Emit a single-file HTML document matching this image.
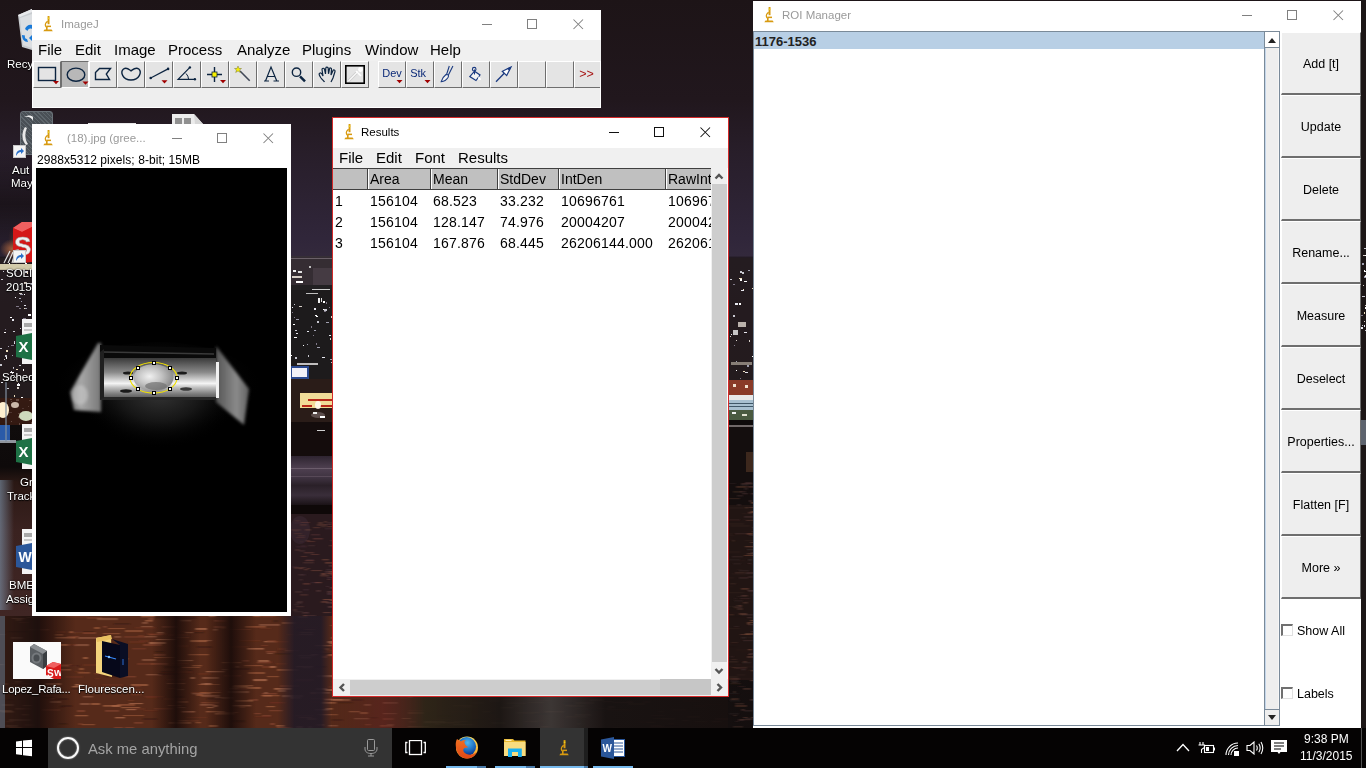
<!DOCTYPE html>
<html><head><meta charset="utf-8">
<style>
*{margin:0;padding:0;box-sizing:border-box}
html,body{width:1366px;height:768px;overflow:hidden}
body{position:relative;font-family:"Liberation Sans",sans-serif;background:#1f1619}
.a{position:absolute}
.t{position:absolute;white-space:nowrap;line-height:1}
.ttl{font-size:11.5px;color:#9a9a9a}
.menu{font-size:15px;color:#000}
.tb{position:absolute;top:61px;width:28px;height:27px;background:#e4e4e4;border-top:1px solid #fff;border-left:1px solid #fff;border-right:1px solid #6e6e6e;border-bottom:1px solid #6e6e6e}
.tb.p{background:#b8b8b8;border-top-color:#6e6e6e;border-left-color:#6e6e6e;border-right-color:#fff;border-bottom-color:#fff}
.c14{font-size:14px;color:#000}
.rb{position:absolute;left:1281px;width:80px;height:63px;background:#eeeeee;border-top:1px solid #fff;border-left:1px solid #fff;border-right:1px solid #6e6e6e;border-bottom:2px solid #6e6e6e}
.rbt{position:absolute;left:1281px;width:80px;text-align:center;font-size:12.5px;line-height:1;color:#000;white-space:nowrap}
.dl{position:absolute;font-size:11.5px;color:#fff;text-shadow:0 0 2px #000,0 1px 1px #000;white-space:nowrap;line-height:1}
</style></head><body>

<svg class="a" style="left:0;top:0" width="1366" height="768" viewBox="0 0 1366 768"><defs>
<linearGradient id="sky" x1="0" y1="0" x2="0" y2="768" gradientUnits="userSpaceOnUse">
<stop offset="0" stop-color="#1d1417"/><stop offset="0.13" stop-color="#21171d"/><stop offset="0.2" stop-color="#281e2a"/><stop offset="0.31" stop-color="#30263a"/>
<stop offset="0.333" stop-color="#33293c"/><stop offset="0.336" stop-color="#1e171c"/><stop offset="0.52" stop-color="#1c1416"/>
<stop offset="0.545" stop-color="#120c0c"/><stop offset="0.58" stop-color="#302630"/><stop offset="0.62" stop-color="#3a2e38"/>
<stop offset="0.65" stop-color="#1a1212"/><stop offset="0.68" stop-color="#3a2018"/><stop offset="0.8" stop-color="#5e3020"/>
<stop offset="1" stop-color="#4a2418"/></linearGradient>
<linearGradient id="vb" x1="0" y1="0" x2="1" y2="0"><stop offset="0" stop-color="#1a0c0a" stop-opacity="0"/><stop offset="0.5" stop-color="#1a0c0a" stop-opacity="0.92"/><stop offset="1" stop-color="#1a0c0a" stop-opacity="0"/></linearGradient>
<linearGradient id="vbp" x1="0" y1="0" x2="1" y2="0"><stop offset="0" stop-color="#221a26" stop-opacity="0"/><stop offset="0.3" stop-color="#221a26" stop-opacity="0.9"/><stop offset="0.8" stop-color="#221a26" stop-opacity="0.9"/><stop offset="1" stop-color="#221a26" stop-opacity="0"/></linearGradient>
<linearGradient id="bl1" x1="0" y1="0" x2="1" y2="0"><stop offset="0" stop-color="#8098b0" stop-opacity="0.8"/><stop offset="1" stop-color="#8098b0" stop-opacity="0"/></linearGradient><filter id="lb" x="0" y="0" width="100%" height="100%"><feGaussianBlur stdDeviation="0.4"/></filter><linearGradient id="fgrad" x1="332" y1="0" x2="753" y2="0" gradientUnits="userSpaceOnUse"><stop offset="0" stop-color="#4a2418" stop-opacity="0.2"/><stop offset="0.12" stop-color="#5a2020" stop-opacity="0.5"/><stop offset="0.22" stop-color="#2a2418" stop-opacity="0.9"/><stop offset="0.4" stop-color="#1a1614" stop-opacity="0.95"/><stop offset="0.52" stop-color="#3a3838" stop-opacity="0.9"/><stop offset="0.65" stop-color="#161212" stop-opacity="0.95"/><stop offset="1" stop-color="#140e0e" stop-opacity="0.95"/></linearGradient><linearGradient id="refl" x1="0" y1="0" x2="0" y2="1"><stop offset="0" stop-color="#2e2430"/><stop offset="0.25" stop-color="#4e4050"/><stop offset="0.45" stop-color="#3e3240"/><stop offset="0.6" stop-color="#2a2028"/><stop offset="0.8" stop-color="#3a2e3a"/><stop offset="1" stop-color="#1a1216"/></linearGradient><linearGradient id="lstrip" x1="0" y1="0" x2="0" y2="1"><stop offset="0" stop-color="#100c0c"/><stop offset="0.22" stop-color="#0e0a0a"/><stop offset="0.3" stop-color="#2a1814"/><stop offset="0.55" stop-color="#3a2220"/><stop offset="1" stop-color="#402624"/></linearGradient><radialGradient id="glw" cx="0.5" cy="0.5" r="0.5"><stop offset="0" stop-color="#ffb050" stop-opacity="0.9"/><stop offset="1" stop-color="#ff8030" stop-opacity="0"/></radialGradient>
</defs>
<rect x="0" y="0" width="1366" height="768" fill="url(#sky)"/>
<filter id="sb" x="-10%" y="-100%" width="120%" height="300%"><feGaussianBlur stdDeviation="1.2 0.5"/></filter><rect x="0" y="505" width="760" height="223" fill="#562a1a"/><g filter="url(#sb)"><rect x="239" y="539" width="16" height="1.1" fill="#8a4a30" opacity="0.6"/><rect x="272" y="518" width="13" height="1.0" fill="#3a1a12" opacity="0.6"/><rect x="312" y="559" width="14" height="1.1" fill="#8a4a30" opacity="0.6"/><rect x="720" y="646" width="14" height="1.1" fill="#3a1a12" opacity="0.6"/><rect x="28" y="554" width="14" height="1.2" fill="#3a1a12" opacity="0.6"/><rect x="101" y="531" width="10" height="2.0" fill="#b06a48" opacity="0.6"/><rect x="69" y="632" width="7" height="1.1" fill="#8a4a30" opacity="0.6"/><rect x="425" y="643" width="13" height="1.6" fill="#6a3020" opacity="0.6"/><rect x="349" y="711" width="11" height="1.3" fill="#b06a48" opacity="0.6"/><rect x="528" y="559" width="14" height="1.6" fill="#6a3020" opacity="0.6"/><rect x="552" y="569" width="22" height="1.1" fill="#3a1a12" opacity="0.6"/><rect x="117" y="581" width="21" height="1.5" fill="#8a4a30" opacity="0.6"/><rect x="579" y="633" width="20" height="1.4" fill="#6a3020" opacity="0.6"/><rect x="448" y="634" width="12" height="2.0" fill="#c07a58" opacity="0.6"/><rect x="355" y="653" width="5" height="1.8" fill="#9a6048" opacity="0.6"/><rect x="209" y="591" width="16" height="1.0" fill="#9a6048" opacity="0.6"/><rect x="264" y="641" width="13" height="1.3" fill="#c07a58" opacity="0.6"/><rect x="90" y="560" width="11" height="2.0" fill="#8a4a30" opacity="0.6"/><rect x="118" y="595" width="9" height="1.2" fill="#3a1a12" opacity="0.6"/><rect x="655" y="567" width="11" height="1.4" fill="#3a1a12" opacity="0.6"/><rect x="727" y="539" width="7" height="1.3" fill="#7a3e28" opacity="0.6"/><rect x="-1" y="690" width="7" height="1.3" fill="#b06a48" opacity="0.6"/><rect x="313" y="587" width="14" height="2.1" fill="#a05a3a" opacity="0.6"/><rect x="342" y="699" width="21" height="1.8" fill="#3a1a12" opacity="0.6"/><rect x="297" y="593" width="13" height="1.5" fill="#7a3e28" opacity="0.6"/><rect x="42" y="552" width="7" height="1.4" fill="#a05a3a" opacity="0.6"/><rect x="69" y="631" width="14" height="2.1" fill="#a05a3a" opacity="0.6"/><rect x="44" y="551" width="11" height="1.8" fill="#6a3020" opacity="0.6"/><rect x="454" y="611" width="6" height="1.6" fill="#9a6048" opacity="0.6"/><rect x="360" y="575" width="7" height="1.9" fill="#c07a58" opacity="0.6"/><rect x="359" y="659" width="13" height="1.2" fill="#6a3020" opacity="0.6"/><rect x="103" y="626" width="4" height="1.6" fill="#8a4a30" opacity="0.6"/><rect x="526" y="563" width="11" height="1.2" fill="#7a3e28" opacity="0.6"/><rect x="400" y="679" width="10" height="1.3" fill="#7a3e28" opacity="0.6"/><rect x="611" y="687" width="17" height="1.3" fill="#9a6048" opacity="0.6"/><rect x="264" y="511" width="5" height="1.3" fill="#c07a58" opacity="0.6"/><rect x="139" y="640" width="10" height="2.0" fill="#6a3020" opacity="0.6"/><rect x="725" y="586" width="8" height="1.3" fill="#7a3e28" opacity="0.6"/><rect x="250" y="613" width="22" height="1.7" fill="#a05a3a" opacity="0.6"/><rect x="359" y="651" width="18" height="1.1" fill="#8a4a30" opacity="0.6"/><rect x="691" y="679" width="18" height="1.6" fill="#b06a48" opacity="0.6"/><rect x="324" y="647" width="6" height="2.1" fill="#3a1a12" opacity="0.6"/><rect x="347" y="671" width="6" height="1.2" fill="#b06a48" opacity="0.6"/><rect x="11" y="637" width="12" height="1.8" fill="#9a6048" opacity="0.6"/><rect x="496" y="583" width="14" height="1.2" fill="#a05a3a" opacity="0.6"/><rect x="606" y="667" width="6" height="1.9" fill="#b06a48" opacity="0.6"/><rect x="324" y="699" width="19" height="1.3" fill="#c07a58" opacity="0.6"/><rect x="154" y="617" width="18" height="1.4" fill="#3a1a12" opacity="0.6"/><rect x="632" y="519" width="17" height="2.1" fill="#3a1a12" opacity="0.6"/><rect x="627" y="701" width="6" height="1.2" fill="#a05a3a" opacity="0.6"/><rect x="662" y="678" width="15" height="1.9" fill="#b06a48" opacity="0.6"/><rect x="123" y="611" width="17" height="1.7" fill="#6a3020" opacity="0.6"/><rect x="515" y="623" width="13" height="1.9" fill="#a05a3a" opacity="0.6"/><rect x="181" y="567" width="18" height="1.6" fill="#a05a3a" opacity="0.6"/><rect x="575" y="708" width="12" height="1.7" fill="#7a3e28" opacity="0.6"/><rect x="523" y="606" width="14" height="1.6" fill="#7a3e28" opacity="0.6"/><rect x="528" y="700" width="21" height="1.3" fill="#7a3e28" opacity="0.6"/><rect x="637" y="536" width="6" height="1.5" fill="#8a4a30" opacity="0.6"/><rect x="507" y="601" width="8" height="1.4" fill="#8a4a30" opacity="0.6"/><rect x="681" y="539" width="17" height="1.8" fill="#b06a48" opacity="0.6"/><rect x="185" y="536" width="12" height="1.9" fill="#8a4a30" opacity="0.6"/><rect x="297" y="614" width="22" height="2.0" fill="#b06a48" opacity="0.6"/><rect x="534" y="727" width="11" height="1.5" fill="#6a3020" opacity="0.6"/><rect x="235" y="666" width="4" height="1.7" fill="#9a6048" opacity="0.6"/><rect x="531" y="591" width="13" height="1.4" fill="#8a4a30" opacity="0.6"/><rect x="77" y="710" width="8" height="2.1" fill="#8a4a30" opacity="0.6"/><rect x="194" y="514" width="18" height="1.3" fill="#b06a48" opacity="0.6"/><rect x="621" y="694" width="16" height="2.1" fill="#3a1a12" opacity="0.6"/><rect x="105" y="710" width="14" height="1.8" fill="#8a4a30" opacity="0.6"/><rect x="205" y="683" width="7" height="2.1" fill="#c07a58" opacity="0.6"/><rect x="713" y="646" width="18" height="1.1" fill="#7a3e28" opacity="0.6"/><rect x="41" y="697" width="12" height="1.4" fill="#3a1a12" opacity="0.6"/><rect x="704" y="565" width="6" height="1.6" fill="#7a3e28" opacity="0.6"/><rect x="712" y="721" width="9" height="1.2" fill="#c07a58" opacity="0.6"/><rect x="474" y="623" width="8" height="1.5" fill="#b06a48" opacity="0.6"/><rect x="198" y="684" width="22" height="1.0" fill="#a05a3a" opacity="0.6"/><rect x="554" y="628" width="7" height="1.6" fill="#9a6048" opacity="0.6"/><rect x="72" y="688" width="12" height="1.6" fill="#3a1a12" opacity="0.6"/><rect x="737" y="574" width="8" height="1.3" fill="#7a3e28" opacity="0.6"/><rect x="631" y="663" width="15" height="1.5" fill="#6a3020" opacity="0.6"/><rect x="746" y="692" width="4" height="1.8" fill="#c07a58" opacity="0.6"/><rect x="322" y="517" width="16" height="1.5" fill="#c07a58" opacity="0.6"/><rect x="451" y="659" width="5" height="1.2" fill="#c07a58" opacity="0.6"/><rect x="333" y="564" width="21" height="2.2" fill="#6a3020" opacity="0.6"/><rect x="178" y="720" width="10" height="1.4" fill="#a05a3a" opacity="0.6"/><rect x="248" y="524" width="9" height="1.8" fill="#7a3e28" opacity="0.6"/><rect x="379" y="506" width="9" height="1.1" fill="#3a1a12" opacity="0.6"/><rect x="442" y="593" width="9" height="1.8" fill="#8a4a30" opacity="0.6"/><rect x="441" y="623" width="18" height="1.8" fill="#3a1a12" opacity="0.6"/><rect x="579" y="666" width="13" height="1.3" fill="#b06a48" opacity="0.6"/><rect x="24" y="691" width="20" height="1.8" fill="#b06a48" opacity="0.6"/><rect x="691" y="673" width="14" height="2.0" fill="#a05a3a" opacity="0.6"/><rect x="626" y="635" width="20" height="1.8" fill="#7a3e28" opacity="0.6"/><rect x="56" y="514" width="15" height="2.2" fill="#3a1a12" opacity="0.6"/><rect x="634" y="630" width="15" height="1.8" fill="#7a3e28" opacity="0.6"/><rect x="367" y="506" width="18" height="1.9" fill="#8a4a30" opacity="0.6"/><rect x="498" y="520" width="17" height="1.3" fill="#8a4a30" opacity="0.6"/><rect x="642" y="557" width="18" height="1.3" fill="#9a6048" opacity="0.6"/><rect x="370" y="590" width="13" height="1.8" fill="#a05a3a" opacity="0.6"/><rect x="465" y="648" width="5" height="1.2" fill="#c07a58" opacity="0.6"/><rect x="492" y="660" width="15" height="1.2" fill="#9a6048" opacity="0.6"/><rect x="37" y="565" width="16" height="1.8" fill="#9a6048" opacity="0.6"/><rect x="214" y="620" width="12" height="1.6" fill="#8a4a30" opacity="0.6"/><rect x="755" y="627" width="10" height="1.1" fill="#9a6048" opacity="0.6"/><rect x="3" y="607" width="19" height="2.2" fill="#9a6048" opacity="0.6"/><rect x="755" y="591" width="20" height="2.1" fill="#8a4a30" opacity="0.6"/><rect x="438" y="537" width="13" height="2.1" fill="#b06a48" opacity="0.6"/><rect x="455" y="646" width="9" height="1.1" fill="#6a3020" opacity="0.6"/><rect x="168" y="705" width="13" height="1.0" fill="#a05a3a" opacity="0.6"/><rect x="721" y="657" width="11" height="1.9" fill="#3a1a12" opacity="0.6"/><rect x="255" y="575" width="19" height="1.0" fill="#6a3020" opacity="0.6"/><rect x="636" y="532" width="21" height="1.9" fill="#c07a58" opacity="0.6"/><rect x="185" y="519" width="11" height="2.0" fill="#8a4a30" opacity="0.6"/><rect x="268" y="600" width="9" height="1.1" fill="#8a4a30" opacity="0.6"/><rect x="30" y="653" width="15" height="1.2" fill="#c07a58" opacity="0.6"/><rect x="326" y="575" width="18" height="1.9" fill="#3a1a12" opacity="0.6"/><rect x="671" y="686" width="15" height="2.1" fill="#7a3e28" opacity="0.6"/><rect x="544" y="516" width="17" height="1.5" fill="#b06a48" opacity="0.6"/><rect x="486" y="569" width="5" height="2.1" fill="#b06a48" opacity="0.6"/><rect x="121" y="598" width="9" height="1.3" fill="#c07a58" opacity="0.6"/><rect x="303" y="558" width="13" height="1.8" fill="#8a4a30" opacity="0.6"/><rect x="119" y="541" width="8" height="2.1" fill="#9a6048" opacity="0.6"/><rect x="414" y="606" width="10" height="1.9" fill="#3a1a12" opacity="0.6"/><rect x="97" y="548" width="6" height="1.4" fill="#8a4a30" opacity="0.6"/><rect x="236" y="587" width="19" height="1.2" fill="#a05a3a" opacity="0.6"/><rect x="567" y="597" width="11" height="1.6" fill="#3a1a12" opacity="0.6"/><rect x="198" y="673" width="13" height="1.7" fill="#6a3020" opacity="0.6"/><rect x="87" y="617" width="15" height="2.0" fill="#7a3e28" opacity="0.6"/><rect x="61" y="705" width="11" height="1.8" fill="#3a1a12" opacity="0.6"/><rect x="725" y="694" width="20" height="1.0" fill="#a05a3a" opacity="0.6"/><rect x="317" y="675" width="18" height="2.2" fill="#9a6048" opacity="0.6"/><rect x="-10" y="592" width="21" height="2.0" fill="#9a6048" opacity="0.6"/><rect x="739" y="560" width="6" height="1.2" fill="#8a4a30" opacity="0.6"/><rect x="715" y="666" width="16" height="1.9" fill="#9a6048" opacity="0.6"/><rect x="55" y="678" width="4" height="1.2" fill="#a05a3a" opacity="0.6"/><rect x="487" y="573" width="6" height="1.3" fill="#3a1a12" opacity="0.6"/><rect x="528" y="530" width="5" height="1.6" fill="#7a3e28" opacity="0.6"/><rect x="289" y="555" width="15" height="1.0" fill="#c07a58" opacity="0.6"/><rect x="757" y="567" width="10" height="2.0" fill="#7a3e28" opacity="0.6"/><rect x="356" y="557" width="8" height="2.2" fill="#c07a58" opacity="0.6"/><rect x="33" y="548" width="20" height="1.8" fill="#8a4a30" opacity="0.6"/><rect x="188" y="654" width="21" height="1.3" fill="#a05a3a" opacity="0.6"/><rect x="526" y="665" width="11" height="1.5" fill="#a05a3a" opacity="0.6"/><rect x="604" y="670" width="13" height="1.2" fill="#7a3e28" opacity="0.6"/><rect x="230" y="688" width="8" height="1.3" fill="#c07a58" opacity="0.6"/><rect x="74" y="644" width="15" height="2.1" fill="#9a6048" opacity="0.6"/><rect x="311" y="653" width="21" height="1.2" fill="#3a1a12" opacity="0.6"/><rect x="32" y="510" width="15" height="1.5" fill="#a05a3a" opacity="0.6"/><rect x="132" y="605" width="17" height="1.4" fill="#8a4a30" opacity="0.6"/><rect x="758" y="713" width="10" height="1.2" fill="#9a6048" opacity="0.6"/><rect x="15" y="653" width="11" height="1.4" fill="#6a3020" opacity="0.6"/><rect x="331" y="529" width="5" height="1.1" fill="#3a1a12" opacity="0.6"/><rect x="726" y="533" width="21" height="1.2" fill="#6a3020" opacity="0.6"/><rect x="582" y="574" width="18" height="1.1" fill="#9a6048" opacity="0.6"/><rect x="141" y="626" width="12" height="1.4" fill="#9a6048" opacity="0.6"/><rect x="13" y="597" width="19" height="1.9" fill="#a05a3a" opacity="0.6"/><rect x="279" y="608" width="18" height="1.1" fill="#7a3e28" opacity="0.6"/><rect x="565" y="705" width="10" height="1.3" fill="#a05a3a" opacity="0.6"/><rect x="192" y="665" width="10" height="1.3" fill="#a05a3a" opacity="0.6"/><rect x="546" y="638" width="19" height="2.1" fill="#8a4a30" opacity="0.6"/><rect x="9" y="557" width="13" height="2.1" fill="#3a1a12" opacity="0.6"/><rect x="598" y="709" width="19" height="1.2" fill="#9a6048" opacity="0.6"/><rect x="131" y="684" width="17" height="2.0" fill="#b06a48" opacity="0.6"/><rect x="458" y="578" width="10" height="1.4" fill="#8a4a30" opacity="0.6"/><rect x="384" y="592" width="7" height="1.5" fill="#a05a3a" opacity="0.6"/><rect x="361" y="626" width="7" height="1.5" fill="#8a4a30" opacity="0.6"/><rect x="751" y="564" width="6" height="1.1" fill="#9a6048" opacity="0.6"/><rect x="751" y="722" width="7" height="1.2" fill="#9a6048" opacity="0.6"/><rect x="468" y="655" width="17" height="2.0" fill="#8a4a30" opacity="0.6"/><rect x="590" y="571" width="9" height="1.3" fill="#c07a58" opacity="0.6"/><rect x="558" y="549" width="8" height="1.3" fill="#b06a48" opacity="0.6"/><rect x="207" y="707" width="7" height="1.1" fill="#c07a58" opacity="0.6"/><rect x="754" y="618" width="8" height="2.0" fill="#9a6048" opacity="0.6"/><rect x="753" y="528" width="13" height="2.0" fill="#9a6048" opacity="0.6"/><rect x="694" y="514" width="9" height="1.1" fill="#7a3e28" opacity="0.6"/><rect x="452" y="690" width="7" height="1.1" fill="#b06a48" opacity="0.6"/><rect x="336" y="563" width="18" height="2.1" fill="#8a4a30" opacity="0.6"/><rect x="481" y="663" width="10" height="1.0" fill="#6a3020" opacity="0.6"/><rect x="99" y="550" width="9" height="1.7" fill="#7a3e28" opacity="0.6"/><rect x="617" y="688" width="11" height="1.4" fill="#c07a58" opacity="0.6"/><rect x="50" y="512" width="13" height="1.6" fill="#3a1a12" opacity="0.6"/><rect x="68" y="593" width="14" height="1.8" fill="#8a4a30" opacity="0.6"/><rect x="493" y="594" width="9" height="2.2" fill="#c07a58" opacity="0.6"/><rect x="312" y="516" width="17" height="2.1" fill="#3a1a12" opacity="0.6"/><rect x="311" y="698" width="22" height="1.4" fill="#7a3e28" opacity="0.6"/><rect x="291" y="595" width="21" height="1.5" fill="#b06a48" opacity="0.6"/><rect x="316" y="688" width="11" height="2.1" fill="#9a6048" opacity="0.6"/><rect x="585" y="534" width="5" height="1.2" fill="#3a1a12" opacity="0.6"/><rect x="59" y="644" width="11" height="1.6" fill="#b06a48" opacity="0.6"/><rect x="258" y="541" width="7" height="1.1" fill="#3a1a12" opacity="0.6"/><rect x="368" y="684" width="21" height="1.2" fill="#b06a48" opacity="0.6"/><rect x="635" y="515" width="20" height="1.4" fill="#3a1a12" opacity="0.6"/><rect x="56" y="664" width="16" height="2.1" fill="#7a3e28" opacity="0.6"/><rect x="468" y="642" width="8" height="1.6" fill="#7a3e28" opacity="0.6"/><rect x="22" y="714" width="7" height="1.4" fill="#b06a48" opacity="0.6"/><rect x="180" y="667" width="20" height="1.0" fill="#a05a3a" opacity="0.6"/><rect x="504" y="577" width="11" height="1.5" fill="#c07a58" opacity="0.6"/><rect x="490" y="574" width="8" height="1.5" fill="#6a3020" opacity="0.6"/><rect x="334" y="603" width="4" height="1.7" fill="#9a6048" opacity="0.6"/><rect x="348" y="605" width="15" height="2.0" fill="#b06a48" opacity="0.6"/><rect x="614" y="594" width="5" height="1.4" fill="#6a3020" opacity="0.6"/><rect x="61" y="604" width="13" height="1.0" fill="#b06a48" opacity="0.6"/><rect x="53" y="669" width="18" height="1.6" fill="#a05a3a" opacity="0.6"/><rect x="569" y="705" width="16" height="1.9" fill="#a05a3a" opacity="0.6"/><rect x="650" y="727" width="17" height="2.0" fill="#7a3e28" opacity="0.6"/><rect x="91" y="703" width="9" height="2.0" fill="#b06a48" opacity="0.6"/><rect x="518" y="666" width="8" height="2.0" fill="#c07a58" opacity="0.6"/><rect x="112" y="705" width="9" height="2.0" fill="#b06a48" opacity="0.6"/><rect x="186" y="720" width="13" height="1.7" fill="#7a3e28" opacity="0.6"/><rect x="236" y="513" width="7" height="1.2" fill="#c07a58" opacity="0.6"/><rect x="513" y="705" width="7" height="1.9" fill="#8a4a30" opacity="0.6"/><rect x="582" y="516" width="19" height="2.2" fill="#9a6048" opacity="0.6"/><rect x="417" y="634" width="20" height="1.1" fill="#3a1a12" opacity="0.6"/><rect x="558" y="588" width="11" height="1.4" fill="#b06a48" opacity="0.6"/><rect x="267" y="676" width="12" height="1.2" fill="#a05a3a" opacity="0.6"/><rect x="218" y="620" width="10" height="2.2" fill="#6a3020" opacity="0.6"/><rect x="554" y="672" width="8" height="1.3" fill="#3a1a12" opacity="0.6"/><rect x="312" y="586" width="5" height="1.6" fill="#a05a3a" opacity="0.6"/><rect x="7" y="506" width="10" height="1.1" fill="#6a3020" opacity="0.6"/><rect x="401" y="597" width="9" height="1.2" fill="#6a3020" opacity="0.6"/><rect x="470" y="611" width="6" height="2.1" fill="#7a3e28" opacity="0.6"/><rect x="535" y="606" width="5" height="1.2" fill="#c07a58" opacity="0.6"/><rect x="300" y="564" width="4" height="1.8" fill="#6a3020" opacity="0.6"/><rect x="448" y="634" width="15" height="1.6" fill="#9a6048" opacity="0.6"/><rect x="181" y="706" width="5" height="1.6" fill="#3a1a12" opacity="0.6"/><rect x="133" y="541" width="20" height="1.1" fill="#7a3e28" opacity="0.6"/><rect x="100" y="549" width="15" height="1.6" fill="#3a1a12" opacity="0.6"/><rect x="616" y="544" width="10" height="1.4" fill="#a05a3a" opacity="0.6"/><rect x="755" y="667" width="13" height="1.6" fill="#3a1a12" opacity="0.6"/><rect x="640" y="671" width="12" height="1.9" fill="#9a6048" opacity="0.6"/><rect x="125" y="727" width="9" height="1.8" fill="#8a4a30" opacity="0.6"/><rect x="248" y="672" width="17" height="2.0" fill="#a05a3a" opacity="0.6"/><rect x="195" y="628" width="12" height="1.9" fill="#c07a58" opacity="0.6"/><rect x="218" y="712" width="20" height="1.1" fill="#a05a3a" opacity="0.6"/><rect x="121" y="707" width="19" height="1.2" fill="#b06a48" opacity="0.6"/><rect x="565" y="578" width="20" height="1.4" fill="#7a3e28" opacity="0.6"/><rect x="282" y="695" width="21" height="2.2" fill="#9a6048" opacity="0.6"/><rect x="354" y="623" width="4" height="1.0" fill="#7a3e28" opacity="0.6"/><rect x="429" y="574" width="8" height="1.7" fill="#8a4a30" opacity="0.6"/><rect x="425" y="543" width="5" height="1.1" fill="#b06a48" opacity="0.6"/><rect x="256" y="537" width="5" height="1.0" fill="#a05a3a" opacity="0.6"/><rect x="527" y="669" width="5" height="1.7" fill="#6a3020" opacity="0.6"/><rect x="143" y="718" width="14" height="1.8" fill="#3a1a12" opacity="0.6"/><rect x="72" y="551" width="6" height="1.0" fill="#8a4a30" opacity="0.6"/><rect x="625" y="646" width="9" height="1.1" fill="#8a4a30" opacity="0.6"/><rect x="600" y="649" width="9" height="1.4" fill="#c07a58" opacity="0.6"/><rect x="6" y="562" width="9" height="1.9" fill="#6a3020" opacity="0.6"/><rect x="691" y="677" width="15" height="1.6" fill="#c07a58" opacity="0.6"/><rect x="466" y="512" width="11" height="1.5" fill="#8a4a30" opacity="0.6"/><rect x="257" y="662" width="14" height="1.3" fill="#8a4a30" opacity="0.6"/><rect x="432" y="569" width="12" height="1.6" fill="#c07a58" opacity="0.6"/><rect x="577" y="723" width="4" height="1.6" fill="#9a6048" opacity="0.6"/><rect x="525" y="689" width="21" height="1.7" fill="#c07a58" opacity="0.6"/><rect x="435" y="540" width="19" height="2.1" fill="#7a3e28" opacity="0.6"/><rect x="374" y="530" width="15" height="1.1" fill="#8a4a30" opacity="0.6"/><rect x="474" y="584" width="11" height="1.5" fill="#8a4a30" opacity="0.6"/><rect x="315" y="649" width="11" height="1.4" fill="#3a1a12" opacity="0.6"/><rect x="684" y="617" width="11" height="2.1" fill="#7a3e28" opacity="0.6"/><rect x="717" y="533" width="15" height="1.8" fill="#a05a3a" opacity="0.6"/><rect x="258" y="578" width="7" height="2.0" fill="#6a3020" opacity="0.6"/><rect x="121" y="603" width="18" height="1.7" fill="#b06a48" opacity="0.6"/><rect x="247" y="648" width="17" height="1.6" fill="#c07a58" opacity="0.6"/><rect x="222" y="662" width="19" height="1.2" fill="#b06a48" opacity="0.6"/><rect x="741" y="666" width="15" height="1.4" fill="#7a3e28" opacity="0.6"/><rect x="243" y="547" width="22" height="1.9" fill="#8a4a30" opacity="0.6"/><rect x="117" y="652" width="8" height="1.2" fill="#b06a48" opacity="0.6"/><rect x="602" y="669" width="12" height="1.2" fill="#8a4a30" opacity="0.6"/><rect x="206" y="702" width="12" height="1.0" fill="#3a1a12" opacity="0.6"/><rect x="524" y="617" width="15" height="1.6" fill="#b06a48" opacity="0.6"/><rect x="188" y="670" width="4" height="1.3" fill="#3a1a12" opacity="0.6"/><rect x="530" y="636" width="16" height="2.0" fill="#7a3e28" opacity="0.6"/><rect x="513" y="648" width="12" height="1.4" fill="#8a4a30" opacity="0.6"/><rect x="679" y="559" width="11" height="1.9" fill="#b06a48" opacity="0.6"/><rect x="183" y="599" width="12" height="1.7" fill="#3a1a12" opacity="0.6"/><rect x="389" y="652" width="20" height="2.1" fill="#6a3020" opacity="0.6"/><rect x="589" y="592" width="13" height="2.2" fill="#a05a3a" opacity="0.6"/><rect x="183" y="554" width="17" height="2.1" fill="#7a3e28" opacity="0.6"/><rect x="390" y="528" width="14" height="1.6" fill="#9a6048" opacity="0.6"/><rect x="384" y="648" width="19" height="1.6" fill="#3a1a12" opacity="0.6"/><rect x="561" y="607" width="22" height="1.2" fill="#8a4a30" opacity="0.6"/><rect x="551" y="642" width="15" height="1.3" fill="#3a1a12" opacity="0.6"/><rect x="298" y="508" width="12" height="1.5" fill="#6a3020" opacity="0.6"/><rect x="437" y="529" width="9" height="1.5" fill="#7a3e28" opacity="0.6"/><rect x="756" y="719" width="12" height="1.2" fill="#8a4a30" opacity="0.6"/><rect x="613" y="646" width="12" height="1.7" fill="#7a3e28" opacity="0.6"/><rect x="617" y="538" width="16" height="2.0" fill="#3a1a12" opacity="0.6"/><rect x="350" y="571" width="14" height="1.2" fill="#9a6048" opacity="0.6"/><rect x="263" y="695" width="9" height="1.5" fill="#c07a58" opacity="0.6"/><rect x="747" y="656" width="13" height="2.0" fill="#c07a58" opacity="0.6"/><rect x="266" y="651" width="10" height="1.6" fill="#8a4a30" opacity="0.6"/><rect x="498" y="586" width="21" height="2.0" fill="#a05a3a" opacity="0.6"/><rect x="56" y="631" width="10" height="2.1" fill="#6a3020" opacity="0.6"/><rect x="478" y="508" width="4" height="2.1" fill="#c07a58" opacity="0.6"/><rect x="183" y="528" width="7" height="1.3" fill="#9a6048" opacity="0.6"/><rect x="257" y="539" width="20" height="2.0" fill="#b06a48" opacity="0.6"/><rect x="459" y="658" width="22" height="1.1" fill="#c07a58" opacity="0.6"/><rect x="142" y="659" width="14" height="1.9" fill="#9a6048" opacity="0.6"/><rect x="507" y="531" width="6" height="1.5" fill="#b06a48" opacity="0.6"/><rect x="354" y="629" width="13" height="2.1" fill="#9a6048" opacity="0.6"/><rect x="180" y="542" width="15" height="1.9" fill="#b06a48" opacity="0.6"/><rect x="637" y="609" width="14" height="1.8" fill="#9a6048" opacity="0.6"/><rect x="279" y="598" width="21" height="1.1" fill="#6a3020" opacity="0.6"/><rect x="480" y="511" width="15" height="1.8" fill="#6a3020" opacity="0.6"/><rect x="613" y="526" width="13" height="1.9" fill="#b06a48" opacity="0.6"/><rect x="16" y="665" width="15" height="1.4" fill="#6a3020" opacity="0.6"/><rect x="253" y="679" width="14" height="2.1" fill="#c07a58" opacity="0.6"/><rect x="325" y="599" width="14" height="2.0" fill="#c07a58" opacity="0.6"/><rect x="263" y="615" width="10" height="2.2" fill="#6a3020" opacity="0.6"/><rect x="741" y="651" width="18" height="1.4" fill="#6a3020" opacity="0.6"/><rect x="539" y="533" width="22" height="1.1" fill="#a05a3a" opacity="0.6"/><rect x="297" y="629" width="11" height="1.7" fill="#3a1a12" opacity="0.6"/><rect x="221" y="506" width="7" height="2.1" fill="#a05a3a" opacity="0.6"/><rect x="598" y="708" width="15" height="1.7" fill="#8a4a30" opacity="0.6"/><rect x="154" y="654" width="12" height="1.9" fill="#8a4a30" opacity="0.6"/><rect x="501" y="699" width="12" height="1.1" fill="#a05a3a" opacity="0.6"/><rect x="274" y="688" width="18" height="1.7" fill="#c07a58" opacity="0.6"/><rect x="654" y="546" width="5" height="1.0" fill="#a05a3a" opacity="0.6"/><rect x="373" y="621" width="19" height="1.9" fill="#3a1a12" opacity="0.6"/><rect x="433" y="710" width="12" height="1.0" fill="#3a1a12" opacity="0.6"/><rect x="447" y="726" width="16" height="1.2" fill="#3a1a12" opacity="0.6"/><rect x="413" y="523" width="12" height="2.1" fill="#a05a3a" opacity="0.6"/><rect x="319" y="507" width="16" height="2.2" fill="#8a4a30" opacity="0.6"/><rect x="158" y="532" width="13" height="1.3" fill="#7a3e28" opacity="0.6"/><rect x="337" y="671" width="21" height="1.4" fill="#b06a48" opacity="0.6"/><rect x="552" y="524" width="15" height="1.9" fill="#9a6048" opacity="0.6"/><rect x="506" y="703" width="20" height="1.1" fill="#a05a3a" opacity="0.6"/><rect x="-1" y="508" width="16" height="2.0" fill="#8a4a30" opacity="0.6"/><rect x="289" y="575" width="15" height="2.1" fill="#9a6048" opacity="0.6"/><rect x="459" y="576" width="21" height="1.9" fill="#9a6048" opacity="0.6"/><rect x="511" y="537" width="18" height="1.4" fill="#b06a48" opacity="0.6"/><rect x="475" y="598" width="11" height="1.9" fill="#c07a58" opacity="0.6"/><rect x="594" y="631" width="9" height="1.1" fill="#6a3020" opacity="0.6"/><rect x="660" y="667" width="4" height="1.2" fill="#c07a58" opacity="0.6"/><rect x="440" y="723" width="8" height="1.5" fill="#3a1a12" opacity="0.6"/><rect x="453" y="705" width="19" height="1.3" fill="#a05a3a" opacity="0.6"/><rect x="238" y="565" width="7" height="2.1" fill="#a05a3a" opacity="0.6"/><rect x="212" y="536" width="20" height="2.2" fill="#b06a48" opacity="0.6"/><rect x="201" y="695" width="19" height="1.8" fill="#9a6048" opacity="0.6"/><rect x="257" y="524" width="14" height="2.0" fill="#7a3e28" opacity="0.6"/><rect x="597" y="666" width="22" height="1.4" fill="#a05a3a" opacity="0.6"/><rect x="512" y="609" width="8" height="1.3" fill="#a05a3a" opacity="0.6"/><rect x="600" y="608" width="6" height="2.0" fill="#8a4a30" opacity="0.6"/><rect x="169" y="634" width="20" height="2.1" fill="#6a3020" opacity="0.6"/><rect x="357" y="636" width="7" height="1.2" fill="#b06a48" opacity="0.6"/><rect x="611" y="570" width="14" height="1.4" fill="#b06a48" opacity="0.6"/><rect x="180" y="711" width="13" height="2.0" fill="#6a3020" opacity="0.6"/><rect x="477" y="681" width="7" height="1.7" fill="#6a3020" opacity="0.6"/><rect x="206" y="640" width="6" height="1.2" fill="#9a6048" opacity="0.6"/><rect x="442" y="553" width="21" height="1.3" fill="#8a4a30" opacity="0.6"/><rect x="719" y="676" width="19" height="2.2" fill="#c07a58" opacity="0.6"/><rect x="640" y="581" width="22" height="1.5" fill="#a05a3a" opacity="0.6"/><rect x="29" y="629" width="20" height="1.5" fill="#8a4a30" opacity="0.6"/><rect x="654" y="648" width="21" height="1.8" fill="#8a4a30" opacity="0.6"/><rect x="188" y="631" width="16" height="2.1" fill="#3a1a12" opacity="0.6"/><rect x="131" y="694" width="11" height="1.3" fill="#7a3e28" opacity="0.6"/><rect x="123" y="715" width="21" height="1.1" fill="#a05a3a" opacity="0.6"/><rect x="635" y="515" width="18" height="1.9" fill="#9a6048" opacity="0.6"/><rect x="33" y="537" width="18" height="2.1" fill="#c07a58" opacity="0.6"/><rect x="444" y="603" width="16" height="1.6" fill="#6a3020" opacity="0.6"/><rect x="188" y="533" width="13" height="1.2" fill="#7a3e28" opacity="0.6"/><rect x="612" y="709" width="20" height="1.6" fill="#7a3e28" opacity="0.6"/><rect x="605" y="540" width="19" height="1.1" fill="#6a3020" opacity="0.6"/><rect x="674" y="536" width="12" height="1.1" fill="#3a1a12" opacity="0.6"/><rect x="639" y="645" width="12" height="1.4" fill="#7a3e28" opacity="0.6"/><rect x="358" y="645" width="7" height="1.3" fill="#a05a3a" opacity="0.6"/><rect x="129" y="606" width="20" height="1.5" fill="#b06a48" opacity="0.6"/><rect x="195" y="597" width="7" height="1.3" fill="#c07a58" opacity="0.6"/><rect x="248" y="542" width="13" height="1.4" fill="#9a6048" opacity="0.6"/><rect x="78" y="723" width="5" height="2.1" fill="#7a3e28" opacity="0.6"/><rect x="421" y="691" width="6" height="1.9" fill="#6a3020" opacity="0.6"/><rect x="323" y="563" width="8" height="1.3" fill="#3a1a12" opacity="0.6"/><rect x="213" y="705" width="5" height="1.9" fill="#c07a58" opacity="0.6"/><rect x="101" y="648" width="12" height="1.6" fill="#b06a48" opacity="0.6"/><rect x="331" y="681" width="21" height="1.3" fill="#6a3020" opacity="0.6"/><rect x="325" y="708" width="8" height="1.7" fill="#b06a48" opacity="0.6"/><rect x="639" y="621" width="8" height="1.2" fill="#8a4a30" opacity="0.6"/><rect x="628" y="703" width="17" height="1.9" fill="#b06a48" opacity="0.6"/><rect x="149" y="642" width="17" height="2.0" fill="#c07a58" opacity="0.6"/><rect x="146" y="520" width="17" height="1.5" fill="#a05a3a" opacity="0.6"/><rect x="389" y="583" width="9" height="1.8" fill="#9a6048" opacity="0.6"/><rect x="60" y="596" width="18" height="1.2" fill="#c07a58" opacity="0.6"/><rect x="181" y="631" width="22" height="1.0" fill="#6a3020" opacity="0.6"/><rect x="433" y="696" width="10" height="2.1" fill="#8a4a30" opacity="0.6"/><rect x="83" y="664" width="19" height="2.0" fill="#6a3020" opacity="0.6"/><rect x="590" y="699" width="14" height="2.1" fill="#c07a58" opacity="0.6"/><rect x="662" y="718" width="13" height="1.6" fill="#b06a48" opacity="0.6"/><rect x="6" y="721" width="8" height="1.2" fill="#8a4a30" opacity="0.6"/><rect x="230" y="629" width="21" height="1.0" fill="#7a3e28" opacity="0.6"/><rect x="191" y="692" width="15" height="1.6" fill="#7a3e28" opacity="0.6"/><rect x="531" y="528" width="20" height="1.9" fill="#a05a3a" opacity="0.6"/><rect x="200" y="609" width="15" height="1.9" fill="#8a4a30" opacity="0.6"/><rect x="84" y="595" width="6" height="1.7" fill="#7a3e28" opacity="0.6"/><rect x="103" y="633" width="17" height="1.2" fill="#a05a3a" opacity="0.6"/><rect x="712" y="592" width="12" height="2.0" fill="#a05a3a" opacity="0.6"/><rect x="295" y="715" width="18" height="1.4" fill="#7a3e28" opacity="0.6"/><rect x="636" y="665" width="19" height="1.7" fill="#6a3020" opacity="0.6"/><rect x="618" y="694" width="5" height="1.6" fill="#6a3020" opacity="0.6"/><rect x="182" y="599" width="15" height="1.4" fill="#b06a48" opacity="0.6"/><rect x="43" y="602" width="13" height="1.0" fill="#b06a48" opacity="0.6"/><rect x="314" y="594" width="22" height="1.5" fill="#a05a3a" opacity="0.6"/><rect x="613" y="702" width="20" height="1.0" fill="#c07a58" opacity="0.6"/><rect x="697" y="644" width="15" height="2.0" fill="#a05a3a" opacity="0.6"/><rect x="468" y="561" width="13" height="1.5" fill="#a05a3a" opacity="0.6"/><rect x="211" y="573" width="16" height="1.1" fill="#c07a58" opacity="0.6"/><rect x="55" y="637" width="21" height="1.5" fill="#b06a48" opacity="0.6"/><rect x="672" y="709" width="14" height="1.3" fill="#8a4a30" opacity="0.6"/><rect x="560" y="569" width="12" height="1.8" fill="#7a3e28" opacity="0.6"/><rect x="491" y="550" width="17" height="1.6" fill="#c07a58" opacity="0.6"/><rect x="462" y="610" width="10" height="1.3" fill="#7a3e28" opacity="0.6"/><rect x="135" y="627" width="21" height="1.5" fill="#6a3020" opacity="0.6"/><rect x="115" y="717" width="10" height="1.4" fill="#c07a58" opacity="0.6"/><rect x="209" y="725" width="9" height="1.9" fill="#b06a48" opacity="0.6"/><rect x="414" y="640" width="10" height="1.8" fill="#3a1a12" opacity="0.6"/><rect x="632" y="584" width="18" height="1.6" fill="#b06a48" opacity="0.6"/><rect x="311" y="654" width="7" height="1.2" fill="#c07a58" opacity="0.6"/><rect x="622" y="620" width="17" height="1.9" fill="#9a6048" opacity="0.6"/><rect x="197" y="646" width="15" height="1.8" fill="#3a1a12" opacity="0.6"/><rect x="661" y="506" width="18" height="1.7" fill="#9a6048" opacity="0.6"/><rect x="296" y="726" width="7" height="2.0" fill="#c07a58" opacity="0.6"/><rect x="662" y="640" width="11" height="1.5" fill="#9a6048" opacity="0.6"/><rect x="212" y="584" width="10" height="1.6" fill="#3a1a12" opacity="0.6"/><rect x="489" y="507" width="17" height="2.2" fill="#3a1a12" opacity="0.6"/><rect x="332" y="546" width="9" height="1.2" fill="#3a1a12" opacity="0.6"/><rect x="438" y="525" width="21" height="1.4" fill="#7a3e28" opacity="0.6"/><rect x="728" y="551" width="12" height="2.1" fill="#a05a3a" opacity="0.6"/><rect x="10" y="562" width="20" height="1.4" fill="#c07a58" opacity="0.6"/><rect x="405" y="728" width="13" height="1.6" fill="#3a1a12" opacity="0.6"/><rect x="290" y="585" width="15" height="1.4" fill="#a05a3a" opacity="0.6"/><rect x="511" y="622" width="6" height="1.4" fill="#3a1a12" opacity="0.6"/><rect x="489" y="712" width="7" height="1.2" fill="#3a1a12" opacity="0.6"/><rect x="365" y="603" width="15" height="2.2" fill="#6a3020" opacity="0.6"/><rect x="523" y="671" width="6" height="1.4" fill="#6a3020" opacity="0.6"/><rect x="743" y="689" width="13" height="1.1" fill="#c07a58" opacity="0.6"/><rect x="521" y="688" width="22" height="2.1" fill="#3a1a12" opacity="0.6"/><rect x="476" y="622" width="19" height="1.2" fill="#7a3e28" opacity="0.6"/><rect x="307" y="518" width="14" height="1.1" fill="#a05a3a" opacity="0.6"/><rect x="523" y="507" width="4" height="1.9" fill="#a05a3a" opacity="0.6"/><rect x="696" y="594" width="6" height="1.0" fill="#a05a3a" opacity="0.6"/><rect x="141" y="616" width="14" height="1.3" fill="#b06a48" opacity="0.6"/><rect x="432" y="597" width="6" height="1.2" fill="#8a4a30" opacity="0.6"/><rect x="12" y="522" width="21" height="1.6" fill="#9a6048" opacity="0.6"/><rect x="462" y="685" width="5" height="1.0" fill="#6a3020" opacity="0.6"/><rect x="101" y="558" width="9" height="1.0" fill="#8a4a30" opacity="0.6"/><rect x="652" y="716" width="5" height="1.2" fill="#3a1a12" opacity="0.6"/><rect x="5" y="554" width="11" height="1.9" fill="#a05a3a" opacity="0.6"/><rect x="329" y="643" width="8" height="1.1" fill="#b06a48" opacity="0.6"/><rect x="232" y="705" width="19" height="1.4" fill="#c07a58" opacity="0.6"/><rect x="729" y="616" width="21" height="1.3" fill="#3a1a12" opacity="0.6"/><rect x="510" y="635" width="11" height="1.5" fill="#9a6048" opacity="0.6"/><rect x="7" y="699" width="6" height="1.2" fill="#3a1a12" opacity="0.6"/><rect x="134" y="722" width="9" height="1.7" fill="#8a4a30" opacity="0.6"/><rect x="248" y="699" width="10" height="1.8" fill="#8a4a30" opacity="0.6"/><rect x="315" y="709" width="14" height="1.5" fill="#9a6048" opacity="0.6"/><rect x="208" y="558" width="5" height="1.8" fill="#6a3020" opacity="0.6"/><rect x="610" y="559" width="6" height="1.2" fill="#b06a48" opacity="0.6"/><rect x="417" y="609" width="18" height="1.3" fill="#6a3020" opacity="0.6"/><rect x="262" y="666" width="11" height="2.2" fill="#7a3e28" opacity="0.6"/><rect x="219" y="611" width="8" height="2.0" fill="#b06a48" opacity="0.6"/><rect x="715" y="728" width="15" height="1.5" fill="#6a3020" opacity="0.6"/><rect x="402" y="595" width="13" height="1.2" fill="#8a4a30" opacity="0.6"/><rect x="512" y="525" width="19" height="1.9" fill="#3a1a12" opacity="0.6"/><rect x="12" y="665" width="7" height="1.0" fill="#8a4a30" opacity="0.6"/><rect x="525" y="678" width="8" height="1.2" fill="#8a4a30" opacity="0.6"/><rect x="42" y="709" width="18" height="1.9" fill="#7a3e28" opacity="0.6"/><rect x="41" y="574" width="8" height="1.2" fill="#3a1a12" opacity="0.6"/><rect x="207" y="595" width="20" height="1.9" fill="#b06a48" opacity="0.6"/><rect x="711" y="544" width="11" height="2.0" fill="#6a3020" opacity="0.6"/><rect x="681" y="511" width="17" height="1.6" fill="#3a1a12" opacity="0.6"/><rect x="261" y="645" width="7" height="1.1" fill="#7a3e28" opacity="0.6"/><rect x="539" y="514" width="5" height="1.2" fill="#7a3e28" opacity="0.6"/><rect x="573" y="540" width="17" height="1.7" fill="#b06a48" opacity="0.6"/><rect x="425" y="556" width="13" height="1.6" fill="#3a1a12" opacity="0.6"/><rect x="506" y="633" width="21" height="1.1" fill="#c07a58" opacity="0.6"/><rect x="684" y="700" width="15" height="1.8" fill="#7a3e28" opacity="0.6"/><rect x="514" y="513" width="10" height="1.9" fill="#6a3020" opacity="0.6"/><rect x="567" y="524" width="17" height="1.5" fill="#7a3e28" opacity="0.6"/><rect x="206" y="525" width="21" height="1.5" fill="#6a3020" opacity="0.6"/><rect x="523" y="670" width="19" height="1.8" fill="#9a6048" opacity="0.6"/><rect x="382" y="656" width="8" height="1.8" fill="#b06a48" opacity="0.6"/><rect x="367" y="547" width="21" height="2.0" fill="#c07a58" opacity="0.6"/><rect x="124" y="542" width="18" height="1.3" fill="#c07a58" opacity="0.6"/><rect x="182" y="518" width="10" height="1.5" fill="#7a3e28" opacity="0.6"/><rect x="480" y="536" width="16" height="1.6" fill="#9a6048" opacity="0.6"/><rect x="173" y="559" width="13" height="1.5" fill="#6a3020" opacity="0.6"/><rect x="527" y="535" width="17" height="1.7" fill="#7a3e28" opacity="0.6"/><rect x="247" y="687" width="14" height="1.9" fill="#b06a48" opacity="0.6"/><rect x="511" y="540" width="22" height="2.0" fill="#3a1a12" opacity="0.6"/><rect x="630" y="531" width="9" height="1.4" fill="#7a3e28" opacity="0.6"/><rect x="23" y="705" width="9" height="1.1" fill="#c07a58" opacity="0.6"/><rect x="335" y="530" width="10" height="1.6" fill="#6a3020" opacity="0.6"/><rect x="213" y="629" width="5" height="1.6" fill="#9a6048" opacity="0.6"/><rect x="55" y="665" width="22" height="1.7" fill="#8a4a30" opacity="0.6"/><rect x="487" y="718" width="13" height="1.9" fill="#6a3020" opacity="0.6"/><rect x="-4" y="710" width="16" height="1.8" fill="#c07a58" opacity="0.6"/><rect x="493" y="522" width="17" height="1.0" fill="#3a1a12" opacity="0.6"/><rect x="636" y="571" width="7" height="1.8" fill="#b06a48" opacity="0.6"/><rect x="69" y="665" width="10" height="1.7" fill="#3a1a12" opacity="0.6"/><rect x="132" y="689" width="10" height="1.4" fill="#6a3020" opacity="0.6"/><rect x="635" y="562" width="5" height="1.1" fill="#3a1a12" opacity="0.6"/><rect x="687" y="716" width="13" height="1.6" fill="#b06a48" opacity="0.6"/><rect x="757" y="639" width="15" height="1.2" fill="#7a3e28" opacity="0.6"/><rect x="116" y="604" width="21" height="1.1" fill="#a05a3a" opacity="0.6"/><rect x="645" y="612" width="8" height="1.4" fill="#a05a3a" opacity="0.6"/><rect x="637" y="696" width="18" height="1.5" fill="#c07a58" opacity="0.6"/><rect x="45" y="517" width="17" height="2.1" fill="#8a4a30" opacity="0.6"/><rect x="328" y="654" width="19" height="2.1" fill="#b06a48" opacity="0.6"/><rect x="282" y="506" width="18" height="1.8" fill="#7a3e28" opacity="0.6"/><rect x="351" y="626" width="13" height="1.5" fill="#b06a48" opacity="0.6"/><rect x="740" y="719" width="15" height="2.0" fill="#a05a3a" opacity="0.6"/><rect x="547" y="579" width="16" height="1.7" fill="#3a1a12" opacity="0.6"/><rect x="724" y="612" width="16" height="1.4" fill="#6a3020" opacity="0.6"/><rect x="398" y="646" width="19" height="1.3" fill="#9a6048" opacity="0.6"/><rect x="522" y="538" width="14" height="1.7" fill="#3a1a12" opacity="0.6"/><rect x="267" y="559" width="12" height="1.3" fill="#7a3e28" opacity="0.6"/><rect x="129" y="703" width="14" height="1.1" fill="#c07a58" opacity="0.6"/><rect x="490" y="547" width="16" height="1.9" fill="#7a3e28" opacity="0.6"/><rect x="417" y="556" width="14" height="1.1" fill="#8a4a30" opacity="0.6"/><rect x="646" y="657" width="18" height="1.2" fill="#8a4a30" opacity="0.6"/><rect x="472" y="719" width="13" height="1.6" fill="#3a1a12" opacity="0.6"/><rect x="409" y="721" width="7" height="1.6" fill="#8a4a30" opacity="0.6"/><rect x="95" y="678" width="5" height="1.3" fill="#6a3020" opacity="0.6"/><rect x="22" y="662" width="21" height="1.6" fill="#8a4a30" opacity="0.6"/><rect x="535" y="600" width="20" height="1.7" fill="#7a3e28" opacity="0.6"/><rect x="423" y="710" width="20" height="1.2" fill="#6a3020" opacity="0.6"/><rect x="609" y="669" width="4" height="1.3" fill="#7a3e28" opacity="0.6"/><rect x="277" y="669" width="21" height="1.9" fill="#a05a3a" opacity="0.6"/><rect x="619" y="584" width="10" height="1.4" fill="#8a4a30" opacity="0.6"/><rect x="16" y="708" width="8" height="1.4" fill="#9a6048" opacity="0.6"/><rect x="6" y="725" width="12" height="1.9" fill="#9a6048" opacity="0.6"/><rect x="75" y="684" width="7" height="1.7" fill="#c07a58" opacity="0.6"/><rect x="663" y="654" width="19" height="1.7" fill="#c07a58" opacity="0.6"/><rect x="405" y="659" width="19" height="2.1" fill="#a05a3a" opacity="0.6"/><rect x="9" y="727" width="13" height="1.6" fill="#a05a3a" opacity="0.6"/><rect x="606" y="513" width="7" height="2.0" fill="#3a1a12" opacity="0.6"/><rect x="639" y="721" width="16" height="1.5" fill="#7a3e28" opacity="0.6"/><rect x="662" y="641" width="5" height="1.4" fill="#7a3e28" opacity="0.6"/><rect x="230" y="534" width="15" height="1.3" fill="#6a3020" opacity="0.6"/><rect x="550" y="579" width="12" height="2.1" fill="#6a3020" opacity="0.6"/><rect x="-5" y="634" width="10" height="1.0" fill="#9a6048" opacity="0.6"/><rect x="665" y="641" width="15" height="1.9" fill="#b06a48" opacity="0.6"/><rect x="200" y="566" width="13" height="1.3" fill="#b06a48" opacity="0.6"/><rect x="754" y="513" width="14" height="1.9" fill="#7a3e28" opacity="0.6"/><rect x="586" y="646" width="15" height="1.4" fill="#c07a58" opacity="0.6"/><rect x="601" y="558" width="18" height="1.2" fill="#8a4a30" opacity="0.6"/><rect x="224" y="675" width="17" height="1.6" fill="#7a3e28" opacity="0.6"/><rect x="260" y="628" width="11" height="1.1" fill="#6a3020" opacity="0.6"/><rect x="507" y="702" width="18" height="1.6" fill="#7a3e28" opacity="0.6"/><rect x="613" y="727" width="7" height="1.2" fill="#9a6048" opacity="0.6"/><rect x="302" y="593" width="18" height="2.1" fill="#8a4a30" opacity="0.6"/><rect x="101" y="666" width="9" height="1.7" fill="#6a3020" opacity="0.6"/><rect x="47" y="547" width="21" height="1.7" fill="#c07a58" opacity="0.6"/><rect x="437" y="725" width="10" height="1.9" fill="#3a1a12" opacity="0.6"/><rect x="545" y="711" width="19" height="1.4" fill="#b06a48" opacity="0.6"/><rect x="202" y="562" width="4" height="1.2" fill="#c07a58" opacity="0.6"/><rect x="172" y="509" width="5" height="1.5" fill="#c07a58" opacity="0.6"/><rect x="655" y="650" width="8" height="1.9" fill="#b06a48" opacity="0.6"/><rect x="453" y="523" width="19" height="2.1" fill="#6a3020" opacity="0.6"/><rect x="544" y="506" width="9" height="1.8" fill="#a05a3a" opacity="0.6"/><rect x="483" y="711" width="8" height="1.4" fill="#a05a3a" opacity="0.6"/><rect x="490" y="595" width="16" height="1.4" fill="#a05a3a" opacity="0.6"/><rect x="655" y="683" width="6" height="1.7" fill="#9a6048" opacity="0.6"/><rect x="751" y="594" width="21" height="2.0" fill="#a05a3a" opacity="0.6"/><rect x="702" y="631" width="22" height="1.1" fill="#6a3020" opacity="0.6"/><rect x="111" y="509" width="8" height="1.6" fill="#8a4a30" opacity="0.6"/><rect x="266" y="586" width="10" height="1.8" fill="#b06a48" opacity="0.6"/><rect x="496" y="639" width="10" height="1.9" fill="#c07a58" opacity="0.6"/><rect x="616" y="611" width="5" height="1.8" fill="#9a6048" opacity="0.6"/><rect x="421" y="586" width="14" height="1.3" fill="#c07a58" opacity="0.6"/><rect x="-3" y="611" width="16" height="1.9" fill="#6a3020" opacity="0.6"/><rect x="106" y="645" width="11" height="2.2" fill="#a05a3a" opacity="0.6"/><rect x="471" y="532" width="14" height="1.2" fill="#b06a48" opacity="0.6"/><rect x="190" y="640" width="17" height="2.1" fill="#b06a48" opacity="0.6"/><rect x="397" y="583" width="17" height="1.5" fill="#9a6048" opacity="0.6"/><rect x="154" y="708" width="20" height="1.5" fill="#7a3e28" opacity="0.6"/><rect x="239" y="706" width="6" height="1.9" fill="#8a4a30" opacity="0.6"/><rect x="611" y="709" width="16" height="1.4" fill="#7a3e28" opacity="0.6"/><rect x="424" y="596" width="21" height="2.1" fill="#7a3e28" opacity="0.6"/><rect x="14" y="510" width="17" height="1.3" fill="#6a3020" opacity="0.6"/><rect x="146" y="674" width="16" height="1.4" fill="#9a6048" opacity="0.6"/><rect x="157" y="632" width="7" height="2.0" fill="#c07a58" opacity="0.6"/><rect x="725" y="535" width="9" height="1.1" fill="#a05a3a" opacity="0.6"/><rect x="364" y="704" width="7" height="1.8" fill="#9a6048" opacity="0.6"/><rect x="153" y="517" width="18" height="2.0" fill="#6a3020" opacity="0.6"/><rect x="26" y="678" width="12" height="1.5" fill="#b06a48" opacity="0.6"/><rect x="756" y="571" width="4" height="1.1" fill="#a05a3a" opacity="0.6"/><rect x="93" y="573" width="13" height="1.4" fill="#b06a48" opacity="0.6"/><rect x="348" y="594" width="11" height="1.8" fill="#3a1a12" opacity="0.6"/><rect x="669" y="723" width="5" height="1.3" fill="#a05a3a" opacity="0.6"/><rect x="19" y="618" width="8" height="1.5" fill="#8a4a30" opacity="0.6"/><rect x="551" y="516" width="20" height="1.1" fill="#8a4a30" opacity="0.6"/><rect x="83" y="614" width="6" height="1.5" fill="#b06a48" opacity="0.6"/><rect x="162" y="626" width="15" height="1.7" fill="#8a4a30" opacity="0.6"/><rect x="398" y="692" width="21" height="1.1" fill="#7a3e28" opacity="0.6"/><rect x="647" y="722" width="8" height="1.1" fill="#b06a48" opacity="0.6"/><rect x="2" y="565" width="21" height="1.2" fill="#a05a3a" opacity="0.6"/><rect x="304" y="629" width="11" height="1.0" fill="#a05a3a" opacity="0.6"/><rect x="493" y="626" width="14" height="1.8" fill="#c07a58" opacity="0.6"/><rect x="297" y="576" width="12" height="2.2" fill="#3a1a12" opacity="0.6"/><rect x="576" y="702" width="18" height="2.1" fill="#a05a3a" opacity="0.6"/><rect x="174" y="617" width="22" height="1.8" fill="#3a1a12" opacity="0.6"/><rect x="753" y="689" width="16" height="1.1" fill="#a05a3a" opacity="0.6"/><rect x="690" y="516" width="16" height="1.4" fill="#9a6048" opacity="0.6"/><rect x="413" y="575" width="21" height="1.0" fill="#9a6048" opacity="0.6"/><rect x="383" y="637" width="22" height="1.3" fill="#3a1a12" opacity="0.6"/><rect x="264" y="519" width="22" height="1.3" fill="#6a3020" opacity="0.6"/><rect x="45" y="683" width="16" height="2.1" fill="#c07a58" opacity="0.6"/><rect x="192" y="693" width="19" height="1.4" fill="#9a6048" opacity="0.6"/><rect x="429" y="728" width="5" height="1.9" fill="#6a3020" opacity="0.6"/><rect x="393" y="623" width="19" height="1.3" fill="#b06a48" opacity="0.6"/><rect x="107" y="653" width="7" height="2.1" fill="#a05a3a" opacity="0.6"/><rect x="238" y="586" width="20" height="1.5" fill="#3a1a12" opacity="0.6"/><rect x="108" y="561" width="6" height="1.4" fill="#c07a58" opacity="0.6"/><rect x="339" y="525" width="11" height="2.2" fill="#8a4a30" opacity="0.6"/><rect x="336" y="612" width="18" height="1.9" fill="#b06a48" opacity="0.6"/><rect x="-5" y="534" width="13" height="1.8" fill="#6a3020" opacity="0.6"/><rect x="393" y="684" width="9" height="1.7" fill="#a05a3a" opacity="0.6"/><rect x="429" y="518" width="7" height="1.9" fill="#c07a58" opacity="0.6"/><rect x="696" y="562" width="9" height="1.5" fill="#9a6048" opacity="0.6"/><rect x="651" y="550" width="12" height="2.0" fill="#6a3020" opacity="0.6"/><rect x="699" y="665" width="11" height="1.1" fill="#c07a58" opacity="0.6"/><rect x="737" y="601" width="15" height="1.3" fill="#7a3e28" opacity="0.6"/><rect x="287" y="634" width="21" height="1.2" fill="#6a3020" opacity="0.6"/><rect x="39" y="550" width="19" height="1.1" fill="#9a6048" opacity="0.6"/><rect x="282" y="622" width="13" height="2.1" fill="#a05a3a" opacity="0.6"/><rect x="73" y="631" width="21" height="1.8" fill="#3a1a12" opacity="0.6"/><rect x="309" y="611" width="20" height="1.5" fill="#9a6048" opacity="0.6"/><rect x="94" y="673" width="4" height="1.3" fill="#7a3e28" opacity="0.6"/><rect x="299" y="514" width="16" height="1.7" fill="#3a1a12" opacity="0.6"/><rect x="583" y="531" width="8" height="1.1" fill="#a05a3a" opacity="0.6"/><rect x="68" y="525" width="18" height="1.7" fill="#a05a3a" opacity="0.6"/><rect x="624" y="550" width="10" height="2.0" fill="#3a1a12" opacity="0.6"/><rect x="640" y="536" width="11" height="1.1" fill="#b06a48" opacity="0.6"/><rect x="237" y="547" width="22" height="1.2" fill="#c07a58" opacity="0.6"/><rect x="390" y="524" width="11" height="1.8" fill="#c07a58" opacity="0.6"/><rect x="418" y="619" width="12" height="1.1" fill="#c07a58" opacity="0.6"/><rect x="181" y="590" width="12" height="1.6" fill="#c07a58" opacity="0.6"/><rect x="146" y="517" width="14" height="1.4" fill="#9a6048" opacity="0.6"/><rect x="495" y="663" width="7" height="2.1" fill="#6a3020" opacity="0.6"/><rect x="144" y="710" width="14" height="1.1" fill="#6a3020" opacity="0.6"/><rect x="-3" y="520" width="21" height="2.0" fill="#a05a3a" opacity="0.6"/><rect x="201" y="683" width="9" height="1.9" fill="#9a6048" opacity="0.6"/><rect x="303" y="667" width="8" height="1.2" fill="#b06a48" opacity="0.6"/><rect x="324" y="648" width="5" height="2.0" fill="#8a4a30" opacity="0.6"/><rect x="617" y="616" width="4" height="1.9" fill="#b06a48" opacity="0.6"/><rect x="374" y="655" width="16" height="1.4" fill="#7a3e28" opacity="0.6"/><rect x="402" y="540" width="18" height="1.9" fill="#8a4a30" opacity="0.6"/><rect x="349" y="550" width="6" height="1.1" fill="#7a3e28" opacity="0.6"/><rect x="497" y="562" width="20" height="1.8" fill="#b06a48" opacity="0.6"/><rect x="658" y="711" width="6" height="1.2" fill="#9a6048" opacity="0.6"/><rect x="216" y="557" width="14" height="1.4" fill="#b06a48" opacity="0.6"/><rect x="228" y="563" width="14" height="1.3" fill="#7a3e28" opacity="0.6"/><rect x="291" y="512" width="11" height="1.8" fill="#7a3e28" opacity="0.6"/><rect x="494" y="660" width="8" height="1.2" fill="#b06a48" opacity="0.6"/><rect x="321" y="656" width="6" height="2.0" fill="#8a4a30" opacity="0.6"/><rect x="496" y="552" width="16" height="1.6" fill="#8a4a30" opacity="0.6"/><rect x="214" y="583" width="18" height="1.6" fill="#8a4a30" opacity="0.6"/><rect x="144" y="567" width="9" height="1.7" fill="#8a4a30" opacity="0.6"/><rect x="145" y="610" width="18" height="1.9" fill="#7a3e28" opacity="0.6"/><rect x="436" y="572" width="14" height="1.1" fill="#a05a3a" opacity="0.6"/><rect x="255" y="716" width="16" height="1.1" fill="#6a3020" opacity="0.6"/><rect x="260" y="612" width="10" height="1.4" fill="#8a4a30" opacity="0.6"/><rect x="597" y="572" width="5" height="1.7" fill="#8a4a30" opacity="0.6"/><rect x="565" y="530" width="7" height="1.5" fill="#a05a3a" opacity="0.6"/><rect x="16" y="619" width="6" height="1.8" fill="#b06a48" opacity="0.6"/><rect x="310" y="692" width="5" height="1.9" fill="#b06a48" opacity="0.6"/><rect x="267" y="653" width="6" height="1.0" fill="#9a6048" opacity="0.6"/><rect x="224" y="563" width="6" height="1.3" fill="#b06a48" opacity="0.6"/><rect x="372" y="625" width="6" height="1.6" fill="#b06a48" opacity="0.6"/><rect x="428" y="514" width="9" height="2.1" fill="#c07a58" opacity="0.6"/><rect x="301" y="550" width="6" height="1.3" fill="#7a3e28" opacity="0.6"/><rect x="676" y="508" width="21" height="1.6" fill="#7a3e28" opacity="0.6"/><rect x="520" y="556" width="18" height="1.2" fill="#c07a58" opacity="0.6"/><rect x="759" y="600" width="15" height="1.1" fill="#8a4a30" opacity="0.6"/><rect x="55" y="634" width="8" height="1.7" fill="#a05a3a" opacity="0.6"/><rect x="622" y="521" width="10" height="1.1" fill="#7a3e28" opacity="0.6"/><rect x="466" y="659" width="19" height="1.4" fill="#9a6048" opacity="0.6"/><rect x="446" y="546" width="10" height="2.1" fill="#3a1a12" opacity="0.6"/><rect x="15" y="681" width="7" height="1.6" fill="#b06a48" opacity="0.6"/><rect x="106" y="582" width="7" height="1.2" fill="#7a3e28" opacity="0.6"/><rect x="518" y="663" width="5" height="1.0" fill="#9a6048" opacity="0.6"/><rect x="19" y="622" width="10" height="1.1" fill="#8a4a30" opacity="0.6"/><rect x="143" y="644" width="19" height="1.9" fill="#8a4a30" opacity="0.6"/><rect x="491" y="722" width="14" height="2.0" fill="#9a6048" opacity="0.6"/><rect x="508" y="671" width="6" height="2.0" fill="#c07a58" opacity="0.6"/><rect x="687" y="671" width="19" height="2.0" fill="#b06a48" opacity="0.6"/><rect x="325" y="689" width="18" height="2.0" fill="#c07a58" opacity="0.6"/><rect x="566" y="637" width="16" height="1.8" fill="#8a4a30" opacity="0.6"/><rect x="736" y="681" width="9" height="2.0" fill="#7a3e28" opacity="0.6"/><rect x="175" y="636" width="14" height="2.1" fill="#a05a3a" opacity="0.6"/><rect x="292" y="680" width="18" height="1.8" fill="#6a3020" opacity="0.6"/><rect x="626" y="596" width="6" height="1.8" fill="#6a3020" opacity="0.6"/><rect x="501" y="707" width="12" height="1.4" fill="#c07a58" opacity="0.6"/><rect x="367" y="509" width="6" height="2.0" fill="#3a1a12" opacity="0.6"/><rect x="306" y="572" width="7" height="1.7" fill="#8a4a30" opacity="0.6"/><rect x="262" y="693" width="15" height="1.4" fill="#8a4a30" opacity="0.6"/><rect x="754" y="547" width="20" height="1.5" fill="#7a3e28" opacity="0.6"/><rect x="83" y="657" width="5" height="2.0" fill="#b06a48" opacity="0.6"/><rect x="290" y="579" width="7" height="1.2" fill="#6a3020" opacity="0.6"/><rect x="675" y="641" width="20" height="1.5" fill="#9a6048" opacity="0.6"/><rect x="235" y="700" width="18" height="1.7" fill="#b06a48" opacity="0.6"/><rect x="291" y="507" width="19" height="1.1" fill="#7a3e28" opacity="0.6"/><rect x="340" y="685" width="9" height="1.4" fill="#8a4a30" opacity="0.6"/><rect x="748" y="669" width="18" height="1.8" fill="#b06a48" opacity="0.6"/><rect x="705" y="704" width="16" height="1.1" fill="#6a3020" opacity="0.6"/><rect x="332" y="719" width="11" height="1.8" fill="#3a1a12" opacity="0.6"/><rect x="712" y="685" width="5" height="1.8" fill="#9a6048" opacity="0.6"/><rect x="270" y="723" width="5" height="2.0" fill="#8a4a30" opacity="0.6"/><rect x="419" y="605" width="18" height="2.1" fill="#9a6048" opacity="0.6"/><rect x="17" y="578" width="6" height="2.1" fill="#c07a58" opacity="0.6"/><rect x="101" y="636" width="14" height="1.1" fill="#3a1a12" opacity="0.6"/><rect x="124" y="636" width="22" height="1.8" fill="#7a3e28" opacity="0.6"/><rect x="214" y="626" width="12" height="2.2" fill="#8a4a30" opacity="0.6"/><rect x="610" y="656" width="11" height="2.2" fill="#6a3020" opacity="0.6"/><rect x="522" y="567" width="7" height="1.7" fill="#a05a3a" opacity="0.6"/><rect x="601" y="582" width="7" height="1.6" fill="#a05a3a" opacity="0.6"/><rect x="115" y="670" width="7" height="1.4" fill="#a05a3a" opacity="0.6"/><rect x="442" y="722" width="18" height="1.4" fill="#b06a48" opacity="0.6"/><rect x="200" y="704" width="13" height="1.7" fill="#9a6048" opacity="0.6"/><rect x="300" y="657" width="11" height="1.4" fill="#9a6048" opacity="0.6"/><rect x="195" y="550" width="20" height="1.5" fill="#3a1a12" opacity="0.6"/><rect x="481" y="679" width="10" height="1.2" fill="#9a6048" opacity="0.6"/><rect x="499" y="694" width="11" height="1.1" fill="#3a1a12" opacity="0.6"/><rect x="269" y="710" width="14" height="1.3" fill="#8a4a30" opacity="0.6"/><rect x="190" y="677" width="5" height="2.0" fill="#c07a58" opacity="0.6"/><rect x="262" y="715" width="9" height="1.3" fill="#8a4a30" opacity="0.6"/><rect x="664" y="526" width="15" height="2.0" fill="#8a4a30" opacity="0.6"/><rect x="706" y="542" width="7" height="1.9" fill="#8a4a30" opacity="0.6"/><rect x="586" y="593" width="21" height="1.9" fill="#6a3020" opacity="0.6"/><rect x="298" y="616" width="10" height="2.0" fill="#b06a48" opacity="0.6"/><rect x="399" y="621" width="16" height="2.1" fill="#b06a48" opacity="0.6"/><rect x="154" y="657" width="21" height="1.1" fill="#a05a3a" opacity="0.6"/><rect x="646" y="654" width="14" height="1.5" fill="#c07a58" opacity="0.6"/><rect x="595" y="657" width="19" height="1.2" fill="#7a3e28" opacity="0.6"/><rect x="507" y="673" width="13" height="2.1" fill="#a05a3a" opacity="0.6"/><rect x="562" y="688" width="16" height="2.1" fill="#b06a48" opacity="0.6"/><rect x="489" y="700" width="11" height="2.1" fill="#8a4a30" opacity="0.6"/><rect x="584" y="640" width="13" height="1.7" fill="#7a3e28" opacity="0.6"/><rect x="228" y="585" width="14" height="2.1" fill="#8a4a30" opacity="0.6"/><rect x="267" y="661" width="5" height="2.0" fill="#6a3020" opacity="0.6"/><rect x="158" y="607" width="18" height="1.5" fill="#a05a3a" opacity="0.6"/><rect x="742" y="637" width="15" height="1.0" fill="#9a6048" opacity="0.6"/><rect x="75" y="555" width="15" height="1.4" fill="#6a3020" opacity="0.6"/><rect x="399" y="556" width="14" height="2.0" fill="#c07a58" opacity="0.6"/><rect x="636" y="685" width="14" height="1.0" fill="#b06a48" opacity="0.6"/><rect x="12" y="618" width="12" height="1.1" fill="#c07a58" opacity="0.6"/><rect x="548" y="635" width="11" height="1.6" fill="#3a1a12" opacity="0.6"/><rect x="164" y="698" width="22" height="2.0" fill="#6a3020" opacity="0.6"/><rect x="497" y="561" width="16" height="1.7" fill="#3a1a12" opacity="0.6"/><rect x="340" y="657" width="17" height="1.5" fill="#6a3020" opacity="0.6"/><rect x="464" y="530" width="7" height="1.9" fill="#8a4a30" opacity="0.6"/><rect x="557" y="620" width="12" height="1.2" fill="#7a3e28" opacity="0.6"/><rect x="585" y="550" width="18" height="2.0" fill="#c07a58" opacity="0.6"/><rect x="566" y="716" width="21" height="1.9" fill="#a05a3a" opacity="0.6"/><rect x="38" y="551" width="4" height="2.0" fill="#c07a58" opacity="0.6"/><rect x="419" y="645" width="14" height="1.4" fill="#6a3020" opacity="0.6"/><rect x="225" y="515" width="7" height="1.4" fill="#a05a3a" opacity="0.6"/><rect x="609" y="606" width="6" height="1.1" fill="#b06a48" opacity="0.6"/><rect x="270" y="702" width="13" height="1.1" fill="#6a3020" opacity="0.6"/><rect x="602" y="611" width="19" height="1.2" fill="#8a4a30" opacity="0.6"/><rect x="397" y="561" width="11" height="1.4" fill="#a05a3a" opacity="0.6"/><rect x="712" y="548" width="9" height="2.0" fill="#3a1a12" opacity="0.6"/><rect x="586" y="667" width="7" height="2.1" fill="#3a1a12" opacity="0.6"/><rect x="93" y="508" width="8" height="1.7" fill="#3a1a12" opacity="0.6"/><rect x="11" y="686" width="22" height="1.1" fill="#a05a3a" opacity="0.6"/><rect x="147" y="633" width="20" height="2.0" fill="#6a3020" opacity="0.6"/><rect x="471" y="702" width="13" height="1.8" fill="#7a3e28" opacity="0.6"/><rect x="-4" y="551" width="10" height="2.1" fill="#8a4a30" opacity="0.6"/><rect x="445" y="533" width="8" height="1.5" fill="#9a6048" opacity="0.6"/><rect x="577" y="632" width="17" height="2.0" fill="#b06a48" opacity="0.6"/><rect x="298" y="655" width="17" height="1.3" fill="#9a6048" opacity="0.6"/><rect x="523" y="610" width="7" height="2.1" fill="#3a1a12" opacity="0.6"/><rect x="38" y="558" width="22" height="1.3" fill="#3a1a12" opacity="0.6"/><rect x="426" y="671" width="8" height="1.9" fill="#a05a3a" opacity="0.6"/><rect x="177" y="707" width="8" height="1.0" fill="#9a6048" opacity="0.6"/><rect x="27" y="559" width="21" height="1.3" fill="#a05a3a" opacity="0.6"/><rect x="706" y="647" width="21" height="1.3" fill="#b06a48" opacity="0.6"/><rect x="350" y="612" width="21" height="1.9" fill="#8a4a30" opacity="0.6"/><rect x="134" y="685" width="7" height="1.6" fill="#8a4a30" opacity="0.6"/><rect x="383" y="718" width="11" height="2.1" fill="#8a4a30" opacity="0.6"/><rect x="646" y="629" width="19" height="1.6" fill="#8a4a30" opacity="0.6"/><rect x="534" y="653" width="15" height="1.5" fill="#a05a3a" opacity="0.6"/><rect x="421" y="552" width="7" height="1.6" fill="#9a6048" opacity="0.6"/><rect x="151" y="663" width="17" height="1.8" fill="#8a4a30" opacity="0.6"/><rect x="462" y="524" width="13" height="1.8" fill="#8a4a30" opacity="0.6"/><rect x="552" y="694" width="19" height="1.1" fill="#6a3020" opacity="0.6"/><rect x="201" y="574" width="9" height="1.6" fill="#6a3020" opacity="0.6"/><rect x="582" y="507" width="5" height="1.1" fill="#7a3e28" opacity="0.6"/><rect x="390" y="607" width="11" height="1.7" fill="#7a3e28" opacity="0.6"/><rect x="696" y="668" width="18" height="2.1" fill="#a05a3a" opacity="0.6"/><rect x="542" y="512" width="16" height="2.0" fill="#3a1a12" opacity="0.6"/><rect x="607" y="517" width="15" height="1.4" fill="#c07a58" opacity="0.6"/><rect x="534" y="561" width="9" height="1.4" fill="#6a3020" opacity="0.6"/><rect x="284" y="541" width="7" height="2.1" fill="#9a6048" opacity="0.6"/><rect x="577" y="692" width="22" height="1.9" fill="#c07a58" opacity="0.6"/><rect x="609" y="508" width="14" height="1.4" fill="#6a3020" opacity="0.6"/><rect x="699" y="578" width="18" height="1.9" fill="#6a3020" opacity="0.6"/><rect x="602" y="624" width="6" height="2.0" fill="#6a3020" opacity="0.6"/><rect x="317" y="580" width="5" height="1.1" fill="#9a6048" opacity="0.6"/><rect x="114" y="623" width="16" height="1.6" fill="#3a1a12" opacity="0.6"/><rect x="707" y="621" width="18" height="1.8" fill="#7a3e28" opacity="0.6"/><rect x="158" y="673" width="20" height="1.9" fill="#3a1a12" opacity="0.6"/><rect x="541" y="726" width="7" height="1.5" fill="#b06a48" opacity="0.6"/><rect x="522" y="671" width="18" height="1.3" fill="#c07a58" opacity="0.6"/><rect x="730" y="525" width="20" height="1.8" fill="#b06a48" opacity="0.6"/><rect x="495" y="638" width="17" height="1.4" fill="#8a4a30" opacity="0.6"/><rect x="552" y="624" width="5" height="1.1" fill="#8a4a30" opacity="0.6"/><rect x="546" y="650" width="13" height="2.1" fill="#9a6048" opacity="0.6"/><rect x="127" y="527" width="9" height="1.5" fill="#b06a48" opacity="0.6"/><rect x="333" y="667" width="6" height="2.1" fill="#6a3020" opacity="0.6"/><rect x="238" y="551" width="11" height="1.9" fill="#8a4a30" opacity="0.6"/><rect x="648" y="684" width="16" height="1.3" fill="#a05a3a" opacity="0.6"/><rect x="641" y="521" width="6" height="1.9" fill="#c07a58" opacity="0.6"/><rect x="499" y="545" width="7" height="1.1" fill="#a05a3a" opacity="0.6"/><rect x="285" y="650" width="14" height="1.3" fill="#8a4a30" opacity="0.6"/><rect x="218" y="565" width="21" height="2.1" fill="#6a3020" opacity="0.6"/><rect x="270" y="666" width="6" height="1.9" fill="#c07a58" opacity="0.6"/><rect x="275" y="542" width="16" height="2.0" fill="#b06a48" opacity="0.6"/><rect x="210" y="590" width="18" height="1.3" fill="#7a3e28" opacity="0.6"/><rect x="673" y="675" width="19" height="1.3" fill="#9a6048" opacity="0.6"/><rect x="192" y="507" width="6" height="1.5" fill="#6a3020" opacity="0.6"/><rect x="171" y="512" width="12" height="1.1" fill="#9a6048" opacity="0.6"/><rect x="418" y="615" width="11" height="1.6" fill="#b06a48" opacity="0.6"/><rect x="691" y="600" width="5" height="1.2" fill="#c07a58" opacity="0.6"/><rect x="268" y="610" width="21" height="1.7" fill="#8a4a30" opacity="0.6"/><rect x="382" y="613" width="8" height="1.7" fill="#3a1a12" opacity="0.6"/><rect x="75" y="715" width="13" height="1.3" fill="#b06a48" opacity="0.6"/><rect x="383" y="576" width="6" height="1.6" fill="#9a6048" opacity="0.6"/><rect x="702" y="608" width="17" height="1.1" fill="#9a6048" opacity="0.6"/><rect x="476" y="527" width="9" height="1.9" fill="#8a4a30" opacity="0.6"/><rect x="82" y="724" width="13" height="1.2" fill="#a05a3a" opacity="0.6"/><rect x="473" y="686" width="20" height="1.8" fill="#a05a3a" opacity="0.6"/><rect x="404" y="557" width="13" height="1.7" fill="#6a3020" opacity="0.6"/><rect x="102" y="684" width="21" height="1.9" fill="#6a3020" opacity="0.6"/><rect x="495" y="650" width="17" height="1.0" fill="#9a6048" opacity="0.6"/><rect x="684" y="523" width="8" height="1.0" fill="#9a6048" opacity="0.6"/><rect x="741" y="692" width="9" height="1.4" fill="#7a3e28" opacity="0.6"/><rect x="713" y="595" width="16" height="1.0" fill="#9a6048" opacity="0.6"/><rect x="169" y="611" width="13" height="2.1" fill="#9a6048" opacity="0.6"/><rect x="508" y="552" width="20" height="1.2" fill="#9a6048" opacity="0.6"/><rect x="145" y="728" width="12" height="1.3" fill="#6a3020" opacity="0.6"/><rect x="14" y="545" width="11" height="1.9" fill="#6a3020" opacity="0.6"/><rect x="583" y="558" width="19" height="1.2" fill="#c07a58" opacity="0.6"/><rect x="457" y="611" width="14" height="1.5" fill="#c07a58" opacity="0.6"/><rect x="175" y="532" width="21" height="1.2" fill="#b06a48" opacity="0.6"/><rect x="759" y="535" width="10" height="1.9" fill="#b06a48" opacity="0.6"/><rect x="170" y="542" width="15" height="1.5" fill="#3a1a12" opacity="0.6"/><rect x="185" y="632" width="8" height="1.2" fill="#c07a58" opacity="0.6"/><rect x="735" y="664" width="6" height="1.5" fill="#8a4a30" opacity="0.6"/><rect x="735" y="707" width="5" height="1.9" fill="#b06a48" opacity="0.6"/><rect x="660" y="599" width="14" height="2.0" fill="#8a4a30" opacity="0.6"/><rect x="334" y="616" width="14" height="1.8" fill="#6a3020" opacity="0.6"/><rect x="682" y="720" width="7" height="1.1" fill="#c07a58" opacity="0.6"/><rect x="429" y="545" width="16" height="1.3" fill="#7a3e28" opacity="0.6"/><rect x="307" y="718" width="9" height="2.0" fill="#a05a3a" opacity="0.6"/><rect x="471" y="610" width="16" height="2.0" fill="#a05a3a" opacity="0.6"/><rect x="333" y="581" width="18" height="2.1" fill="#b06a48" opacity="0.6"/><rect x="348" y="577" width="21" height="2.2" fill="#8a4a30" opacity="0.6"/><rect x="728" y="551" width="11" height="2.2" fill="#7a3e28" opacity="0.6"/><rect x="276" y="663" width="11" height="1.6" fill="#6a3020" opacity="0.6"/><rect x="88" y="555" width="8" height="1.3" fill="#a05a3a" opacity="0.6"/><rect x="383" y="702" width="15" height="1.8" fill="#9a6048" opacity="0.6"/><rect x="438" y="715" width="14" height="1.4" fill="#3a1a12" opacity="0.6"/><rect x="232" y="686" width="16" height="1.8" fill="#b06a48" opacity="0.6"/><rect x="293" y="531" width="15" height="1.4" fill="#7a3e28" opacity="0.6"/><rect x="479" y="662" width="21" height="1.2" fill="#c07a58" opacity="0.6"/><rect x="490" y="541" width="5" height="1.5" fill="#a05a3a" opacity="0.6"/><rect x="143" y="508" width="14" height="1.9" fill="#c07a58" opacity="0.6"/><rect x="12" y="683" width="19" height="1.1" fill="#7a3e28" opacity="0.6"/><rect x="-7" y="556" width="9" height="1.9" fill="#7a3e28" opacity="0.6"/><rect x="5" y="530" width="21" height="2.2" fill="#b06a48" opacity="0.6"/><rect x="352" y="521" width="10" height="1.4" fill="#9a6048" opacity="0.6"/><rect x="664" y="579" width="21" height="1.3" fill="#c07a58" opacity="0.6"/><rect x="60" y="644" width="17" height="1.3" fill="#6a3020" opacity="0.6"/><rect x="253" y="615" width="7" height="2.1" fill="#a05a3a" opacity="0.6"/><rect x="568" y="692" width="12" height="1.4" fill="#a05a3a" opacity="0.6"/><rect x="167" y="683" width="18" height="1.1" fill="#b06a48" opacity="0.6"/><rect x="137" y="663" width="18" height="1.9" fill="#7a3e28" opacity="0.6"/><rect x="469" y="689" width="12" height="1.5" fill="#a05a3a" opacity="0.6"/><rect x="138" y="635" width="6" height="1.8" fill="#7a3e28" opacity="0.6"/><rect x="568" y="617" width="13" height="1.4" fill="#a05a3a" opacity="0.6"/><rect x="14" y="667" width="8" height="1.3" fill="#9a6048" opacity="0.6"/><rect x="463" y="706" width="8" height="1.4" fill="#c07a58" opacity="0.6"/><rect x="91" y="519" width="12" height="1.4" fill="#c07a58" opacity="0.6"/><rect x="295" y="622" width="10" height="1.9" fill="#6a3020" opacity="0.6"/><rect x="59" y="516" width="13" height="1.2" fill="#7a3e28" opacity="0.6"/><rect x="346" y="549" width="6" height="1.6" fill="#6a3020" opacity="0.6"/><rect x="518" y="611" width="10" height="1.1" fill="#8a4a30" opacity="0.6"/><rect x="470" y="603" width="5" height="2.0" fill="#7a3e28" opacity="0.6"/><rect x="336" y="695" width="21" height="1.5" fill="#6a3020" opacity="0.6"/><rect x="402" y="679" width="17" height="1.4" fill="#a05a3a" opacity="0.6"/><rect x="71" y="607" width="15" height="1.3" fill="#a05a3a" opacity="0.6"/><rect x="651" y="715" width="14" height="1.1" fill="#a05a3a" opacity="0.6"/><rect x="221" y="520" width="18" height="1.9" fill="#3a1a12" opacity="0.6"/><rect x="390" y="537" width="17" height="1.9" fill="#a05a3a" opacity="0.6"/><rect x="15" y="708" width="16" height="1.6" fill="#8a4a30" opacity="0.6"/><rect x="233" y="688" width="15" height="1.5" fill="#7a3e28" opacity="0.6"/><rect x="124" y="676" width="12" height="1.4" fill="#8a4a30" opacity="0.6"/><rect x="676" y="607" width="14" height="1.1" fill="#3a1a12" opacity="0.6"/><rect x="354" y="718" width="15" height="1.3" fill="#9a6048" opacity="0.6"/><rect x="293" y="550" width="18" height="1.9" fill="#9a6048" opacity="0.6"/><rect x="72" y="686" width="10" height="1.3" fill="#c07a58" opacity="0.6"/><rect x="385" y="687" width="17" height="2.2" fill="#6a3020" opacity="0.6"/><rect x="231" y="668" width="19" height="1.8" fill="#3a1a12" opacity="0.6"/><rect x="33" y="505" width="8" height="1.4" fill="#c07a58" opacity="0.6"/><rect x="457" y="706" width="21" height="1.4" fill="#6a3020" opacity="0.6"/><rect x="621" y="564" width="11" height="1.4" fill="#6a3020" opacity="0.6"/><rect x="294" y="568" width="21" height="1.0" fill="#3a1a12" opacity="0.6"/><rect x="572" y="677" width="14" height="2.1" fill="#a05a3a" opacity="0.6"/><rect x="753" y="667" width="18" height="2.0" fill="#c07a58" opacity="0.6"/><rect x="379" y="578" width="12" height="1.4" fill="#7a3e28" opacity="0.6"/><rect x="405" y="580" width="19" height="1.4" fill="#b06a48" opacity="0.6"/><rect x="643" y="701" width="7" height="2.1" fill="#a05a3a" opacity="0.6"/><rect x="601" y="693" width="22" height="2.1" fill="#9a6048" opacity="0.6"/><rect x="593" y="679" width="20" height="1.3" fill="#6a3020" opacity="0.6"/><rect x="268" y="519" width="6" height="2.1" fill="#a05a3a" opacity="0.6"/><rect x="165" y="521" width="5" height="1.9" fill="#7a3e28" opacity="0.6"/><rect x="652" y="648" width="10" height="1.6" fill="#3a1a12" opacity="0.6"/><rect x="229" y="646" width="20" height="1.6" fill="#6a3020" opacity="0.6"/><rect x="555" y="574" width="20" height="1.7" fill="#8a4a30" opacity="0.6"/><rect x="452" y="728" width="20" height="1.1" fill="#9a6048" opacity="0.6"/><rect x="311" y="701" width="16" height="1.2" fill="#6a3020" opacity="0.6"/><rect x="408" y="712" width="16" height="2.0" fill="#a05a3a" opacity="0.6"/><rect x="345" y="632" width="4" height="1.2" fill="#8a4a30" opacity="0.6"/><rect x="132" y="570" width="13" height="1.9" fill="#8a4a30" opacity="0.6"/><rect x="161" y="671" width="18" height="1.3" fill="#3a1a12" opacity="0.6"/><rect x="111" y="647" width="5" height="1.5" fill="#6a3020" opacity="0.6"/><rect x="222" y="578" width="17" height="1.2" fill="#a05a3a" opacity="0.6"/><rect x="505" y="537" width="21" height="2.2" fill="#b06a48" opacity="0.6"/><rect x="131" y="708" width="14" height="1.9" fill="#6a3020" opacity="0.6"/><rect x="31" y="517" width="13" height="2.1" fill="#7a3e28" opacity="0.6"/><rect x="383" y="713" width="14" height="1.2" fill="#9a6048" opacity="0.6"/><rect x="609" y="600" width="15" height="1.3" fill="#c07a58" opacity="0.6"/><rect x="170" y="553" width="15" height="1.1" fill="#a05a3a" opacity="0.6"/><rect x="608" y="706" width="7" height="1.9" fill="#c07a58" opacity="0.6"/><rect x="169" y="688" width="8" height="1.2" fill="#7a3e28" opacity="0.6"/><rect x="742" y="666" width="6" height="1.6" fill="#7a3e28" opacity="0.6"/><rect x="200" y="692" width="21" height="1.1" fill="#a05a3a" opacity="0.6"/><rect x="331" y="524" width="5" height="2.0" fill="#3a1a12" opacity="0.6"/><rect x="99" y="608" width="15" height="2.2" fill="#6a3020" opacity="0.6"/><rect x="304" y="666" width="22" height="1.3" fill="#3a1a12" opacity="0.6"/><rect x="265" y="602" width="10" height="1.8" fill="#9a6048" opacity="0.6"/><rect x="55" y="548" width="10" height="1.6" fill="#b06a48" opacity="0.6"/><rect x="312" y="692" width="18" height="1.7" fill="#9a6048" opacity="0.6"/><rect x="718" y="610" width="8" height="1.7" fill="#b06a48" opacity="0.6"/><rect x="375" y="557" width="10" height="1.5" fill="#8a4a30" opacity="0.6"/><rect x="301" y="584" width="12" height="1.4" fill="#3a1a12" opacity="0.6"/><rect x="487" y="609" width="19" height="1.7" fill="#a05a3a" opacity="0.6"/><rect x="644" y="667" width="10" height="1.8" fill="#3a1a12" opacity="0.6"/><rect x="723" y="643" width="7" height="1.8" fill="#a05a3a" opacity="0.6"/><rect x="721" y="537" width="11" height="2.0" fill="#6a3020" opacity="0.6"/><rect x="444" y="656" width="10" height="2.1" fill="#3a1a12" opacity="0.6"/><rect x="491" y="569" width="6" height="2.1" fill="#a05a3a" opacity="0.6"/><rect x="465" y="685" width="12" height="1.3" fill="#a05a3a" opacity="0.6"/><rect x="259" y="624" width="21" height="1.8" fill="#9a6048" opacity="0.6"/><rect x="80" y="562" width="15" height="1.7" fill="#c07a58" opacity="0.6"/><rect x="3" y="683" width="5" height="2.0" fill="#a05a3a" opacity="0.6"/><rect x="202" y="579" width="19" height="1.2" fill="#3a1a12" opacity="0.6"/><rect x="7" y="548" width="5" height="2.0" fill="#b06a48" opacity="0.6"/><rect x="230" y="554" width="12" height="1.1" fill="#8a4a30" opacity="0.6"/><rect x="719" y="628" width="21" height="1.1" fill="#b06a48" opacity="0.6"/><rect x="324" y="548" width="17" height="2.0" fill="#3a1a12" opacity="0.6"/><rect x="315" y="645" width="17" height="1.2" fill="#b06a48" opacity="0.6"/><rect x="742" y="513" width="5" height="1.1" fill="#a05a3a" opacity="0.6"/><rect x="242" y="660" width="7" height="1.6" fill="#8a4a30" opacity="0.6"/><rect x="129" y="641" width="16" height="2.2" fill="#6a3020" opacity="0.6"/><rect x="83" y="696" width="10" height="1.5" fill="#9a6048" opacity="0.6"/><rect x="169" y="722" width="22" height="1.8" fill="#b06a48" opacity="0.6"/><rect x="117" y="704" width="18" height="1.8" fill="#a05a3a" opacity="0.6"/><rect x="333" y="644" width="20" height="1.9" fill="#a05a3a" opacity="0.6"/><rect x="338" y="702" width="15" height="1.4" fill="#3a1a12" opacity="0.6"/><rect x="384" y="538" width="5" height="1.9" fill="#b06a48" opacity="0.6"/><rect x="373" y="659" width="7" height="1.8" fill="#a05a3a" opacity="0.6"/><rect x="640" y="586" width="17" height="1.2" fill="#3a1a12" opacity="0.6"/><rect x="551" y="596" width="21" height="2.1" fill="#b06a48" opacity="0.6"/><rect x="234" y="589" width="9" height="2.1" fill="#a05a3a" opacity="0.6"/><rect x="753" y="658" width="10" height="1.9" fill="#c07a58" opacity="0.6"/><rect x="607" y="580" width="14" height="1.7" fill="#c07a58" opacity="0.6"/><rect x="651" y="725" width="13" height="2.0" fill="#a05a3a" opacity="0.6"/><rect x="105" y="675" width="14" height="2.1" fill="#3a1a12" opacity="0.6"/><rect x="533" y="506" width="15" height="1.2" fill="#3a1a12" opacity="0.6"/><rect x="203" y="530" width="20" height="1.5" fill="#c07a58" opacity="0.6"/><rect x="53" y="605" width="11" height="1.0" fill="#c07a58" opacity="0.6"/><rect x="155" y="651" width="9" height="1.4" fill="#3a1a12" opacity="0.6"/><rect x="582" y="659" width="16" height="1.3" fill="#6a3020" opacity="0.6"/><rect x="299" y="717" width="13" height="1.1" fill="#b06a48" opacity="0.6"/><rect x="615" y="571" width="15" height="2.0" fill="#b06a48" opacity="0.6"/><rect x="261" y="695" width="19" height="1.3" fill="#a05a3a" opacity="0.6"/><rect x="333" y="511" width="5" height="1.9" fill="#a05a3a" opacity="0.6"/><rect x="156" y="639" width="20" height="1.1" fill="#c07a58" opacity="0.6"/><rect x="254" y="713" width="7" height="1.2" fill="#8a4a30" opacity="0.6"/><rect x="487" y="692" width="9" height="1.2" fill="#7a3e28" opacity="0.6"/><rect x="355" y="680" width="9" height="2.1" fill="#7a3e28" opacity="0.6"/><rect x="114" y="727" width="9" height="2.2" fill="#8a4a30" opacity="0.6"/><rect x="476" y="624" width="19" height="1.5" fill="#8a4a30" opacity="0.6"/><rect x="311" y="610" width="10" height="1.1" fill="#3a1a12" opacity="0.6"/><rect x="169" y="608" width="19" height="2.2" fill="#c07a58" opacity="0.6"/><rect x="114" y="658" width="14" height="1.5" fill="#b06a48" opacity="0.6"/><rect x="694" y="705" width="12" height="2.1" fill="#6a3020" opacity="0.6"/><rect x="66" y="616" width="22" height="1.4" fill="#6a3020" opacity="0.6"/><rect x="672" y="587" width="21" height="2.2" fill="#b06a48" opacity="0.6"/><rect x="374" y="568" width="10" height="1.7" fill="#b06a48" opacity="0.6"/><rect x="232" y="511" width="8" height="1.1" fill="#c07a58" opacity="0.6"/><rect x="341" y="587" width="18" height="2.1" fill="#6a3020" opacity="0.6"/><rect x="360" y="712" width="8" height="2.1" fill="#b06a48" opacity="0.6"/><rect x="267" y="640" width="9" height="2.2" fill="#7a3e28" opacity="0.6"/><rect x="536" y="636" width="12" height="1.3" fill="#8a4a30" opacity="0.6"/><rect x="148" y="618" width="6" height="2.0" fill="#8a4a30" opacity="0.6"/><rect x="517" y="712" width="22" height="1.8" fill="#a05a3a" opacity="0.6"/><rect x="195" y="722" width="6" height="1.3" fill="#a05a3a" opacity="0.6"/><rect x="387" y="583" width="17" height="1.6" fill="#b06a48" opacity="0.6"/><rect x="0" y="550" width="7" height="2.0" fill="#8a4a30" opacity="0.6"/><rect x="152" y="532" width="15" height="1.9" fill="#6a3020" opacity="0.6"/><rect x="510" y="591" width="22" height="1.0" fill="#3a1a12" opacity="0.6"/><rect x="75" y="671" width="9" height="1.2" fill="#6a3020" opacity="0.6"/><rect x="661" y="510" width="4" height="1.1" fill="#3a1a12" opacity="0.6"/><rect x="470" y="651" width="7" height="1.9" fill="#b06a48" opacity="0.6"/><rect x="266" y="706" width="9" height="1.2" fill="#b06a48" opacity="0.6"/><rect x="107" y="530" width="18" height="1.1" fill="#c07a58" opacity="0.6"/><rect x="377" y="633" width="14" height="1.5" fill="#a05a3a" opacity="0.6"/><rect x="550" y="558" width="7" height="2.1" fill="#a05a3a" opacity="0.6"/><rect x="176" y="689" width="8" height="1.1" fill="#9a6048" opacity="0.6"/><rect x="444" y="601" width="13" height="1.0" fill="#a05a3a" opacity="0.6"/><rect x="339" y="617" width="21" height="1.7" fill="#b06a48" opacity="0.6"/><rect x="143" y="563" width="18" height="1.9" fill="#6a3020" opacity="0.6"/><rect x="490" y="599" width="10" height="1.6" fill="#9a6048" opacity="0.6"/><rect x="178" y="539" width="9" height="1.4" fill="#8a4a30" opacity="0.6"/><rect x="534" y="601" width="7" height="1.1" fill="#8a4a30" opacity="0.6"/><rect x="752" y="669" width="17" height="2.0" fill="#a05a3a" opacity="0.6"/><rect x="209" y="514" width="5" height="1.6" fill="#7a3e28" opacity="0.6"/><rect x="383" y="542" width="16" height="1.5" fill="#9a6048" opacity="0.6"/><rect x="60" y="706" width="4" height="1.3" fill="#3a1a12" opacity="0.6"/><rect x="68" y="596" width="14" height="1.3" fill="#6a3020" opacity="0.6"/><rect x="248" y="564" width="16" height="1.3" fill="#3a1a12" opacity="0.6"/><rect x="311" y="693" width="5" height="1.1" fill="#a05a3a" opacity="0.6"/><rect x="408" y="726" width="21" height="1.1" fill="#9a6048" opacity="0.6"/><rect x="185" y="527" width="21" height="1.7" fill="#9a6048" opacity="0.6"/><rect x="215" y="713" width="19" height="1.6" fill="#b06a48" opacity="0.6"/><rect x="42" y="603" width="16" height="1.0" fill="#b06a48" opacity="0.6"/><rect x="435" y="723" width="5" height="1.9" fill="#8a4a30" opacity="0.6"/><rect x="77" y="577" width="5" height="1.7" fill="#c07a58" opacity="0.6"/><rect x="258" y="660" width="11" height="1.9" fill="#c07a58" opacity="0.6"/><rect x="115" y="603" width="7" height="1.2" fill="#3a1a12" opacity="0.6"/><rect x="656" y="647" width="7" height="2.0" fill="#8a4a30" opacity="0.6"/><rect x="79" y="590" width="16" height="1.0" fill="#a05a3a" opacity="0.6"/><rect x="663" y="524" width="10" height="1.7" fill="#9a6048" opacity="0.6"/><rect x="736" y="649" width="21" height="1.7" fill="#7a3e28" opacity="0.6"/><rect x="230" y="551" width="17" height="1.2" fill="#6a3020" opacity="0.6"/><rect x="383" y="636" width="8" height="1.3" fill="#b06a48" opacity="0.6"/><rect x="378" y="598" width="16" height="1.2" fill="#c07a58" opacity="0.6"/><rect x="202" y="677" width="17" height="1.9" fill="#9a6048" opacity="0.6"/><rect x="182" y="711" width="13" height="1.5" fill="#c07a58" opacity="0.6"/><rect x="216" y="690" width="5" height="1.3" fill="#6a3020" opacity="0.6"/><rect x="553" y="552" width="12" height="1.4" fill="#c07a58" opacity="0.6"/><rect x="340" y="524" width="10" height="1.8" fill="#7a3e28" opacity="0.6"/><rect x="747" y="601" width="17" height="1.3" fill="#6a3020" opacity="0.6"/><rect x="524" y="566" width="5" height="1.4" fill="#a05a3a" opacity="0.6"/><rect x="327" y="641" width="20" height="2.0" fill="#c07a58" opacity="0.6"/><rect x="609" y="556" width="10" height="1.1" fill="#b06a48" opacity="0.6"/><rect x="366" y="587" width="9" height="1.6" fill="#b06a48" opacity="0.6"/><rect x="679" y="694" width="20" height="1.5" fill="#3a1a12" opacity="0.6"/><rect x="110" y="539" width="16" height="1.9" fill="#6a3020" opacity="0.6"/><rect x="206" y="711" width="19" height="1.4" fill="#b06a48" opacity="0.6"/><rect x="676" y="600" width="7" height="1.9" fill="#6a3020" opacity="0.6"/><rect x="382" y="530" width="9" height="1.6" fill="#c07a58" opacity="0.6"/><rect x="750" y="592" width="7" height="1.9" fill="#6a3020" opacity="0.6"/><rect x="78" y="577" width="6" height="1.0" fill="#7a3e28" opacity="0.6"/><rect x="149" y="634" width="14" height="1.3" fill="#8a4a30" opacity="0.6"/><rect x="144" y="696" width="20" height="1.3" fill="#6a3020" opacity="0.6"/><rect x="83" y="632" width="13" height="2.0" fill="#8a4a30" opacity="0.6"/><rect x="383" y="532" width="8" height="1.4" fill="#3a1a12" opacity="0.6"/><rect x="695" y="508" width="8" height="1.4" fill="#3a1a12" opacity="0.6"/><rect x="175" y="696" width="8" height="1.7" fill="#3a1a12" opacity="0.6"/><rect x="478" y="621" width="14" height="1.4" fill="#9a6048" opacity="0.6"/><rect x="588" y="612" width="22" height="1.1" fill="#3a1a12" opacity="0.6"/><rect x="346" y="639" width="7" height="1.7" fill="#9a6048" opacity="0.6"/><rect x="412" y="591" width="18" height="1.1" fill="#c07a58" opacity="0.6"/><rect x="574" y="672" width="21" height="2.1" fill="#c07a58" opacity="0.6"/><rect x="346" y="552" width="4" height="1.1" fill="#8a4a30" opacity="0.6"/><rect x="132" y="506" width="11" height="1.5" fill="#6a3020" opacity="0.6"/><rect x="387" y="724" width="7" height="1.6" fill="#9a6048" opacity="0.6"/><rect x="78" y="570" width="14" height="1.3" fill="#3a1a12" opacity="0.6"/><rect x="265" y="580" width="15" height="1.7" fill="#c07a58" opacity="0.6"/><rect x="576" y="643" width="17" height="2.0" fill="#6a3020" opacity="0.6"/><rect x="496" y="624" width="10" height="1.4" fill="#8a4a30" opacity="0.6"/><rect x="251" y="598" width="21" height="1.4" fill="#3a1a12" opacity="0.6"/><rect x="-7" y="728" width="8" height="1.6" fill="#6a3020" opacity="0.6"/><rect x="303" y="557" width="18" height="1.5" fill="#6a3020" opacity="0.6"/><rect x="618" y="518" width="11" height="2.1" fill="#6a3020" opacity="0.6"/><rect x="515" y="656" width="13" height="1.6" fill="#7a3e28" opacity="0.6"/><rect x="407" y="520" width="7" height="1.2" fill="#b06a48" opacity="0.6"/><rect x="531" y="677" width="16" height="2.0" fill="#c07a58" opacity="0.6"/><rect x="414" y="535" width="13" height="1.7" fill="#b06a48" opacity="0.6"/><rect x="201" y="572" width="8" height="2.2" fill="#7a3e28" opacity="0.6"/><rect x="507" y="671" width="10" height="1.2" fill="#6a3020" opacity="0.6"/><rect x="370" y="628" width="7" height="1.1" fill="#8a4a30" opacity="0.6"/><rect x="52" y="644" width="15" height="1.8" fill="#b06a48" opacity="0.6"/><rect x="196" y="694" width="7" height="2.0" fill="#a05a3a" opacity="0.6"/><rect x="2" y="704" width="12" height="2.0" fill="#9a6048" opacity="0.6"/><rect x="400" y="697" width="8" height="2.1" fill="#6a3020" opacity="0.6"/><rect x="455" y="534" width="11" height="2.1" fill="#a05a3a" opacity="0.6"/><rect x="471" y="532" width="7" height="1.4" fill="#c07a58" opacity="0.6"/><rect x="222" y="669" width="6" height="1.2" fill="#9a6048" opacity="0.6"/><rect x="454" y="721" width="14" height="1.0" fill="#a05a3a" opacity="0.6"/><rect x="554" y="556" width="6" height="2.1" fill="#9a6048" opacity="0.6"/><rect x="462" y="697" width="7" height="1.8" fill="#9a6048" opacity="0.6"/><rect x="280" y="685" width="19" height="2.1" fill="#7a3e28" opacity="0.6"/><rect x="206" y="671" width="19" height="1.3" fill="#c07a58" opacity="0.6"/><rect x="295" y="555" width="8" height="2.1" fill="#6a3020" opacity="0.6"/><rect x="345" y="583" width="13" height="1.7" fill="#6a3020" opacity="0.6"/><rect x="299" y="541" width="13" height="2.1" fill="#3a1a12" opacity="0.6"/><rect x="110" y="675" width="12" height="1.2" fill="#7a3e28" opacity="0.6"/><rect x="596" y="549" width="17" height="1.4" fill="#8a4a30" opacity="0.6"/><rect x="193" y="583" width="6" height="1.3" fill="#7a3e28" opacity="0.6"/><rect x="233" y="685" width="20" height="1.4" fill="#b06a48" opacity="0.6"/><rect x="415" y="639" width="15" height="1.2" fill="#b06a48" opacity="0.6"/><rect x="215" y="697" width="18" height="1.8" fill="#9a6048" opacity="0.6"/><rect x="326" y="655" width="21" height="1.2" fill="#8a4a30" opacity="0.6"/><rect x="110" y="543" width="20" height="1.4" fill="#3a1a12" opacity="0.6"/><rect x="289" y="538" width="7" height="1.7" fill="#7a3e28" opacity="0.6"/><rect x="114" y="636" width="7" height="1.8" fill="#9a6048" opacity="0.6"/><rect x="634" y="509" width="21" height="1.2" fill="#a05a3a" opacity="0.6"/><rect x="675" y="649" width="6" height="1.5" fill="#c07a58" opacity="0.6"/><rect x="475" y="638" width="21" height="1.2" fill="#6a3020" opacity="0.6"/><rect x="276" y="612" width="5" height="1.8" fill="#c07a58" opacity="0.6"/><rect x="108" y="628" width="17" height="1.1" fill="#a05a3a" opacity="0.6"/><rect x="142" y="551" width="9" height="2.0" fill="#c07a58" opacity="0.6"/><rect x="367" y="561" width="9" height="1.6" fill="#6a3020" opacity="0.6"/><rect x="177" y="701" width="11" height="1.9" fill="#a05a3a" opacity="0.6"/><rect x="78" y="672" width="12" height="1.6" fill="#a05a3a" opacity="0.6"/><rect x="757" y="552" width="5" height="1.9" fill="#3a1a12" opacity="0.6"/><rect x="492" y="624" width="8" height="1.5" fill="#9a6048" opacity="0.6"/><rect x="511" y="635" width="14" height="1.9" fill="#c07a58" opacity="0.6"/><rect x="127" y="596" width="20" height="1.5" fill="#a05a3a" opacity="0.6"/><rect x="421" y="608" width="14" height="1.3" fill="#8a4a30" opacity="0.6"/><rect x="51" y="587" width="20" height="2.2" fill="#a05a3a" opacity="0.6"/><rect x="189" y="614" width="7" height="1.2" fill="#b06a48" opacity="0.6"/><rect x="664" y="602" width="15" height="2.1" fill="#b06a48" opacity="0.6"/><rect x="485" y="651" width="16" height="1.0" fill="#9a6048" opacity="0.6"/><rect x="545" y="621" width="8" height="1.1" fill="#a05a3a" opacity="0.6"/><rect x="506" y="569" width="18" height="1.4" fill="#b06a48" opacity="0.6"/><rect x="79" y="668" width="5" height="2.1" fill="#a05a3a" opacity="0.6"/><rect x="590" y="709" width="17" height="1.7" fill="#3a1a12" opacity="0.6"/><rect x="679" y="531" width="12" height="1.6" fill="#9a6048" opacity="0.6"/><rect x="285" y="602" width="8" height="2.2" fill="#6a3020" opacity="0.6"/><rect x="360" y="664" width="11" height="1.6" fill="#c07a58" opacity="0.6"/><rect x="632" y="636" width="16" height="1.3" fill="#7a3e28" opacity="0.6"/><rect x="108" y="592" width="15" height="1.4" fill="#b06a48" opacity="0.6"/><rect x="318" y="714" width="20" height="1.3" fill="#a05a3a" opacity="0.6"/><rect x="310" y="513" width="12" height="2.1" fill="#c07a58" opacity="0.6"/><rect x="691" y="603" width="18" height="1.1" fill="#8a4a30" opacity="0.6"/><rect x="302" y="618" width="19" height="2.0" fill="#6a3020" opacity="0.6"/><rect x="88" y="611" width="4" height="1.2" fill="#7a3e28" opacity="0.6"/><rect x="482" y="687" width="14" height="1.7" fill="#8a4a30" opacity="0.6"/><rect x="95" y="688" width="12" height="1.3" fill="#7a3e28" opacity="0.6"/><rect x="231" y="720" width="14" height="2.2" fill="#3a1a12" opacity="0.6"/><rect x="225" y="518" width="6" height="1.5" fill="#7a3e28" opacity="0.6"/><rect x="442" y="666" width="9" height="1.6" fill="#b06a48" opacity="0.6"/><rect x="432" y="510" width="12" height="1.4" fill="#c07a58" opacity="0.6"/><rect x="482" y="619" width="6" height="1.6" fill="#6a3020" opacity="0.6"/><rect x="166" y="531" width="13" height="1.6" fill="#c07a58" opacity="0.6"/><rect x="278" y="597" width="20" height="1.3" fill="#7a3e28" opacity="0.6"/><rect x="752" y="715" width="9" height="2.0" fill="#7a3e28" opacity="0.6"/><rect x="94" y="627" width="6" height="2.0" fill="#a05a3a" opacity="0.6"/><rect x="51" y="698" width="7" height="1.3" fill="#7a3e28" opacity="0.6"/><rect x="297" y="544" width="16" height="1.4" fill="#8a4a30" opacity="0.6"/><rect x="132" y="648" width="14" height="1.5" fill="#7a3e28" opacity="0.6"/><rect x="728" y="592" width="16" height="1.2" fill="#c07a58" opacity="0.6"/><rect x="300" y="632" width="13" height="1.2" fill="#b06a48" opacity="0.6"/><rect x="733" y="678" width="22" height="1.6" fill="#8a4a30" opacity="0.6"/><rect x="175" y="671" width="17" height="2.1" fill="#6a3020" opacity="0.6"/><rect x="667" y="565" width="18" height="1.6" fill="#c07a58" opacity="0.6"/><rect x="453" y="724" width="20" height="1.2" fill="#b06a48" opacity="0.6"/><rect x="121" y="540" width="14" height="1.3" fill="#6a3020" opacity="0.6"/><rect x="656" y="622" width="7" height="1.7" fill="#6a3020" opacity="0.6"/><rect x="737" y="569" width="5" height="1.2" fill="#a05a3a" opacity="0.6"/><rect x="721" y="554" width="12" height="1.5" fill="#3a1a12" opacity="0.6"/><rect x="595" y="526" width="21" height="1.5" fill="#7a3e28" opacity="0.6"/><rect x="9" y="527" width="17" height="1.7" fill="#8a4a30" opacity="0.6"/><rect x="180" y="569" width="21" height="1.4" fill="#a05a3a" opacity="0.6"/><rect x="673" y="533" width="19" height="1.0" fill="#9a6048" opacity="0.6"/><rect x="413" y="686" width="7" height="1.6" fill="#c07a58" opacity="0.6"/><rect x="256" y="541" width="6" height="2.2" fill="#6a3020" opacity="0.6"/><rect x="451" y="711" width="19" height="1.7" fill="#6a3020" opacity="0.6"/><rect x="27" y="617" width="13" height="1.0" fill="#c07a58" opacity="0.6"/><rect x="534" y="713" width="16" height="1.8" fill="#3a1a12" opacity="0.6"/><rect x="589" y="604" width="12" height="1.9" fill="#6a3020" opacity="0.6"/><rect x="698" y="659" width="7" height="1.1" fill="#b06a48" opacity="0.6"/><rect x="151" y="552" width="16" height="1.2" fill="#6a3020" opacity="0.6"/><rect x="757" y="604" width="18" height="1.8" fill="#b06a48" opacity="0.6"/><rect x="616" y="518" width="12" height="1.1" fill="#a05a3a" opacity="0.6"/><rect x="4" y="612" width="11" height="2.1" fill="#3a1a12" opacity="0.6"/><rect x="169" y="536" width="5" height="1.5" fill="#6a3020" opacity="0.6"/><rect x="225" y="615" width="11" height="1.8" fill="#a05a3a" opacity="0.6"/><rect x="239" y="640" width="22" height="1.2" fill="#6a3020" opacity="0.6"/><rect x="750" y="511" width="19" height="2.0" fill="#9a6048" opacity="0.6"/><rect x="527" y="720" width="19" height="1.7" fill="#6a3020" opacity="0.6"/><rect x="-0" y="591" width="9" height="1.7" fill="#8a4a30" opacity="0.6"/><rect x="375" y="623" width="6" height="1.1" fill="#8a4a30" opacity="0.6"/><rect x="373" y="601" width="13" height="1.0" fill="#9a6048" opacity="0.6"/><rect x="661" y="725" width="18" height="1.1" fill="#3a1a12" opacity="0.6"/><rect x="502" y="567" width="21" height="2.0" fill="#7a3e28" opacity="0.6"/><rect x="261" y="609" width="6" height="1.8" fill="#a05a3a" opacity="0.6"/><rect x="245" y="626" width="21" height="1.7" fill="#a05a3a" opacity="0.6"/><rect x="321" y="702" width="15" height="1.7" fill="#b06a48" opacity="0.6"/><rect x="470" y="612" width="15" height="1.6" fill="#c07a58" opacity="0.6"/><rect x="719" y="508" width="10" height="2.1" fill="#a05a3a" opacity="0.6"/><rect x="579" y="559" width="20" height="1.2" fill="#c07a58" opacity="0.6"/><rect x="173" y="590" width="8" height="1.8" fill="#6a3020" opacity="0.6"/><rect x="463" y="537" width="18" height="2.0" fill="#8a4a30" opacity="0.6"/><rect x="180" y="620" width="11" height="1.4" fill="#9a6048" opacity="0.6"/><rect x="125" y="630" width="18" height="2.1" fill="#a05a3a" opacity="0.6"/><rect x="396" y="683" width="5" height="1.1" fill="#a05a3a" opacity="0.6"/><rect x="296" y="627" width="21" height="1.1" fill="#6a3020" opacity="0.6"/><rect x="45" y="590" width="21" height="1.7" fill="#a05a3a" opacity="0.6"/><rect x="437" y="532" width="18" height="1.6" fill="#b06a48" opacity="0.6"/><rect x="365" y="692" width="6" height="2.1" fill="#b06a48" opacity="0.6"/><rect x="614" y="556" width="4" height="2.0" fill="#c07a58" opacity="0.6"/><rect x="65" y="676" width="18" height="1.8" fill="#6a3020" opacity="0.6"/><rect x="743" y="534" width="7" height="1.8" fill="#3a1a12" opacity="0.6"/><rect x="517" y="694" width="14" height="1.3" fill="#c07a58" opacity="0.6"/><rect x="456" y="546" width="15" height="1.4" fill="#b06a48" opacity="0.6"/><rect x="177" y="660" width="16" height="1.1" fill="#c07a58" opacity="0.6"/><rect x="580" y="573" width="6" height="1.3" fill="#9a6048" opacity="0.6"/><rect x="611" y="626" width="12" height="1.1" fill="#3a1a12" opacity="0.6"/><rect x="667" y="541" width="5" height="1.9" fill="#8a4a30" opacity="0.6"/><rect x="690" y="594" width="6" height="1.5" fill="#a05a3a" opacity="0.6"/><rect x="663" y="596" width="12" height="1.0" fill="#6a3020" opacity="0.6"/><rect x="145" y="636" width="12" height="1.4" fill="#9a6048" opacity="0.6"/><rect x="399" y="661" width="6" height="1.5" fill="#c07a58" opacity="0.6"/><rect x="312" y="570" width="6" height="1.5" fill="#9a6048" opacity="0.6"/><rect x="207" y="698" width="15" height="1.6" fill="#3a1a12" opacity="0.6"/><rect x="469" y="525" width="6" height="1.1" fill="#9a6048" opacity="0.6"/><rect x="654" y="562" width="9" height="1.1" fill="#b06a48" opacity="0.6"/><rect x="384" y="548" width="4" height="2.1" fill="#6a3020" opacity="0.6"/><rect x="280" y="533" width="15" height="1.9" fill="#3a1a12" opacity="0.6"/><rect x="498" y="574" width="13" height="1.3" fill="#9a6048" opacity="0.6"/><rect x="629" y="569" width="20" height="1.9" fill="#9a6048" opacity="0.6"/><rect x="461" y="644" width="7" height="1.3" fill="#a05a3a" opacity="0.6"/><rect x="308" y="726" width="4" height="2.0" fill="#9a6048" opacity="0.6"/><rect x="278" y="690" width="8" height="1.9" fill="#9a6048" opacity="0.6"/><rect x="757" y="667" width="17" height="1.8" fill="#8a4a30" opacity="0.6"/><rect x="59" y="723" width="8" height="1.5" fill="#3a1a12" opacity="0.6"/><rect x="276" y="653" width="16" height="1.5" fill="#3a1a12" opacity="0.6"/><rect x="271" y="529" width="5" height="1.6" fill="#9a6048" opacity="0.6"/><rect x="575" y="714" width="16" height="1.7" fill="#b06a48" opacity="0.6"/><rect x="175" y="645" width="13" height="2.2" fill="#6a3020" opacity="0.6"/><rect x="183" y="575" width="13" height="1.5" fill="#9a6048" opacity="0.6"/><rect x="424" y="551" width="5" height="1.2" fill="#6a3020" opacity="0.6"/><rect x="219" y="523" width="8" height="1.6" fill="#c07a58" opacity="0.6"/><rect x="330" y="625" width="14" height="1.1" fill="#8a4a30" opacity="0.6"/><rect x="123" y="551" width="6" height="1.2" fill="#c07a58" opacity="0.6"/><rect x="268" y="537" width="10" height="1.5" fill="#8a4a30" opacity="0.6"/><rect x="24" y="614" width="5" height="1.9" fill="#c07a58" opacity="0.6"/><rect x="276" y="725" width="9" height="1.6" fill="#b06a48" opacity="0.6"/><rect x="618" y="606" width="17" height="1.4" fill="#b06a48" opacity="0.6"/><rect x="449" y="651" width="11" height="1.7" fill="#7a3e28" opacity="0.6"/><rect x="224" y="586" width="9" height="1.3" fill="#8a4a30" opacity="0.6"/><rect x="417" y="591" width="15" height="1.4" fill="#a05a3a" opacity="0.6"/><rect x="332" y="699" width="18" height="1.9" fill="#c07a58" opacity="0.6"/><rect x="374" y="633" width="8" height="1.3" fill="#6a3020" opacity="0.6"/><rect x="422" y="612" width="10" height="1.8" fill="#3a1a12" opacity="0.6"/><rect x="54" y="698" width="14" height="1.9" fill="#3a1a12" opacity="0.6"/><rect x="475" y="649" width="13" height="1.5" fill="#7a3e28" opacity="0.6"/><rect x="367" y="513" width="18" height="1.3" fill="#9a6048" opacity="0.6"/><rect x="589" y="660" width="9" height="1.8" fill="#b06a48" opacity="0.6"/><rect x="480" y="604" width="17" height="1.8" fill="#7a3e28" opacity="0.6"/><rect x="209" y="615" width="7" height="2.1" fill="#c07a58" opacity="0.6"/><rect x="297" y="510" width="9" height="2.1" fill="#7a3e28" opacity="0.6"/><rect x="435" y="544" width="17" height="1.1" fill="#b06a48" opacity="0.6"/><rect x="732" y="573" width="18" height="1.5" fill="#9a6048" opacity="0.6"/><rect x="713" y="568" width="17" height="1.8" fill="#6a3020" opacity="0.6"/><rect x="186" y="717" width="21" height="1.0" fill="#6a3020" opacity="0.6"/><rect x="167" y="679" width="18" height="1.3" fill="#6a3020" opacity="0.6"/><rect x="8" y="691" width="10" height="1.0" fill="#c07a58" opacity="0.6"/><rect x="96" y="586" width="15" height="1.4" fill="#b06a48" opacity="0.6"/><rect x="319" y="524" width="21" height="1.6" fill="#6a3020" opacity="0.6"/><rect x="395" y="678" width="17" height="1.4" fill="#c07a58" opacity="0.6"/><rect x="423" y="611" width="10" height="1.2" fill="#c07a58" opacity="0.6"/><rect x="458" y="527" width="21" height="2.1" fill="#a05a3a" opacity="0.6"/><rect x="142" y="622" width="6" height="1.8" fill="#9a6048" opacity="0.6"/><rect x="260" y="616" width="16" height="1.2" fill="#7a3e28" opacity="0.6"/><rect x="317" y="724" width="7" height="1.9" fill="#a05a3a" opacity="0.6"/><rect x="56" y="583" width="13" height="1.6" fill="#b06a48" opacity="0.6"/><rect x="724" y="646" width="13" height="1.2" fill="#3a1a12" opacity="0.6"/><rect x="87" y="553" width="18" height="1.6" fill="#9a6048" opacity="0.6"/><rect x="250" y="594" width="21" height="1.4" fill="#9a6048" opacity="0.6"/><rect x="676" y="550" width="14" height="2.1" fill="#8a4a30" opacity="0.6"/><rect x="521" y="608" width="21" height="1.3" fill="#8a4a30" opacity="0.6"/><rect x="250" y="538" width="7" height="1.7" fill="#6a3020" opacity="0.6"/><rect x="269" y="522" width="6" height="1.6" fill="#c07a58" opacity="0.6"/><rect x="709" y="591" width="18" height="1.6" fill="#6a3020" opacity="0.6"/><rect x="222" y="627" width="4" height="1.6" fill="#8a4a30" opacity="0.6"/><rect x="147" y="582" width="14" height="1.2" fill="#8a4a30" opacity="0.6"/><rect x="727" y="523" width="17" height="1.9" fill="#b06a48" opacity="0.6"/><rect x="2" y="711" width="12" height="1.7" fill="#c07a58" opacity="0.6"/><rect x="202" y="512" width="21" height="1.3" fill="#a05a3a" opacity="0.6"/><rect x="199" y="608" width="8" height="2.0" fill="#7a3e28" opacity="0.6"/><rect x="103" y="705" width="16" height="1.7" fill="#b06a48" opacity="0.6"/><rect x="365" y="586" width="20" height="1.5" fill="#a05a3a" opacity="0.6"/><rect x="380" y="725" width="13" height="1.7" fill="#a05a3a" opacity="0.6"/><rect x="302" y="535" width="18" height="1.2" fill="#3a1a12" opacity="0.6"/><rect x="608" y="534" width="20" height="1.5" fill="#c07a58" opacity="0.6"/><rect x="55" y="531" width="21" height="1.4" fill="#8a4a30" opacity="0.6"/><rect x="675" y="619" width="13" height="2.2" fill="#7a3e28" opacity="0.6"/><rect x="96" y="526" width="8" height="1.3" fill="#a05a3a" opacity="0.6"/><rect x="312" y="513" width="21" height="1.6" fill="#7a3e28" opacity="0.6"/><rect x="574" y="572" width="17" height="1.2" fill="#9a6048" opacity="0.6"/><rect x="587" y="542" width="10" height="2.0" fill="#6a3020" opacity="0.6"/><rect x="743" y="531" width="8" height="1.1" fill="#6a3020" opacity="0.6"/><rect x="489" y="679" width="13" height="1.7" fill="#a05a3a" opacity="0.6"/><rect x="495" y="636" width="13" height="1.9" fill="#a05a3a" opacity="0.6"/><rect x="89" y="600" width="12" height="1.5" fill="#6a3020" opacity="0.6"/><rect x="388" y="538" width="9" height="1.4" fill="#8a4a30" opacity="0.6"/><rect x="329" y="577" width="6" height="1.6" fill="#b06a48" opacity="0.6"/><rect x="446" y="587" width="8" height="1.0" fill="#a05a3a" opacity="0.6"/><rect x="713" y="569" width="12" height="1.4" fill="#a05a3a" opacity="0.6"/><rect x="690" y="557" width="16" height="1.5" fill="#9a6048" opacity="0.6"/><rect x="332" y="531" width="7" height="2.0" fill="#6a3020" opacity="0.6"/><rect x="78" y="637" width="22" height="1.9" fill="#9a6048" opacity="0.6"/><rect x="695" y="721" width="12" height="1.3" fill="#9a6048" opacity="0.6"/><rect x="503" y="611" width="20" height="2.1" fill="#b06a48" opacity="0.6"/><rect x="67" y="636" width="12" height="1.3" fill="#8a4a30" opacity="0.6"/><rect x="442" y="603" width="8" height="2.1" fill="#8a4a30" opacity="0.6"/><rect x="328" y="686" width="7" height="1.9" fill="#6a3020" opacity="0.6"/><rect x="734" y="667" width="5" height="2.0" fill="#a05a3a" opacity="0.6"/><rect x="75" y="597" width="15" height="1.8" fill="#6a3020" opacity="0.6"/><rect x="639" y="605" width="10" height="1.2" fill="#c07a58" opacity="0.6"/><rect x="403" y="538" width="22" height="1.3" fill="#c07a58" opacity="0.6"/><rect x="334" y="667" width="9" height="1.8" fill="#7a3e28" opacity="0.6"/><rect x="689" y="542" width="7" height="1.2" fill="#7a3e28" opacity="0.6"/><rect x="548" y="544" width="19" height="1.4" fill="#9a6048" opacity="0.6"/><rect x="745" y="540" width="11" height="1.1" fill="#c07a58" opacity="0.6"/><rect x="126" y="709" width="10" height="1.2" fill="#c07a58" opacity="0.6"/><rect x="626" y="534" width="20" height="2.2" fill="#9a6048" opacity="0.6"/><rect x="385" y="638" width="6" height="1.8" fill="#c07a58" opacity="0.6"/><rect x="-8" y="664" width="12" height="1.1" fill="#c07a58" opacity="0.6"/><rect x="60" y="529" width="9" height="1.6" fill="#7a3e28" opacity="0.6"/><rect x="749" y="689" width="18" height="1.8" fill="#a05a3a" opacity="0.6"/><rect x="528" y="702" width="16" height="1.1" fill="#a05a3a" opacity="0.6"/><rect x="8" y="631" width="20" height="1.1" fill="#3a1a12" opacity="0.6"/><rect x="138" y="614" width="14" height="2.0" fill="#9a6048" opacity="0.6"/><rect x="25" y="724" width="9" height="2.0" fill="#8a4a30" opacity="0.6"/><rect x="296" y="679" width="18" height="1.7" fill="#8a4a30" opacity="0.6"/><rect x="565" y="717" width="19" height="1.7" fill="#6a3020" opacity="0.6"/><rect x="207" y="566" width="6" height="2.2" fill="#a05a3a" opacity="0.6"/><rect x="55" y="590" width="14" height="1.8" fill="#6a3020" opacity="0.6"/><rect x="707" y="560" width="7" height="1.8" fill="#c07a58" opacity="0.6"/><rect x="128" y="700" width="6" height="1.2" fill="#7a3e28" opacity="0.6"/><rect x="273" y="620" width="6" height="2.1" fill="#3a1a12" opacity="0.6"/><rect x="678" y="609" width="5" height="2.0" fill="#a05a3a" opacity="0.6"/><rect x="491" y="692" width="4" height="1.1" fill="#b06a48" opacity="0.6"/><rect x="89" y="571" width="19" height="1.8" fill="#8a4a30" opacity="0.6"/><rect x="380" y="540" width="20" height="1.8" fill="#c07a58" opacity="0.6"/><rect x="236" y="535" width="7" height="1.5" fill="#b06a48" opacity="0.6"/><rect x="223" y="535" width="10" height="1.3" fill="#6a3020" opacity="0.6"/><rect x="606" y="525" width="10" height="2.1" fill="#8a4a30" opacity="0.6"/><rect x="579" y="624" width="18" height="1.7" fill="#8a4a30" opacity="0.6"/><rect x="427" y="641" width="7" height="1.4" fill="#3a1a12" opacity="0.6"/><rect x="5" y="527" width="7" height="2.1" fill="#3a1a12" opacity="0.6"/><rect x="603" y="701" width="10" height="1.2" fill="#c07a58" opacity="0.6"/><rect x="524" y="588" width="10" height="1.2" fill="#9a6048" opacity="0.6"/><rect x="345" y="686" width="10" height="1.4" fill="#8a4a30" opacity="0.6"/><rect x="564" y="702" width="10" height="1.8" fill="#3a1a12" opacity="0.6"/><rect x="516" y="584" width="14" height="1.7" fill="#9a6048" opacity="0.6"/><rect x="201" y="702" width="18" height="1.4" fill="#8a4a30" opacity="0.6"/><rect x="524" y="651" width="12" height="1.0" fill="#c07a58" opacity="0.6"/><rect x="417" y="625" width="11" height="1.7" fill="#8a4a30" opacity="0.6"/><rect x="93" y="561" width="16" height="2.1" fill="#9a6048" opacity="0.6"/><rect x="483" y="685" width="16" height="2.1" fill="#a05a3a" opacity="0.6"/><rect x="164" y="666" width="18" height="2.1" fill="#3a1a12" opacity="0.6"/><rect x="399" y="677" width="7" height="1.6" fill="#3a1a12" opacity="0.6"/><rect x="736" y="685" width="4" height="2.0" fill="#7a3e28" opacity="0.6"/><rect x="514" y="573" width="17" height="1.6" fill="#a05a3a" opacity="0.6"/><rect x="270" y="702" width="16" height="1.5" fill="#6a3020" opacity="0.6"/><rect x="729" y="507" width="20" height="1.9" fill="#9a6048" opacity="0.6"/><rect x="415" y="628" width="4" height="1.6" fill="#3a1a12" opacity="0.6"/><rect x="277" y="727" width="16" height="1.1" fill="#8a4a30" opacity="0.6"/><rect x="351" y="525" width="11" height="1.3" fill="#9a6048" opacity="0.6"/><rect x="489" y="604" width="14" height="2.0" fill="#9a6048" opacity="0.6"/><rect x="437" y="623" width="14" height="1.6" fill="#7a3e28" opacity="0.6"/><rect x="626" y="522" width="6" height="1.4" fill="#b06a48" opacity="0.6"/><rect x="408" y="710" width="16" height="1.3" fill="#7a3e28" opacity="0.6"/><rect x="161" y="554" width="4" height="1.3" fill="#a05a3a" opacity="0.6"/><rect x="2" y="598" width="21" height="1.9" fill="#3a1a12" opacity="0.6"/><rect x="450" y="572" width="17" height="1.8" fill="#b06a48" opacity="0.6"/><rect x="353" y="608" width="9" height="1.0" fill="#9a6048" opacity="0.6"/><rect x="719" y="577" width="15" height="1.6" fill="#a05a3a" opacity="0.6"/><rect x="647" y="687" width="13" height="1.2" fill="#c07a58" opacity="0.6"/><rect x="274" y="641" width="15" height="1.4" fill="#6a3020" opacity="0.6"/><rect x="695" y="591" width="18" height="2.1" fill="#6a3020" opacity="0.6"/><rect x="244" y="665" width="19" height="1.2" fill="#a05a3a" opacity="0.6"/><rect x="444" y="689" width="5" height="1.7" fill="#6a3020" opacity="0.6"/><rect x="748" y="714" width="6" height="1.4" fill="#3a1a12" opacity="0.6"/><rect x="402" y="718" width="9" height="1.0" fill="#c07a58" opacity="0.6"/><rect x="526" y="648" width="5" height="1.7" fill="#3a1a12" opacity="0.6"/><rect x="665" y="562" width="19" height="1.0" fill="#3a1a12" opacity="0.6"/><rect x="9" y="571" width="4" height="1.1" fill="#a05a3a" opacity="0.6"/><rect x="172" y="663" width="16" height="1.1" fill="#6a3020" opacity="0.6"/><rect x="45" y="660" width="10" height="1.2" fill="#8a4a30" opacity="0.6"/><rect x="561" y="680" width="19" height="1.5" fill="#7a3e28" opacity="0.6"/><rect x="737" y="712" width="14" height="1.3" fill="#6a3020" opacity="0.6"/><rect x="746" y="668" width="16" height="2.0" fill="#3a1a12" opacity="0.6"/><rect x="467" y="633" width="19" height="1.1" fill="#a05a3a" opacity="0.6"/><rect x="408" y="696" width="5" height="2.0" fill="#9a6048" opacity="0.6"/><rect x="255" y="596" width="19" height="1.4" fill="#7a3e28" opacity="0.6"/><rect x="-8" y="526" width="17" height="1.2" fill="#c07a58" opacity="0.6"/><rect x="331" y="637" width="16" height="1.9" fill="#a05a3a" opacity="0.6"/><rect x="748" y="511" width="19" height="1.4" fill="#a05a3a" opacity="0.6"/><rect x="322" y="558" width="15" height="2.2" fill="#7a3e28" opacity="0.6"/><rect x="708" y="648" width="8" height="1.3" fill="#8a4a30" opacity="0.6"/><rect x="328" y="725" width="10" height="1.4" fill="#9a6048" opacity="0.6"/><rect x="710" y="682" width="12" height="1.2" fill="#3a1a12" opacity="0.6"/><rect x="603" y="546" width="6" height="1.8" fill="#9a6048" opacity="0.6"/><rect x="422" y="615" width="5" height="1.3" fill="#6a3020" opacity="0.6"/><rect x="647" y="524" width="16" height="1.5" fill="#9a6048" opacity="0.6"/><rect x="281" y="536" width="20" height="1.6" fill="#9a6048" opacity="0.6"/><rect x="212" y="526" width="15" height="2.1" fill="#b06a48" opacity="0.6"/><rect x="243" y="555" width="15" height="1.9" fill="#7a3e28" opacity="0.6"/><rect x="333" y="687" width="19" height="1.6" fill="#9a6048" opacity="0.6"/><rect x="326" y="650" width="20" height="1.2" fill="#6a3020" opacity="0.6"/><rect x="632" y="579" width="5" height="1.1" fill="#b06a48" opacity="0.6"/><rect x="564" y="646" width="21" height="1.8" fill="#a05a3a" opacity="0.6"/><rect x="300" y="634" width="13" height="1.2" fill="#b06a48" opacity="0.6"/><rect x="146" y="696" width="11" height="2.2" fill="#6a3020" opacity="0.6"/><rect x="490" y="548" width="21" height="1.2" fill="#a05a3a" opacity="0.6"/><rect x="715" y="718" width="17" height="2.0" fill="#a05a3a" opacity="0.6"/><rect x="18" y="572" width="15" height="2.0" fill="#8a4a30" opacity="0.6"/><rect x="9" y="719" width="22" height="2.0" fill="#9a6048" opacity="0.6"/><rect x="264" y="692" width="4" height="1.8" fill="#9a6048" opacity="0.6"/><rect x="99" y="513" width="19" height="1.8" fill="#9a6048" opacity="0.6"/><rect x="231" y="565" width="21" height="1.6" fill="#a05a3a" opacity="0.6"/><rect x="211" y="704" width="4" height="1.9" fill="#8a4a30" opacity="0.6"/><rect x="685" y="687" width="4" height="1.5" fill="#8a4a30" opacity="0.6"/><rect x="598" y="612" width="19" height="1.1" fill="#8a4a30" opacity="0.6"/><rect x="197" y="592" width="20" height="1.6" fill="#7a3e28" opacity="0.6"/><rect x="295" y="554" width="16" height="1.7" fill="#3a1a12" opacity="0.6"/><rect x="524" y="721" width="14" height="1.2" fill="#a05a3a" opacity="0.6"/><rect x="53" y="672" width="8" height="1.4" fill="#6a3020" opacity="0.6"/><rect x="291" y="697" width="10" height="1.8" fill="#9a6048" opacity="0.6"/><rect x="143" y="573" width="4" height="1.2" fill="#3a1a12" opacity="0.6"/><rect x="149" y="605" width="21" height="1.3" fill="#a05a3a" opacity="0.6"/><rect x="643" y="669" width="14" height="1.5" fill="#3a1a12" opacity="0.6"/><rect x="49" y="527" width="10" height="1.1" fill="#a05a3a" opacity="0.6"/><rect x="655" y="525" width="16" height="1.0" fill="#a05a3a" opacity="0.6"/><rect x="546" y="689" width="15" height="1.3" fill="#3a1a12" opacity="0.6"/><rect x="294" y="565" width="7" height="2.0" fill="#9a6048" opacity="0.6"/><rect x="708" y="543" width="9" height="1.6" fill="#a05a3a" opacity="0.6"/><rect x="649" y="554" width="8" height="1.4" fill="#6a3020" opacity="0.6"/><rect x="490" y="669" width="14" height="1.9" fill="#8a4a30" opacity="0.6"/><rect x="76" y="555" width="16" height="1.2" fill="#a05a3a" opacity="0.6"/><rect x="114" y="541" width="14" height="1.4" fill="#7a3e28" opacity="0.6"/><rect x="362" y="687" width="16" height="2.0" fill="#b06a48" opacity="0.6"/><rect x="309" y="585" width="10" height="1.0" fill="#c07a58" opacity="0.6"/><rect x="558" y="615" width="4" height="1.3" fill="#9a6048" opacity="0.6"/><rect x="342" y="551" width="19" height="2.1" fill="#8a4a30" opacity="0.6"/><rect x="716" y="606" width="22" height="1.0" fill="#b06a48" opacity="0.6"/><rect x="466" y="655" width="15" height="1.7" fill="#3a1a12" opacity="0.6"/><rect x="398" y="652" width="8" height="1.7" fill="#c07a58" opacity="0.6"/><rect x="49" y="677" width="7" height="1.4" fill="#7a3e28" opacity="0.6"/><rect x="424" y="721" width="21" height="2.2" fill="#c07a58" opacity="0.6"/><rect x="711" y="563" width="14" height="1.8" fill="#7a3e28" opacity="0.6"/><rect x="185" y="597" width="12" height="1.6" fill="#b06a48" opacity="0.6"/><rect x="95" y="567" width="16" height="1.8" fill="#7a3e28" opacity="0.6"/><rect x="370" y="717" width="8" height="1.2" fill="#3a1a12" opacity="0.6"/><rect x="49" y="583" width="20" height="1.8" fill="#8a4a30" opacity="0.6"/><rect x="743" y="519" width="21" height="1.0" fill="#8a4a30" opacity="0.6"/><rect x="432" y="719" width="18" height="1.1" fill="#6a3020" opacity="0.6"/><rect x="175" y="636" width="14" height="1.4" fill="#3a1a12" opacity="0.6"/><rect x="425" y="630" width="22" height="1.8" fill="#b06a48" opacity="0.6"/><rect x="583" y="625" width="17" height="1.8" fill="#a05a3a" opacity="0.6"/><rect x="737" y="674" width="8" height="1.7" fill="#9a6048" opacity="0.6"/><rect x="690" y="601" width="12" height="1.9" fill="#8a4a30" opacity="0.6"/><rect x="367" y="600" width="17" height="1.9" fill="#3a1a12" opacity="0.6"/><rect x="606" y="564" width="16" height="1.6" fill="#a05a3a" opacity="0.6"/><rect x="334" y="585" width="4" height="1.6" fill="#c07a58" opacity="0.6"/><rect x="220" y="614" width="5" height="2.1" fill="#9a6048" opacity="0.6"/><rect x="332" y="583" width="13" height="1.6" fill="#3a1a12" opacity="0.6"/><rect x="467" y="607" width="15" height="1.1" fill="#6a3020" opacity="0.6"/><rect x="207" y="583" width="10" height="1.9" fill="#9a6048" opacity="0.6"/><rect x="456" y="688" width="7" height="2.2" fill="#6a3020" opacity="0.6"/><rect x="163" y="579" width="6" height="1.7" fill="#a05a3a" opacity="0.6"/><rect x="484" y="638" width="19" height="1.4" fill="#a05a3a" opacity="0.6"/><rect x="545" y="537" width="22" height="1.7" fill="#c07a58" opacity="0.6"/><rect x="278" y="648" width="9" height="2.1" fill="#6a3020" opacity="0.6"/><rect x="145" y="620" width="8" height="1.6" fill="#b06a48" opacity="0.6"/><rect x="365" y="724" width="6" height="1.3" fill="#8a4a30" opacity="0.6"/><rect x="753" y="618" width="16" height="1.3" fill="#8a4a30" opacity="0.6"/><rect x="80" y="703" width="10" height="2.0" fill="#9a6048" opacity="0.6"/><rect x="50" y="701" width="11" height="2.0" fill="#9a6048" opacity="0.6"/><rect x="87" y="690" width="17" height="1.2" fill="#9a6048" opacity="0.6"/><rect x="655" y="539" width="13" height="1.6" fill="#8a4a30" opacity="0.6"/><rect x="296" y="666" width="17" height="1.3" fill="#c07a58" opacity="0.6"/><rect x="653" y="718" width="15" height="1.1" fill="#b06a48" opacity="0.6"/><rect x="692" y="649" width="15" height="2.1" fill="#9a6048" opacity="0.6"/><rect x="93" y="507" width="8" height="1.9" fill="#6a3020" opacity="0.6"/><rect x="228" y="691" width="21" height="2.1" fill="#9a6048" opacity="0.6"/><rect x="43" y="592" width="12" height="1.3" fill="#8a4a30" opacity="0.6"/><rect x="97" y="618" width="21" height="2.1" fill="#9a6048" opacity="0.6"/><rect x="119" y="575" width="10" height="1.5" fill="#b06a48" opacity="0.6"/><rect x="133" y="567" width="22" height="1.0" fill="#9a6048" opacity="0.6"/></g><rect x="0" y="500" width="75" height="228" fill="url(#vb)"/><rect x="152" y="500" width="48" height="228" fill="url(#vb)"/><rect x="206" y="500" width="50" height="228" fill="url(#vb)"/><rect x="0" y="500" width="40" height="228" fill="#1e1210" opacity="0.6"/><rect x="278" y="500" width="54" height="228" fill="url(#vbp)"/><rect x="728" y="505" width="25" height="223" fill="#1a1212" opacity="0.88"/><rect x="332" y="680" width="421" height="48" fill="url(#fgrad)"/><rect x="0" y="600" width="5" height="128" fill="#607080" opacity="0.6"/><rect x="0" y="258" width="1366" height="165" fill="#2a2024" opacity="0.55"/><rect x="291" y="256" width="41" height="34" fill="#3a3238" opacity="0.8"/><rect x="0" y="425" width="32" height="191" fill="url(#lstrip)"/><rect x="0" y="480" width="14" height="130" fill="url(#bl1)" opacity="0.75"/><rect x="0" y="264" width="32" height="5" fill="#d8d0a8" opacity="0.8"/><rect x="291" y="420" width="41" height="85" fill="#140c0c"/><rect x="317" y="430" width="8" height="1" fill="#d0d0d0"/><rect x="291" y="456" width="41" height="49" fill="url(#refl)"/><rect x="291" y="468" width="41" height="1" fill="#8a7a88" opacity="0.5"/><rect x="291" y="476" width="41" height="1" fill="#7a6a78" opacity="0.4"/><rect x="728" y="420" width="25" height="85" fill="#140e0e"/><rect x="746" y="452" width="7" height="20" fill="#8a5a38" opacity="0.35"/><rect x="291" y="505" width="41" height="111" fill="#2a1a1e"/><rect x="291" y="505" width="41" height="9" fill="#0e0808"/><ellipse cx="300" cy="530" rx="10" ry="14" fill="#5a4858" opacity="0.2"/><g filter="url(#sb)"><rect x="295" y="591" width="7" height="1.9" fill="#5a3a3a" opacity="0.34"/><rect x="321" y="526" width="5" height="1.3" fill="#6a4038" opacity="0.34"/><rect x="323" y="612" width="8" height="1.1" fill="#6a4038" opacity="0.67"/><rect x="325" y="528" width="8" height="1.5" fill="#4a3038" opacity="0.35"/><rect x="325" y="524" width="6" height="1.1" fill="#4a3038" opacity="0.34"/><rect x="295" y="520" width="5" height="1.6" fill="#6a4038" opacity="0.30"/><rect x="331" y="602" width="4" height="1.8" fill="#4a3038" opacity="0.72"/><rect x="330" y="540" width="7" height="1.2" fill="#5a3a3a" opacity="0.42"/><rect x="291" y="529" width="10" height="1.7" fill="#6a4038" opacity="0.30"/><rect x="294" y="533" width="8" height="1.2" fill="#6a4038" opacity="0.31"/><rect x="295" y="549" width="5" height="2.0" fill="#6a4038" opacity="0.32"/><rect x="298" y="535" width="7" height="1.5" fill="#6a4038" opacity="0.32"/><rect x="296" y="537" width="9" height="1.1" fill="#6a4038" opacity="0.31"/><rect x="303" y="589" width="6" height="1.4" fill="#4a3038" opacity="0.41"/><rect x="331" y="574" width="5" height="1.6" fill="#6a4038" opacity="0.58"/><rect x="306" y="559" width="8" height="2.0" fill="#4a3038" opacity="0.38"/><rect x="298" y="574" width="6" height="1.5" fill="#5a3a3a" opacity="0.35"/><rect x="292" y="566" width="6" height="1.6" fill="#4a3038" opacity="0.31"/><rect x="328" y="524" width="4" height="1.1" fill="#6a4038" opacity="0.34"/><rect x="313" y="538" width="10" height="1.5" fill="#8a5040" opacity="0.36"/><rect x="305" y="529" width="6" height="1.7" fill="#8a5040" opacity="0.32"/><rect x="301" y="522" width="9" height="1.0" fill="#8a5040" opacity="0.31"/><rect x="305" y="560" width="9" height="1.2" fill="#8a5040" opacity="0.37"/><rect x="300" y="524" width="7" height="1.8" fill="#6a4038" opacity="0.31"/><rect x="300" y="541" width="3" height="1.6" fill="#4a3038" opacity="0.33"/><rect x="329" y="571" width="11" height="1.5" fill="#8a5040" opacity="0.56"/><rect x="303" y="562" width="11" height="1.5" fill="#6a4038" opacity="0.37"/><rect x="304" y="612" width="4" height="1.0" fill="#4a3038" opacity="0.45"/><rect x="306" y="540" width="4" height="1.4" fill="#8a5040" opacity="0.34"/><rect x="320" y="575" width="9" height="1.5" fill="#6a4038" opacity="0.51"/><rect x="307" y="568" width="3" height="1.1" fill="#8a5040" opacity="0.40"/><rect x="296" y="606" width="8" height="1.2" fill="#6a4038" opacity="0.36"/><rect x="302" y="612" width="7" height="1.7" fill="#5a3a3a" opacity="0.43"/><rect x="326" y="586" width="3" height="1.1" fill="#4a3038" opacity="0.60"/><rect x="327" y="526" width="8" height="1.2" fill="#8a5040" opacity="0.35"/><rect x="328" y="606" width="9" height="1.9" fill="#5a3a3a" opacity="0.71"/><rect x="328" y="593" width="4" height="1.9" fill="#4a3038" opacity="0.65"/><rect x="329" y="565" width="4" height="1.7" fill="#5a3a3a" opacity="0.53"/><rect x="323" y="599" width="10" height="1.1" fill="#8a5040" opacity="0.63"/><rect x="301" y="545" width="5" height="1.6" fill="#4a3038" opacity="0.34"/><rect x="304" y="569" width="4" height="1.3" fill="#8a5040" opacity="0.38"/><rect x="318" y="522" width="5" height="2.0" fill="#8a5040" opacity="0.32"/><rect x="327" y="579" width="4" height="1.1" fill="#5a3a3a" opacity="0.58"/><rect x="327" y="593" width="3" height="1.7" fill="#4a3038" opacity="0.64"/><rect x="311" y="582" width="8" height="1.2" fill="#4a3038" opacity="0.46"/><rect x="296" y="546" width="11" height="1.6" fill="#4a3038" opacity="0.32"/><rect x="311" y="554" width="8" height="1.0" fill="#8a5040" opacity="0.39"/><rect x="307" y="541" width="8" height="1.1" fill="#8a5040" opacity="0.35"/><rect x="297" y="601" width="6" height="1.8" fill="#5a3a3a" opacity="0.37"/><rect x="316" y="590" width="5" height="1.8" fill="#5a3a3a" opacity="0.52"/><rect x="301" y="556" width="6" height="1.1" fill="#8a5040" opacity="0.35"/><rect x="311" y="570" width="11" height="1.1" fill="#8a5040" opacity="0.43"/><rect x="294" y="530" width="4" height="1.7" fill="#5a3a3a" opacity="0.31"/><rect x="324" y="521" width="3" height="1.6" fill="#8a5040" opacity="0.32"/><rect x="302" y="567" width="4" height="1.4" fill="#6a4038" opacity="0.37"/><rect x="313" y="527" width="7" height="1.2" fill="#8a5040" opacity="0.33"/><rect x="326" y="602" width="9" height="1.6" fill="#5a3a3a" opacity="0.67"/><rect x="294" y="611" width="9" height="1.4" fill="#4a3038" opacity="0.33"/><rect x="304" y="552" width="10" height="1.4" fill="#8a5040" opacity="0.36"/><rect x="300" y="594" width="8" height="1.7" fill="#6a4038" opacity="0.38"/><rect x="311" y="534" width="9" height="1.5" fill="#6a4038" opacity="0.35"/><rect x="299" y="579" width="4" height="1.6" fill="#5a3a3a" opacity="0.36"/><rect x="296" y="602" width="6" height="1.9" fill="#5a3a3a" opacity="0.36"/><rect x="330" y="587" width="8" height="1.8" fill="#5a3a3a" opacity="0.64"/><rect x="327" y="522" width="7" height="1.7" fill="#5a3a3a" opacity="0.33"/><rect x="303" y="615" width="4" height="1.1" fill="#8a5040" opacity="0.44"/><rect x="321" y="573" width="5" height="2.0" fill="#8a5040" opacity="0.51"/><rect x="326" y="569" width="9" height="1.4" fill="#4a3038" opacity="0.53"/><rect x="325" y="571" width="9" height="1.7" fill="#5a3a3a" opacity="0.53"/><rect x="299" y="568" width="4" height="1.4" fill="#6a4038" opacity="0.35"/><rect x="293" y="609" width="4" height="1.9" fill="#6a4038" opacity="0.33"/><rect x="331" y="571" width="11" height="1.5" fill="#6a4038" opacity="0.57"/><rect x="322" y="559" width="7" height="1.4" fill="#8a5040" opacity="0.46"/><rect x="294" y="567" width="9" height="1.8" fill="#8a5040" opacity="0.32"/><rect x="299" y="550" width="6" height="1.8" fill="#5a3a3a" opacity="0.33"/><rect x="329" y="545" width="7" height="1.3" fill="#6a4038" opacity="0.44"/><rect x="303" y="583" width="7" height="1.7" fill="#8a5040" opacity="0.39"/><rect x="300" y="574" width="6" height="1.6" fill="#4a3038" opacity="0.37"/><rect x="308" y="545" width="7" height="1.3" fill="#5a3a3a" opacity="0.36"/><rect x="327" y="591" width="5" height="1.8" fill="#5a3a3a" opacity="0.63"/><rect x="325" y="562" width="9" height="1.7" fill="#8a5040" opacity="0.49"/><rect x="294" y="522" width="7" height="1.9" fill="#4a3038" opacity="0.30"/><rect x="321" y="601" width="7" height="1.9" fill="#6a4038" opacity="0.61"/><rect x="317" y="524" width="10" height="1.9" fill="#8a5040" opacity="0.33"/><rect x="304" y="615" width="12" height="1.0" fill="#5a3a3a" opacity="0.45"/><rect x="294" y="604" width="5" height="1.4" fill="#4a3038" opacity="0.33"/><rect x="330" y="600" width="3" height="1.1" fill="#8a5040" opacity="0.70"/><rect x="327" y="577" width="9" height="1.4" fill="#4a3038" opacity="0.57"/><rect x="315" y="582" width="7" height="1.2" fill="#8a5040" opacity="0.49"/><rect x="327" y="573" width="11" height="1.3" fill="#8a5040" opacity="0.55"/><rect x="729" y="498" width="11" height="1.2" fill="#7a4a38" opacity="0.27"/><rect x="729" y="519" width="11" height="1.8" fill="#4a3030" opacity="0.28"/><rect x="737" y="607" width="5" height="1.0" fill="#4a3030" opacity="0.42"/><rect x="744" y="488" width="4" height="1.7" fill="#3a2a2a" opacity="0.54"/><rect x="737" y="608" width="6" height="2.0" fill="#5a3a30" opacity="0.41"/><rect x="739" y="605" width="3" height="1.9" fill="#7a4a38" opacity="0.44"/><rect x="729" y="713" width="10" height="1.7" fill="#3a2a2a" opacity="0.27"/><rect x="751" y="493" width="9" height="1.5" fill="#4a3030" opacity="0.67"/><rect x="746" y="520" width="8" height="1.0" fill="#5a3a30" opacity="0.58"/><rect x="749" y="535" width="12" height="1.1" fill="#3a2a2a" opacity="0.62"/><rect x="741" y="483" width="12" height="1.5" fill="#5a3a30" opacity="0.48"/><rect x="733" y="715" width="4" height="1.1" fill="#5a3a30" opacity="0.35"/><rect x="743" y="595" width="3" height="1.5" fill="#3a2a2a" opacity="0.51"/><rect x="745" y="633" width="9" height="2.0" fill="#7a4a38" opacity="0.56"/><rect x="740" y="491" width="6" height="1.5" fill="#4a3030" opacity="0.46"/><rect x="735" y="705" width="12" height="1.9" fill="#7a4a38" opacity="0.37"/><rect x="741" y="484" width="7" height="1.6" fill="#3a2a2a" opacity="0.49"/><rect x="751" y="552" width="7" height="1.8" fill="#4a3030" opacity="0.67"/><rect x="729" y="483" width="7" height="1.1" fill="#4a3030" opacity="0.26"/><rect x="730" y="699" width="5" height="1.1" fill="#3a2a2a" opacity="0.29"/><rect x="748" y="486" width="6" height="1.7" fill="#5a3a30" opacity="0.61"/><rect x="741" y="595" width="7" height="1.7" fill="#5a3a30" opacity="0.49"/><rect x="747" y="590" width="9" height="1.1" fill="#3a2a2a" opacity="0.60"/><rect x="737" y="504" width="4" height="1.5" fill="#4a3030" opacity="0.41"/><rect x="737" y="596" width="5" height="1.1" fill="#3a2a2a" opacity="0.41"/><rect x="733" y="563" width="8" height="1.7" fill="#3a2a2a" opacity="0.33"/><rect x="738" y="686" width="7" height="1.0" fill="#3a2a2a" opacity="0.44"/><rect x="734" y="600" width="9" height="1.4" fill="#3a2a2a" opacity="0.35"/><rect x="747" y="533" width="6" height="1.8" fill="#7a4a38" opacity="0.60"/><rect x="752" y="531" width="4" height="1.2" fill="#4a3030" opacity="0.68"/><rect x="751" y="502" width="4" height="1.7" fill="#7a4a38" opacity="0.67"/><rect x="732" y="556" width="11" height="1.4" fill="#4a3030" opacity="0.33"/><rect x="749" y="507" width="9" height="1.0" fill="#5a3a30" opacity="0.63"/><rect x="748" y="590" width="8" height="1.9" fill="#4a3030" opacity="0.61"/><rect x="751" y="631" width="5" height="1.2" fill="#4a3030" opacity="0.66"/><rect x="730" y="583" width="6" height="1.5" fill="#5a3a30" opacity="0.28"/><rect x="747" y="549" width="9" height="1.4" fill="#3a2a2a" opacity="0.59"/><rect x="730" y="656" width="4" height="1.5" fill="#4a3030" opacity="0.28"/><rect x="728" y="661" width="10" height="1.6" fill="#5a3a30" opacity="0.26"/><rect x="748" y="512" width="4" height="1.7" fill="#5a3a30" opacity="0.61"/><rect x="732" y="667" width="3" height="1.1" fill="#7a4a38" opacity="0.32"/><rect x="736" y="605" width="4" height="1.4" fill="#5a3a30" opacity="0.39"/><rect x="740" y="719" width="11" height="1.2" fill="#5a3a30" opacity="0.47"/><rect x="750" y="620" width="8" height="1.2" fill="#7a4a38" opacity="0.65"/><rect x="731" y="659" width="6" height="1.0" fill="#5a3a30" opacity="0.31"/><rect x="747" y="622" width="10" height="1.1" fill="#7a4a38" opacity="0.60"/><rect x="741" y="637" width="5" height="1.7" fill="#3a2a2a" opacity="0.48"/><rect x="743" y="717" width="5" height="1.2" fill="#5a3a30" opacity="0.52"/><rect x="732" y="682" width="5" height="1.1" fill="#5a3a30" opacity="0.32"/><rect x="740" y="598" width="10" height="1.1" fill="#4a3030" opacity="0.46"/><rect x="734" y="626" width="5" height="1.2" fill="#4a3030" opacity="0.37"/><rect x="740" y="634" width="10" height="1.0" fill="#7a4a38" opacity="0.46"/><rect x="735" y="667" width="12" height="1.7" fill="#5a3a30" opacity="0.37"/><rect x="746" y="718" width="7" height="1.8" fill="#3a2a2a" opacity="0.57"/><rect x="730" y="683" width="11" height="1.3" fill="#5a3a30" opacity="0.28"/><rect x="750" y="699" width="4" height="1.8" fill="#4a3030" opacity="0.64"/><rect x="729" y="614" width="5" height="1.4" fill="#7a4a38" opacity="0.26"/><rect x="742" y="662" width="9" height="1.4" fill="#3a2a2a" opacity="0.51"/><rect x="741" y="614" width="12" height="1.5" fill="#4a3030" opacity="0.48"/><rect x="749" y="653" width="9" height="1.5" fill="#4a3030" opacity="0.63"/><rect x="745" y="482" width="7" height="2.0" fill="#4a3030" opacity="0.55"/><rect x="737" y="495" width="6" height="1.5" fill="#4a3030" opacity="0.41"/><rect x="729" y="678" width="10" height="1.9" fill="#7a4a38" opacity="0.26"/><rect x="741" y="588" width="8" height="1.7" fill="#7a4a38" opacity="0.48"/><rect x="745" y="507" width="3" height="1.3" fill="#5a3a30" opacity="0.56"/><rect x="730" y="680" width="8" height="1.6" fill="#4a3030" opacity="0.29"/><rect x="747" y="656" width="11" height="1.9" fill="#5a3a30" opacity="0.59"/><rect x="748" y="624" width="9" height="1.3" fill="#4a3030" opacity="0.60"/><rect x="750" y="680" width="7" height="1.2" fill="#5a3a30" opacity="0.64"/><rect x="734" y="598" width="3" height="1.0" fill="#3a2a2a" opacity="0.36"/><rect x="745" y="546" width="10" height="1.3" fill="#7a4a38" opacity="0.55"/><rect x="747" y="623" width="3" height="1.5" fill="#7a4a38" opacity="0.59"/><rect x="735" y="728" width="9" height="1.9" fill="#5a3a30" opacity="0.38"/><rect x="733" y="726" width="10" height="1.5" fill="#5a3a30" opacity="0.33"/><rect x="735" y="572" width="10" height="1.4" fill="#5a3a30" opacity="0.38"/><rect x="731" y="698" width="8" height="2.0" fill="#7a4a38" opacity="0.30"/><rect x="739" y="613" width="8" height="1.9" fill="#7a4a38" opacity="0.46"/><rect x="735" y="703" width="9" height="1.5" fill="#5a3a30" opacity="0.38"/><rect x="751" y="511" width="6" height="1.9" fill="#7a4a38" opacity="0.66"/><rect x="753" y="555" width="4" height="1.2" fill="#5a3a30" opacity="0.70"/><rect x="743" y="688" width="8" height="1.8" fill="#5a3a30" opacity="0.52"/><rect x="741" y="709" width="4" height="1.7" fill="#5a3a30" opacity="0.48"/><rect x="743" y="602" width="5" height="1.6" fill="#5a3a30" opacity="0.52"/><rect x="749" y="500" width="3" height="2.0" fill="#4a3030" opacity="0.62"/><rect x="731" y="681" width="9" height="1.6" fill="#3a2a2a" opacity="0.31"/><rect x="744" y="516" width="9" height="1.7" fill="#4a3030" opacity="0.54"/><rect x="738" y="719" width="6" height="2.0" fill="#4a3030" opacity="0.43"/><rect x="730" y="700" width="10" height="1.5" fill="#3a2a2a" opacity="0.28"/><rect x="747" y="617" width="5" height="1.2" fill="#4a3030" opacity="0.58"/><rect x="739" y="577" width="9" height="1.8" fill="#4a3030" opacity="0.46"/><rect x="733" y="606" width="8" height="1.6" fill="#3a2a2a" opacity="0.34"/><rect x="751" y="717" width="7" height="1.0" fill="#5a3a30" opacity="0.66"/><rect x="748" y="649" width="4" height="1.3" fill="#7a4a38" opacity="0.60"/><rect x="735" y="533" width="12" height="1.5" fill="#4a3030" opacity="0.38"/><rect x="746" y="572" width="9" height="1.9" fill="#4a3030" opacity="0.58"/><rect x="747" y="553" width="10" height="1.5" fill="#5a3a30" opacity="0.60"/><rect x="748" y="559" width="4" height="1.8" fill="#3a2a2a" opacity="0.61"/><rect x="739" y="570" width="10" height="1.4" fill="#3a2a2a" opacity="0.45"/><rect x="751" y="670" width="5" height="1.4" fill="#5a3a30" opacity="0.66"/><rect x="729" y="559" width="11" height="1.7" fill="#3a2a2a" opacity="0.28"/><rect x="731" y="642" width="7" height="1.2" fill="#5a3a30" opacity="0.31"/><rect x="736" y="486" width="11" height="1.8" fill="#7a4a38" opacity="0.40"/><rect x="750" y="542" width="7" height="1.0" fill="#5a3a30" opacity="0.65"/><rect x="742" y="493" width="6" height="1.4" fill="#4a3030" opacity="0.50"/><rect x="743" y="640" width="10" height="1.2" fill="#4a3030" opacity="0.53"/><rect x="732" y="540" width="3" height="1.6" fill="#5a3a30" opacity="0.33"/><rect x="733" y="691" width="3" height="2.0" fill="#5a3a30" opacity="0.35"/><rect x="735" y="721" width="4" height="1.1" fill="#3a2a2a" opacity="0.38"/><rect x="744" y="555" width="11" height="1.0" fill="#7a4a38" opacity="0.53"/><rect x="748" y="563" width="3" height="1.1" fill="#4a3030" opacity="0.61"/><rect x="741" y="669" width="5" height="1.3" fill="#4a3030" opacity="0.48"/><rect x="748" y="654" width="4" height="1.1" fill="#5a3a30" opacity="0.61"/><rect x="743" y="661" width="4" height="1.5" fill="#5a3a30" opacity="0.52"/><rect x="733" y="491" width="9" height="1.7" fill="#5a3a30" opacity="0.34"/><rect x="732" y="678" width="8" height="1.9" fill="#4a3030" opacity="0.32"/><rect x="744" y="710" width="9" height="1.5" fill="#3a2a2a" opacity="0.54"/><rect x="752" y="527" width="7" height="1.2" fill="#3a2a2a" opacity="0.68"/><rect x="729" y="693" width="10" height="1.2" fill="#3a2a2a" opacity="0.26"/><rect x="734" y="607" width="4" height="1.2" fill="#5a3a30" opacity="0.35"/><rect x="748" y="576" width="5" height="2.0" fill="#3a2a2a" opacity="0.60"/></g><g filter="url(#lb)"><rect x="291" y="258" width="41" height="1" fill="#6a6068"/><rect x="313" y="268" width="19" height="17" fill="#4a4048" opacity="0.8"/><rect x="293" y="270" width="3" height="2" fill="#f0f0f0"/><rect x="298" y="271" width="4" height="2" fill="#e0e0e0"/><rect x="292" y="276" width="10" height="2" fill="#d8d0c8"/><rect x="296" y="281" width="7" height="2" fill="#ffffff"/><rect x="309" y="266" width="2" height="2" fill="#c0c0c0"/><rect x="291" y="285" width="41" height="108" fill="#1e1818" opacity="0.7"/><rect x="312" y="289" width="18" height="1" fill="#d0d0d0"/><rect x="306" y="293" width="12" height="1" fill="#c0c0c0"/><rect x="318" y="298" width="2" height="5" fill="#f0f0f0"/><rect x="321" y="298" width="1" height="4" fill="#e0e0e0"/><rect x="297" y="363" width="21" height="2" fill="#e8e8e8" opacity="0.8"/><rect x="291" y="366" width="18" height="13" fill="#2a4a90"/><rect x="292" y="368" width="15" height="9" fill="#f0f0f8"/><rect x="318" y="321" width="1" height="1" fill="#c8c8d0"/><rect x="308" y="355" width="1" height="2" fill="#c8c8d0"/><rect x="324" y="309" width="3" height="2" fill="#c8c8d0"/><rect x="299" y="306" width="3" height="1" fill="#d8d0c8"/><rect x="332" y="319" width="2" height="1" fill="#f0e0c0"/><rect x="323" y="301" width="2" height="2" fill="#ffffff"/><rect x="303" y="345" width="1" height="1" fill="#ffffff"/><rect x="317" y="347" width="3" height="1" fill="#a0a0b0"/><rect x="324" y="311" width="2" height="1" fill="#807888"/><rect x="329" y="335" width="2" height="1" fill="#e8e8f0"/><rect x="294" y="304" width="1" height="1" fill="#c8c8d0"/><rect x="296" y="319" width="3" height="1" fill="#a0a0b0"/><rect x="292" y="307" width="1" height="1" fill="#e8e8f0"/><rect x="295" y="330" width="2" height="1" fill="#c8c8d0"/><rect x="294" y="337" width="3" height="1" fill="#ffffff"/><rect x="296" y="333" width="2" height="1" fill="#e8e8f0"/><rect x="316" y="316" width="2" height="1" fill="#ffffff"/><rect x="293" y="324" width="2" height="1" fill="#ffffff"/><rect x="307" y="331" width="2" height="1" fill="#e8e8f0"/><rect x="307" y="344" width="1" height="1" fill="#a0a0b0"/><rect x="292" y="312" width="1" height="1" fill="#807888"/><rect x="329" y="307" width="1" height="1" fill="#807888"/><rect x="330" y="338" width="1" height="2" fill="#d8d0c8"/><rect x="326" y="302" width="1" height="2" fill="#807888"/><rect x="323" y="309" width="1" height="1" fill="#ffffff"/><rect x="316" y="343" width="1" height="2" fill="#807888"/><rect x="331" y="316" width="2" height="2" fill="#d8d0c8"/><rect x="330" y="359" width="3" height="1" fill="#a0a0b0"/><rect x="294" y="317" width="1" height="1" fill="#807888"/><rect x="314" y="330" width="2" height="1" fill="#a0a0b0"/><rect x="291" y="355" width="1" height="1" fill="#ffffff"/><rect x="317" y="321" width="2" height="2" fill="#c8c8d0"/><rect x="331" y="362" width="2" height="1" fill="#c8c8d0"/><rect x="313" y="335" width="1" height="1" fill="#807888"/><rect x="322" y="357" width="3" height="1" fill="#e8e8f0"/><rect x="314" y="308" width="2" height="2" fill="#e8e8f0"/><rect x="295" y="357" width="2" height="2" fill="#c8c8d0"/><rect x="326" y="322" width="3" height="1" fill="#a0a0b0"/><rect x="315" y="315" width="2" height="1" fill="#ffffff"/><rect x="311" y="326" width="1" height="2" fill="#807888"/><rect x="308" y="386" width="1" height="1" fill="#c8c8d0"/><rect x="324" y="390" width="2" height="1" fill="#d8d0c8"/><rect x="331" y="391" width="2" height="1" fill="#e8e8f0"/><rect x="319" y="381" width="3" height="2" fill="#ffffff"/><rect x="742" y="272" width="2" height="2" fill="#c8c8d0"/><rect x="743" y="371" width="2" height="1" fill="#f0e0c0"/><rect x="740" y="378" width="1" height="1" fill="#807888"/><rect x="736" y="370" width="1" height="1" fill="#ffffff"/><rect x="736" y="361" width="1" height="1" fill="#a0a0b0"/><rect x="748" y="270" width="2" height="1" fill="#a0a0b0"/><rect x="733" y="315" width="2" height="2" fill="#c8c8d0"/><rect x="730" y="279" width="2" height="1" fill="#c8c8d0"/><rect x="752" y="288" width="2" height="1" fill="#f0e0c0"/><rect x="744" y="332" width="3" height="1" fill="#e8e8f0"/><rect x="736" y="340" width="1" height="1" fill="#d8d0c8"/><rect x="731" y="334" width="1" height="1" fill="#e8e8f0"/><rect x="749" y="340" width="1" height="2" fill="#d8d0c8"/><rect x="752" y="356" width="2" height="1" fill="#ffffff"/><rect x="735" y="303" width="3" height="2" fill="#e8e8f0"/><rect x="745" y="372" width="3" height="1" fill="#e8e8f0"/><rect x="743" y="289" width="1" height="2" fill="#f0e0c0"/><rect x="739" y="278" width="3" height="1" fill="#f0e0c0"/><rect x="739" y="303" width="2" height="2" fill="#ffffff"/><rect x="734" y="345" width="1" height="1" fill="#807888"/><rect x="747" y="365" width="2" height="2" fill="#a0a0b0"/><rect x="733" y="284" width="2" height="1" fill="#807888"/><rect x="740" y="271" width="2" height="2" fill="#c8c8d0"/><rect x="740" y="279" width="2" height="2" fill="#ffffff"/><rect x="744" y="281" width="3" height="1" fill="#ffffff"/><rect x="730" y="336" width="1" height="1" fill="#d8d0c8"/><rect x="728" y="279" width="1" height="1" fill="#f0e0c0"/><rect x="741" y="290" width="3" height="1" fill="#e8e8f0"/><rect x="16" y="341" width="3" height="1" fill="#ffffff"/><rect x="21" y="345" width="3" height="1" fill="#c8c8d0"/><rect x="22" y="411" width="1" height="1" fill="#ffffff"/><rect x="10" y="412" width="2" height="1" fill="#a0a0b0"/><rect x="25" y="271" width="3" height="2" fill="#e8e8f0"/><rect x="23" y="318" width="3" height="2" fill="#807888"/><rect x="12" y="373" width="1" height="1" fill="#c8c8d0"/><rect x="17" y="341" width="2" height="1" fill="#ffffff"/><rect x="13" y="368" width="1" height="1" fill="#a0a0b0"/><rect x="16" y="381" width="2" height="1" fill="#f0e0c0"/><rect x="12" y="355" width="1" height="1" fill="#a0a0b0"/><rect x="19" y="337" width="1" height="1" fill="#a0a0b0"/><rect x="22" y="416" width="1" height="1" fill="#a0a0b0"/><rect x="16" y="306" width="3" height="1" fill="#807888"/><rect x="17" y="384" width="3" height="2" fill="#ffffff"/><rect x="13" y="377" width="3" height="1" fill="#ffffff"/><rect x="11" y="401" width="1" height="1" fill="#e8e8f0"/><rect x="16" y="289" width="3" height="1" fill="#d8d0c8"/><rect x="32" y="280" width="2" height="2" fill="#a0a0b0"/><rect x="20" y="271" width="2" height="1" fill="#f0e0c0"/><rect x="15" y="273" width="1" height="1" fill="#c8c8d0"/><rect x="31" y="283" width="1" height="1" fill="#c8c8d0"/><rect x="16" y="399" width="3" height="2" fill="#ffffff"/><rect x="22" y="265" width="2" height="1" fill="#d8d0c8"/><rect x="4" y="332" width="2" height="1" fill="#ffffff"/><rect x="13" y="367" width="1" height="1" fill="#c8c8d0"/><rect x="28" y="406" width="1" height="1" fill="#c8c8d0"/><rect x="29" y="376" width="1" height="2" fill="#f0e0c0"/><rect x="1" y="382" width="2" height="1" fill="#e8e8f0"/><rect x="9" y="277" width="3" height="1" fill="#807888"/><rect x="19" y="298" width="2" height="1" fill="#a0a0b0"/><rect x="6" y="379" width="3" height="1" fill="#d8d0c8"/><rect x="10" y="380" width="2" height="1" fill="#ffffff"/><rect x="13" y="331" width="2" height="1" fill="#c8c8d0"/><rect x="29" y="417" width="3" height="1" fill="#c8c8d0"/><rect x="0" y="348" width="2" height="1" fill="#c8c8d0"/><rect x="32" y="312" width="2" height="1" fill="#807888"/><rect x="25" y="263" width="2" height="1" fill="#ffffff"/><rect x="5" y="355" width="2" height="2" fill="#c8c8d0"/><rect x="26" y="343" width="2" height="2" fill="#d8d0c8"/><rect x="22" y="408" width="2" height="1" fill="#a0a0b0"/><rect x="12" y="372" width="2" height="1" fill="#ffffff"/><rect x="12" y="319" width="2" height="2" fill="#e8e8f0"/><rect x="24" y="308" width="3" height="1" fill="#a0a0b0"/><rect x="32" y="380" width="1" height="1" fill="#ffffff"/><rect x="20" y="294" width="3" height="1" fill="#a0a0b0"/><rect x="19" y="337" width="2" height="1" fill="#d8d0c8"/><rect x="14" y="341" width="1" height="2" fill="#c8c8d0"/><rect x="8" y="269" width="3" height="2" fill="#807888"/><rect x="10" y="372" width="2" height="1" fill="#ffffff"/><rect x="9" y="263" width="1" height="2" fill="#ffffff"/><rect x="21" y="397" width="2" height="1" fill="#ffffff"/><rect x="12" y="380" width="1" height="1" fill="#ffffff"/><rect x="9" y="412" width="1" height="1" fill="#a0a0b0"/><rect x="27" y="272" width="1" height="2" fill="#f0e0c0"/><rect x="30" y="284" width="2" height="1" fill="#a0a0b0"/><rect x="24" y="282" width="3" height="2" fill="#d8d0c8"/><rect x="23" y="369" width="1" height="1" fill="#f0e0c0"/><rect x="6" y="350" width="2" height="2" fill="#f0e0c0"/><rect x="19" y="423" width="1" height="2" fill="#ffffff"/><rect x="6" y="357" width="1" height="2" fill="#ffffff"/><rect x="22" y="351" width="2" height="1" fill="#ffffff"/><rect x="20" y="328" width="1" height="1" fill="#c8c8d0"/><rect x="0" y="364" width="2" height="2" fill="#c8c8d0"/><rect x="15" y="297" width="1" height="1" fill="#ffffff"/><rect x="1" y="279" width="2" height="1" fill="#c8c8d0"/><rect x="14" y="272" width="1" height="2" fill="#807888"/><rect x="11" y="371" width="1" height="1" fill="#e8e8f0"/><rect x="14" y="343" width="1" height="1" fill="#e8e8f0"/><rect x="10" y="317" width="2" height="1" fill="#ffffff"/><rect x="5" y="329" width="1" height="1" fill="#807888"/><rect x="28" y="268" width="2" height="2" fill="#807888"/><rect x="16" y="369" width="2" height="1" fill="#f0e0c0"/><rect x="29" y="354" width="3" height="1" fill="#807888"/><rect x="11" y="404" width="1" height="1" fill="#807888"/><rect x="29" y="380" width="2" height="1" fill="#f0e0c0"/><rect x="4" y="359" width="1" height="1" fill="#d8d0c8"/><rect x="21" y="301" width="1" height="1" fill="#a0a0b0"/><rect x="18" y="413" width="2" height="1" fill="#d8d0c8"/><rect x="23" y="381" width="2" height="1" fill="#ffffff"/><rect x="17" y="387" width="2" height="2" fill="#d8d0c8"/><rect x="19" y="293" width="3" height="1" fill="#d8d0c8"/><rect x="24" y="305" width="2" height="1" fill="#e8e8f0"/><rect x="31" y="417" width="1" height="1" fill="#807888"/><rect x="29" y="417" width="1" height="1" fill="#ffffff"/><rect x="31" y="418" width="2" height="1" fill="#ffffff"/><rect x="28" y="314" width="3" height="2" fill="#ffffff"/><rect x="14" y="395" width="1" height="2" fill="#f0e0c0"/><rect x="14" y="271" width="3" height="1" fill="#a0a0b0"/><rect x="26" y="335" width="1" height="1" fill="#ffffff"/><rect x="18" y="383" width="1" height="2" fill="#e8e8f0"/><rect x="2" y="412" width="2" height="1" fill="#e8e8f0"/><rect x="3" y="402" width="3" height="1" fill="#d8d0c8"/><rect x="11" y="345" width="3" height="1" fill="#807888"/><rect x="3" y="271" width="1" height="1" fill="#c8c8d0"/><rect x="32" y="394" width="1" height="2" fill="#807888"/><rect x="20" y="413" width="1" height="1" fill="#d8d0c8"/><rect x="31" y="422" width="3" height="2" fill="#ffffff"/><rect x="29" y="400" width="2" height="1" fill="#d8d0c8"/><rect x="27" y="324" width="2" height="1" fill="#e8e8f0"/><rect x="8" y="346" width="1" height="1" fill="#a0a0b0"/><rect x="11" y="421" width="1" height="1" fill="#ffffff"/><rect x="24" y="308" width="1" height="1" fill="#f0e0c0"/><rect x="19" y="365" width="2" height="1" fill="#c8c8d0"/><rect x="19" y="308" width="2" height="1" fill="#807888"/><rect x="18" y="416" width="2" height="2" fill="#ffffff"/><rect x="23" y="369" width="1" height="2" fill="#ffffff"/><rect x="24" y="294" width="1" height="1" fill="#ffffff"/><rect x="10" y="399" width="2" height="1" fill="#ffffff"/><rect x="7" y="388" width="2" height="1" fill="#c8c8d0"/><rect x="1361" y="0" width="5" height="728" fill="#1a1416"/><rect x="1366" y="323" width="3" height="1" fill="#807888"/><rect x="1361" y="327" width="2" height="2" fill="#e8e8f0"/><rect x="1364" y="312" width="1" height="2" fill="#f0e0c0"/><rect x="1362" y="325" width="1" height="1" fill="#c8c8d0"/><rect x="1365" y="248" width="3" height="1" fill="#ffffff"/><rect x="1363" y="285" width="1" height="1" fill="#d8d0c8"/><rect x="1364" y="325" width="1" height="2" fill="#e8e8f0"/><rect x="1366" y="243" width="2" height="1" fill="#c8c8d0"/><rect x="1364" y="271" width="2" height="1" fill="#ffffff"/><rect x="1365" y="307" width="2" height="2" fill="#ffffff"/><rect x="1366" y="323" width="3" height="1" fill="#e8e8f0"/><rect x="1365" y="305" width="2" height="1" fill="#d8d0c8"/><rect x="1364" y="255" width="2" height="1" fill="#ffffff"/><rect x="1364" y="248" width="2" height="1" fill="#c8c8d0"/><rect x="1363" y="255" width="2" height="1" fill="#d8d0c8"/><rect x="1364" y="270" width="1" height="1" fill="#ffffff"/><rect x="1366" y="250" width="3" height="2" fill="#a0a0b0"/><rect x="1362" y="296" width="3" height="1" fill="#c8c8d0"/><rect x="1364" y="276" width="3" height="2" fill="#a0a0b0"/><rect x="1365" y="275" width="1" height="2" fill="#d8d0c8"/><rect x="1364" y="321" width="1" height="1" fill="#d8d0c8"/><rect x="1365" y="276" width="2" height="1" fill="#ffffff"/><rect x="1361" y="315" width="2" height="1" fill="#807888"/><rect x="1362" y="263" width="2" height="2" fill="#a0a0b0"/><rect x="1365" y="330" width="3" height="1" fill="#c8c8d0"/><rect x="1361" y="420" width="5" height="25" fill="#8a98a8" opacity="0.6"/></g><ellipse cx="316" cy="400" rx="18" ry="12" fill="url(#glw)" opacity="0.5"/><rect x="291" y="379" width="41" height="43" fill="#2a1c18"/><rect x="300" y="393" width="32" height="15" fill="#f0dc98"/><rect x="308" y="399" width="24" height="2" fill="#b82818"/><rect x="302" y="405" width="10" height="2" fill="#b82818"/><rect x="320" y="405" width="12" height="2" fill="#b82818"/><ellipse cx="318" cy="405" rx="3" ry="4" fill="#fffcf0" opacity="0.9"/><ellipse cx="318" cy="415" rx="7" ry="3" fill="#807070" opacity="0.6"/><rect x="313" y="412" width="4" height="2" fill="#f0f0f0"/><rect x="320" y="416" width="5" height="2" fill="#ffffff"/><rect x="729" y="380" width="24" height="15" fill="#8a3a28"/><rect x="733" y="384" width="3" height="3" fill="#f0e0d0"/><rect x="745" y="385" width="3" height="3" fill="#f0e0d0"/><rect x="729" y="395" width="24" height="5" fill="#e8e8e8"/><rect x="729" y="400" width="24" height="10" fill="#a8c0d0"/><rect x="729" y="403" width="24" height="1" fill="#405868"/><rect x="729" y="406" width="24" height="1" fill="#405868"/><rect x="729" y="410" width="24" height="10" fill="#4a5a40"/><rect x="732" y="412" width="4" height="2" fill="#f0f0f0"/><rect x="742" y="414" width="5" height="2" fill="#e0e0d0"/><rect x="729" y="420" width="24" height="5" fill="#0e0a0a"/><rect x="729" y="425" width="24" height="2" fill="#706868"/><rect x="731" y="362" width="21" height="3" fill="#c8c0b0" opacity="0.6"/><rect x="738" y="322" width="8" height="5" fill="#e0d8d0" opacity="0.8"/><rect x="733" y="330" width="5" height="5" fill="#f0f0f0" opacity="0.8"/><rect x="0" y="398" width="32" height="27" fill="#3a1a10" opacity="0.8"/><ellipse cx="3" cy="410" rx="6" ry="8" fill="#fff0d0"/><ellipse cx="26" cy="416" rx="7" ry="5" fill="#e0f0d0" opacity="0.9"/><ellipse cx="15" cy="405" rx="4" ry="3" fill="#f0e0d0" opacity="0.8"/><rect x="0" y="425" width="10" height="16" fill="#2a5aa8"/><rect x="0" y="440" width="16" height="3" fill="#b0b8c0" opacity="0.8"/><rect x="5" y="382" width="2" height="60" fill="#8090a0" opacity="0.6"/><ellipse cx="22" cy="238" rx="14" ry="16" fill="url(#glw)" opacity="0.5"/></svg>
<svg class="a" style="left:17px;top:8px" width="15" height="42"><path d="M1 7L15 1V42L5 39Z" fill="#c8ccd0"/><path d="M1 7L15 1V4L3 9Z" fill="#e8eaec"/><path d="M3 10L15 6V40L6 37Z" fill="#dcdfe2"/><path d="M8 21C9 18 12 16 15 17V21C13 20 11 21 10.5 23Z" fill="#1a7ad8"/><path d="M5 27C5 31 7 34 11 34L10 31C8 31 7.5 29 8 27.5Z" fill="#1a7ad8"/><path d="M15 27V33L12 30Z" fill="#1a7ad8"/></svg>
<div class="dl" style="left:7px;top:59px">Recy</div>
<div class="a" style="left:0;top:150px;width:32px;height:108px;background:linear-gradient(180deg,rgba(20,14,16,0) 0%,rgba(20,14,16,0.7) 50%,rgba(20,14,16,0.2) 100%)"></div>
<div class="a" style="left:20px;top:111px;width:33px;height:44px;background:repeating-linear-gradient(45deg,#4a5056 0 2px,#5e666c 2px 3px);border-radius:3px;border:1px solid #6a7278"></div>
<svg class="a" style="left:20px;top:111px" width="13" height="44"><path d="M4 6C9 5 12 7 13 10L13 6C11 4 8 4 4 6Z" fill="#f0f0f0"/><path d="M5 16C1 22 2 30 6 34L8 33C5 29 4.5 22 7 17Z" fill="#e8e8e8"/></svg>
<svg class="a" style="left:13px;top:145px" width="13" height="13"><rect x="0.5" y="0.5" width="12" height="12" fill="#f4f4f4" stroke="#c8c8c8"/><path d="M3 11C3 7 5 5 8 5V3L11 6L8 9V7C6 7 4.5 8.5 3 11Z" fill="#2a70c8"/></svg>
<div class="dl" style="left:12px;top:165px">Aut</div><div class="dl" style="left:11px;top:178px">May</div>
<svg class="a" style="left:172px;top:114px" width="32" height="10"><path d="M0 0H22L31 10H0Z" fill="#ececec"/><path d="M22 0L23 10H31Z" fill="#d8d8d8"/><rect x="3" y="4" width="7" height="6" fill="#909090"/><rect x="12" y="4" width="7" height="6" fill="#909090"/></svg><div class="a" style="left:88px;top:123px;width:48px;height:1px;background:#e8e8e8"></div>
<svg class="a" style="left:0;top:215px" width="32" height="60"><defs><radialGradient id="og" cx="0.5" cy="0.5" r="0.5"><stop offset="0" stop-color="#c07040" stop-opacity="0.8"/><stop offset="1" stop-color="#c07040" stop-opacity="0"/></radialGradient></defs><ellipse cx="12" cy="34" rx="12" ry="10" fill="url(#og)"/><path d="M4 48L10 36M8 48L13 37M12 48L15 38M16 48L18 39" stroke="#e0e0e0" stroke-width="1.2"/><rect x="0" y="49" width="32" height="6" fill="#d8d0b0" opacity="0.85"/><path d="M13 13L22 7L32 7L32 47L13 41Z" fill="#d81c1c"/><path d="M13 13L22 7L32 7L32 12L22 17Z" fill="#f06060"/><path d="M13 13L22 17L32 12L32 47L22 48L13 41Z" fill="#d41818"/><text x="14" y="40" font-family="Liberation Sans" font-weight="bold" font-size="26" fill="#f0f0f0" stroke="#a0a0a0" stroke-width="0.5">S</text></svg>
<svg class="a" style="left:13px;top:250px" width="13" height="13"><rect x="0.5" y="0.5" width="12" height="12" fill="#f4f4f4" stroke="#c8c8c8"/><path d="M3 11C3 7 5 5 8 5V3L11 6L8 9V7C6 7 4.5 8.5 3 11Z" fill="#2a70c8"/></svg>
<div class="dl" style="left:6px;top:268px">SOLI</div><div class="dl" style="left:6px;top:282px">2015</div>
<svg class="a" style="left:16px;top:319px" width="16" height="46"><rect x="6" y="0" width="10" height="45" fill="#f4f4f4"/><rect x="8" y="4" width="8" height="4" fill="#a8a8a8"/><rect x="8" y="10" width="8" height="2" fill="#c8c8c8"/><path d="M0 17L16 14V41L0 38Z" fill="#1e7145"/><text x="2.5" y="33" font-family="Liberation Sans" font-weight="bold" font-size="15" fill="#fff">X</text></svg>
<div class="dl" style="left:2px;top:372px">Sched</div>
<svg class="a" style="left:16px;top:424px" width="16" height="46"><rect x="6" y="0" width="10" height="45" fill="#f4f4f4"/><rect x="8" y="4" width="8" height="4" fill="#a8a8a8"/><rect x="8" y="10" width="8" height="2" fill="#c8c8c8"/><path d="M0 17L16 14V41L0 38Z" fill="#1e7145"/><text x="2.5" y="33" font-family="Liberation Sans" font-weight="bold" font-size="15" fill="#fff">X</text></svg>
<div class="dl" style="left:20px;top:477px">Gr</div><div class="dl" style="left:7px;top:491px">Track</div>
<svg class="a" style="left:16px;top:529px" width="16" height="46"><rect x="6" y="0" width="10" height="45" fill="#f4f4f4"/><rect x="8" y="4" width="8" height="4" fill="#a8a8a8"/><rect x="8" y="10" width="8" height="2" fill="#c8c8c8"/><path d="M0 17L16 14V41L0 38Z" fill="#2b579a"/><text x="2.5" y="33" font-family="Liberation Sans" font-weight="bold" font-size="14" fill="#fff">W</text></svg>
<div class="dl" style="left:9px;top:580px">BME</div><div class="dl" style="left:6px;top:594px">Assig</div>
<svg class="a" style="left:13px;top:642px" width="48" height="37"><rect width="48" height="37" fill="#fafafa"/><path d="M17 5L21 2L34 9L34 24L30 27L17 20Z" fill="#5a5e62"/><path d="M17 5L21 2L34 9L30 12Z" fill="#8a8e92"/><path d="M30 12L34 9L34 24L30 27Z" fill="#3a3e42"/><ellipse cx="23.5" cy="16" rx="5" ry="5.5" fill="#74787c"/><ellipse cx="23.5" cy="16" rx="3" ry="3.5" fill="#4a4e52"/><path d="M33 24L40 20L48 22L48 37L41 37L33 33Z" fill="#d81c1c"/><path d="M33 24L40 20L48 22L41 26Z" fill="#f06060"/><text x="34" y="35" font-family="Liberation Sans" font-weight="bold" font-size="10" fill="#fff">S</text><text x="41" y="34" font-family="Liberation Sans" font-weight="bold" font-size="9" fill="#fff">W</text></svg>
<div class="dl" style="left:2px;top:684px;letter-spacing:-0.25px">Lopez_Rafa...</div>
<svg class="a" style="left:96px;top:635px" width="32" height="43"><path d="M0 3L15 0L16 42L0 38Z" fill="#f4d47c"/><path d="M0 3L15 0L16 4L1 7Z" fill="#e8c060"/><path d="M6 6L24 10L24 43L6 37Z" fill="#06081a"/><path d="M16 4L32 9L32 41L24 43L24 10Z" fill="#0a0e24"/><path d="M9 21L20 24" stroke="#3a8cff" stroke-width="1.2"/><circle cx="13" cy="22" r="1.2" fill="#80c0ff"/><path d="M27 24L27 30" stroke="#2a6ad0" stroke-width="1"/></svg>
<div class="dl" style="left:78px;top:684px">Flourescen...</div>
<div class="a" style="left:32px;top:10px;width:569px;height:98px;background:#fff"></div>
<div class="a" style="left:33px;top:11px;width:567px;height:96px;background:#eeeeee"></div>
<div class="a" style="left:32px;top:10px;width:569px;height:30px;background:#fff"></div>
<div class="a" style="left:32px;top:40px;width:569px;height:21px;background:#f0f0f0"></div>
<svg width="10" height="16" viewBox="0 0 10 16" style="position:absolute;left:43px;top:16px"><g fill="#d89a10"><rect x="4.6" y="0" width="1.9" height="8.2"/><path d="M4.8 4.8 C1.2 6 0.8 10.6 3.6 12 L4.4 11 C2.4 10 2.6 7 4.8 6.2Z"/><rect x="3.4" y="9.6" width="4.6" height="1.5"/><rect x="3" y="11" width="1.6" height="3"/><path d="M0.3 15.2 L9.8 15.2 L8.6 13.6 L1.5 13.6Z"/></g><rect x="4.8" y="1.5" width="1.5" height="1.5" fill="#e8d020"/></svg>
<div class="t ttl" style="left:61px;top:19px">ImageJ</div>
<svg class="a" style="left:573px;top:19px" width="11" height="11"><path d="M0.5 0.5L10 10M10 0.5L0.5 10" stroke="#808080" stroke-width="1.05"/></svg><div class="a" style="left:527px;top:19px;width:10px;height:10px;border:1px solid #808080"></div><div class="a" style="left:482px;top:24px;width:10px;height:1px;background:#808080"></div>
<div class="t menu" style="left:38px;top:42px">File</div>
<div class="t menu" style="left:75px;top:42px">Edit</div>
<div class="t menu" style="left:114px;top:42px">Image</div>
<div class="t menu" style="left:168px;top:42px">Process</div>
<div class="t menu" style="left:237px;top:42px">Analyze</div>
<div class="t menu" style="left:302px;top:42px">Plugins</div>
<div class="t menu" style="left:365px;top:42px">Window</div>
<div class="t menu" style="left:430px;top:42px">Help</div>
<div class="tb" style="left:33px;width:28px;"></div>
<div class="tb p" style="left:61px;width:28px;"></div>
<div class="tb" style="left:89px;width:28px;"></div>
<div class="tb" style="left:117px;width:28px;"></div>
<div class="tb" style="left:145px;width:28px;"></div>
<div class="tb" style="left:173px;width:28px;"></div>
<div class="tb" style="left:201px;width:28px;"></div>
<div class="tb" style="left:229px;width:28px;"></div>
<div class="tb" style="left:257px;width:28px;"></div>
<div class="tb" style="left:285px;width:28px;"></div>
<div class="tb" style="left:313px;width:28px;"></div>
<div class="tb" style="left:341px;width:28px;"></div>
<div class="tb" style="left:378px;width:28px;"></div>
<div class="tb" style="left:406px;width:28px;"></div>
<div class="tb" style="left:434px;width:28px;"></div>
<div class="tb" style="left:462px;width:28px;"></div>
<div class="tb" style="left:490px;width:28px;"></div>
<div class="tb" style="left:518px;width:28px;"></div>
<div class="tb" style="left:546px;width:28px;"></div>
<div class="tb" style="left:574px;width:26px;border-right:none;"></div>
<svg class="a" style="left:0;top:0" width="610" height="95" viewBox="0 0 610 95">
<g fill="none" stroke="#0c2440" stroke-width="1.4">
<rect x="38.5" y="67.5" width="17" height="13"/>
<ellipse cx="76" cy="74.7" rx="8.8" ry="6.6"/>
<path d="M95.5 72.5L99.5 68.5L110.5 68.5L106.3 74L109.5 79.5L95.5 79.5Z"/>
<path d="M123.5 69C127 66.8 129 69.5 131 70.8C133 69.5 135.5 66.8 138.8 69C142 72 139.5 80 131 80C122.5 80 120 72 123.5 69Z"/>
<path d="M150.7 78L168.1 68.9" stroke-width="1.2"/>
<path d="M194.9 79.3L178.1 79.3L189.9 67.4" stroke-width="1.2"/>
<path d="M186 73.5Q188.5 76 188.5 79" stroke-width="1"/>
<path d="M207 74.5L222 74.5M214.5 67L214.5 82" stroke-width="1.4"/>
<path d="M240 71L249.7 80.7" stroke="#404858" stroke-width="1.6"/>
<path d="M264 81H269M273.5 81H279M265.5 81L271 67L276.8 81M267.3 76.5H275" stroke-width="1.2"/>
<circle cx="296.5" cy="72.2" r="4.2" stroke-width="1.4"/>
<path d="M300 76.3L305 81.3" stroke-width="2.4"/>
<path d="M321 78C319 75 318.5 73.5 320 73C321.5 72.5 322.5 75 323 76L322 69.5C322 68 324 67.8 324.5 69.3L325.5 74L325.8 68C326 66.8 328 66.8 328.2 68.2L328.5 73.8L329.5 68.8C329.8 67.5 331.6 67.8 331.5 69.2L331 75L333 70.5C333.5 69.5 335.3 70 335 71.5L333 78C332 80 331.5 81 331 82M321 78C322.5 80 324 81 324.5 82" stroke-width="1.2"/>
<rect x="345.8" y="65.8" width="18.4" height="17.4" stroke="#000" stroke-width="1.6"/>
</g>
<g fill="none" stroke="#1a3a80" stroke-width="1.1">
<path d="M449.3 66L446.4 75M452.9 66L448.4 75"/>
<path d="M446 74.5C444 76 442 79 441.2 81.7C444 81.5 446.5 80 448 77.5C448.8 76 448.5 75 448 74.8Z" fill="#f4f4f4"/>
<path d="M474.5 71.2L480 75L476 80.5L469.8 76.5Z" fill="#f4f4f4" stroke-width="1.2"/>
<circle cx="474.2" cy="69.2" r="1.8"/>
<path d="M474.5 69.5V74.5"/>
<path d="M496 81.7L504.5 73" stroke-width="1.3"/>
<path d="M511 67L502.3 71.3L506.7 75.6Z" fill="#fff" stroke-width="1.2"/>
</g>
<path d="M511.2 66.8L507 68.6L509.4 71Z" fill="#1a3a80"/>
<path d="M479.5 77L481 80L479 80Z" fill="#fff"/>
<path d="M348.5 81L358 71.5" stroke="#c8c8c8" stroke-width="3"/>
<path d="M348.5 81L358 71.5" stroke="#f8f8f8" stroke-width="1.6"/>
<path d="M356 71L361 76" stroke="#fff" stroke-width="1.6"/>
<circle cx="360.5" cy="69.5" r="2.4" fill="#fff"/>
<rect x="212" y="72" width="5" height="5" fill="#f8f000" stroke="#0c2440" stroke-width="0.8"/>
<circle cx="150.7" cy="78" r="1.3" fill="#0c2440"/><circle cx="168.1" cy="68.9" r="1.3" fill="#0c2440"/>
<circle cx="189.9" cy="67.4" r="1.2" fill="#0c2440"/><circle cx="194.9" cy="79.3" r="1.2" fill="#0c2440"/>
<path d="M238 66L239 68.5L241.5 68.5L239.5 70L240.3 72.5L238 71L235.7 72.5L236.5 70L234.5 68.5L237 68.5Z" fill="#f8f000" stroke="#606020" stroke-width="0.4"/>
<path d="M478.5 76L481 79L478 80Z" fill="#fff"/>
<path d="M53 81L59 81L56 84.2Z" fill="#a00000"/><path d="M82.5 81.5L88.5 81.5L85.5 84.7Z" fill="#a00000"/><path d="M161.5 80.2L167.5 80.2L164.5 83.4Z" fill="#a00000"/><path d="M220 80L226 80L223 83.2Z" fill="#a00000"/><path d="M396.5 80L402.5 80L399.5 83.2Z" fill="#a00000"/><path d="M424.5 80L430.5 80L427.5 83.2Z" fill="#a00000"/>
<text x="382.3" y="76.7" font-family="Liberation Sans" font-size="11" fill="#0c2a78">Dev</text>
<text x="410.2" y="76.7" font-family="Liberation Sans" font-size="11" fill="#0c2a78">Stk</text>
<text x="579.3" y="77.5" font-family="Liberation Sans" font-size="12.5" fill="#a81818">&gt;&gt;</text>
</svg>
<div class="a" style="left:32px;top:124px;width:259px;height:492px;background:#fff"></div>
<svg width="10" height="16" viewBox="0 0 10 16" style="position:absolute;left:43px;top:130px"><g fill="#d89a10"><rect x="4.6" y="0" width="1.9" height="8.2"/><path d="M4.8 4.8 C1.2 6 0.8 10.6 3.6 12 L4.4 11 C2.4 10 2.6 7 4.8 6.2Z"/><rect x="3.4" y="9.6" width="4.6" height="1.5"/><rect x="3" y="11" width="1.6" height="3"/><path d="M0.3 15.2 L9.8 15.2 L8.6 13.6 L1.5 13.6Z"/></g><rect x="4.8" y="1.5" width="1.5" height="1.5" fill="#e8d020"/></svg>
<div class="t ttl" style="left:67px;top:133px">(18).jpg (gree...</div>
<svg class="a" style="left:263px;top:133px" width="11" height="11"><path d="M0.5 0.5L10 10M10 0.5L0.5 10" stroke="#808080" stroke-width="1.05"/></svg><div class="a" style="left:217px;top:133px;width:10px;height:10px;border:1px solid #808080"></div><div class="a" style="left:172px;top:138px;width:10px;height:1px;background:#808080"></div>
<div class="t" style="left:37px;top:154px;font-size:12px;color:#000;letter-spacing:0.06px">2988x5312 pixels; 8-bit; 15MB</div>
<svg class="a" style="left:36px;top:168px" width="251" height="444" viewBox="36 168 251 444">
<defs>
<radialGradient id="glow" cx="0.5" cy="0.4" r="0.5"><stop offset="0" stop-color="#3a3a3a"/><stop offset="0.5" stop-color="#1a1a1a"/><stop offset="1" stop-color="#000" stop-opacity="0"/></radialGradient>
<linearGradient id="band" x1="0" y1="358" x2="0" y2="399" gradientUnits="userSpaceOnUse"><stop offset="0" stop-color="#3a3a3a"/><stop offset="0.35" stop-color="#8a8a8a"/><stop offset="0.62" stop-color="#f4f4f4"/><stop offset="0.72" stop-color="#c0c0c0"/><stop offset="0.88" stop-color="#7a7a7a"/><stop offset="1" stop-color="#505050"/></linearGradient>
<linearGradient id="lside" x1="70" y1="0" x2="100" y2="0" gradientUnits="userSpaceOnUse"><stop offset="0" stop-color="#707070"/><stop offset="0.35" stop-color="#a8a8a8"/><stop offset="1" stop-color="#7a7a7a"/></linearGradient>
<linearGradient id="rside" x1="249" y1="0" x2="218" y2="0" gradientUnits="userSpaceOnUse"><stop offset="0" stop-color="#606060"/><stop offset="0.4" stop-color="#8a8a8a"/><stop offset="1" stop-color="#5a5a5a"/></linearGradient>
<linearGradient id="below" x1="0" y1="399" x2="0" y2="470" gradientUnits="userSpaceOnUse"><stop offset="0" stop-color="#2a2a2a"/><stop offset="1" stop-color="#000" stop-opacity="0"/></linearGradient>
<radialGradient id="egg" cx="0.4" cy="0.45" r="0.6"><stop offset="0" stop-color="#f0f0f0"/><stop offset="0.5" stop-color="#c4c4c4"/><stop offset="1" stop-color="#8a8a8a"/></radialGradient>
</defs>
<rect x="36" y="168" width="251" height="444" fill="#000"/>
<filter id="bl" x="-20%" y="-20%" width="140%" height="140%"><feGaussianBlur stdDeviation="1.6"/></filter><ellipse cx="158" cy="392" rx="105" ry="50" fill="url(#glow)" opacity="0.5"/>
<ellipse cx="160" cy="405" rx="80" ry="55" fill="url(#glow)" opacity="0.8"/>
<path d="M98 343L101 343L101 412L74 410L70 392Z" fill="url(#lside)" filter="url(#bl)"/><ellipse cx="80" cy="395" rx="8" ry="10" fill="#d0d0d0" opacity="0.5" filter="url(#bl)"/>
<path d="M216 346L249 389L244 425L216 402Z" fill="url(#rside)" filter="url(#bl)"/>
<path d="M100 345L216 348L216 364L100 364Z" fill="#0a0a0a"/><path d="M103 352L214 354" stroke="#3a3a3a" stroke-width="1.5"/>
<rect x="100" y="358" width="116" height="41" fill="url(#band)"/>
<rect x="100" y="397" width="116" height="3" fill="#262626"/>
<path d="M100 352L104 349L104 398L100 399Z" fill="#202020"/>
<rect x="216" y="362" width="3" height="36" fill="#f0f0f0"/>
<ellipse cx="128" cy="373" rx="5" ry="1.5" fill="#1a1a1a"/><ellipse cx="126" cy="391" rx="6" ry="1.8" fill="#1a1a1a"/>
<ellipse cx="182" cy="373" rx="5" ry="1.5" fill="#1a1a1a"/><ellipse cx="186" cy="389" rx="6" ry="1.8" fill="#3a3a3a"/>
<ellipse cx="153.5" cy="377.8" rx="20" ry="13.5" fill="url(#egg)"/>
<ellipse cx="156" cy="386" rx="11" ry="4" fill="#707070" opacity="0.7"/>
<ellipse cx="153.5" cy="377.8" rx="23.5" ry="15.3" fill="none" stroke="#f0e000" stroke-width="1.1"/>
<g fill="#fff" stroke="#000" stroke-width="1">
<rect x="152.5" y="361.5" width="3" height="3"/><rect x="152.5" y="391.5" width="3" height="3"/>
<rect x="129.5" y="376.5" width="3" height="3"/><rect x="175.5" y="376.5" width="3" height="3"/>
<rect x="136.5" y="366.5" width="3" height="3"/><rect x="168.5" y="366.5" width="3" height="3"/>
<rect x="136.5" y="387.5" width="3" height="3"/><rect x="168.5" y="387.5" width="3" height="3"/>
</g>
</svg>
<div class="a" style="left:332px;top:117px;width:397px;height:580px;background:#d42a2a"></div>
<div class="a" style="left:333px;top:118px;width:395px;height:578px;background:#fff"></div>
<div class="a" style="left:333px;top:148px;width:395px;height:20px;background:#f0f0f0"></div>
<svg width="10" height="16" viewBox="0 0 10 16" style="position:absolute;left:344px;top:124px"><g fill="#d89a10"><rect x="4.6" y="0" width="1.9" height="8.2"/><path d="M4.8 4.8 C1.2 6 0.8 10.6 3.6 12 L4.4 11 C2.4 10 2.6 7 4.8 6.2Z"/><rect x="3.4" y="9.6" width="4.6" height="1.5"/><rect x="3" y="11" width="1.6" height="3"/><path d="M0.3 15.2 L9.8 15.2 L8.6 13.6 L1.5 13.6Z"/></g><rect x="4.8" y="1.5" width="1.5" height="1.5" fill="#e8d020"/></svg>
<div class="t" style="left:361px;top:127px;font-size:11.5px;color:#000">Results</div>
<svg class="a" style="left:700px;top:127px" width="11" height="11"><path d="M0.5 0.5L10 10M10 0.5L0.5 10" stroke="#111" stroke-width="1.05"/></svg><div class="a" style="left:654px;top:127px;width:10px;height:10px;border:1px solid #111"></div><div class="a" style="left:609px;top:132px;width:10px;height:1px;background:#111"></div>
<div class="t menu" style="left:339px;top:150px">File</div>
<div class="t menu" style="left:376px;top:150px">Edit</div>
<div class="t menu" style="left:415px;top:150px">Font</div>
<div class="t menu" style="left:458px;top:150px">Results</div>
<div class="a" style="left:333px;top:168px;width:378px;height:22px;background:#c0c0c0;border-top:1px solid #404040;border-bottom:1px solid #404040"></div>
<div class="a" style="left:367px;top:169px;width:1px;height:20px;background:#404040"></div><div class="a" style="left:368px;top:169px;width:1px;height:20px;background:#fff"></div>
<div class="a" style="left:430px;top:169px;width:1px;height:20px;background:#404040"></div><div class="a" style="left:431px;top:169px;width:1px;height:20px;background:#fff"></div>
<div class="a" style="left:497px;top:169px;width:1px;height:20px;background:#404040"></div><div class="a" style="left:498px;top:169px;width:1px;height:20px;background:#fff"></div>
<div class="a" style="left:558px;top:169px;width:1px;height:20px;background:#404040"></div><div class="a" style="left:559px;top:169px;width:1px;height:20px;background:#fff"></div>
<div class="a" style="left:665px;top:169px;width:1px;height:20px;background:#404040"></div><div class="a" style="left:666px;top:169px;width:1px;height:20px;background:#fff"></div>
<div class="t c14" style="left:370px;top:172px">Area</div>
<div class="t c14" style="left:433px;top:172px">Mean</div>
<div class="t c14" style="left:500px;top:172px">StdDev</div>
<div class="t c14" style="left:561px;top:172px">IntDen</div>
<div class="t c14" style="left:668px;top:172px">RawInt</div>
<div class="a" style="left:333px;top:190px;width:378px;height:490px;overflow:hidden">
<div class="t c14" style="left:2px;top:4px;letter-spacing:0.2px">1</div>
<div class="t c14" style="left:37px;top:4px;letter-spacing:0.2px">156104</div>
<div class="t c14" style="left:100px;top:4px;letter-spacing:0.2px">68.523</div>
<div class="t c14" style="left:167px;top:4px;letter-spacing:0.2px">33.232</div>
<div class="t c14" style="left:228px;top:4px;letter-spacing:0.2px">10696761</div>
<div class="t c14" style="left:335px;top:4px;letter-spacing:0.2px">10696761</div>
<div class="t c14" style="left:2px;top:25px;letter-spacing:0.2px">2</div>
<div class="t c14" style="left:37px;top:25px;letter-spacing:0.2px">156104</div>
<div class="t c14" style="left:100px;top:25px;letter-spacing:0.2px">128.147</div>
<div class="t c14" style="left:167px;top:25px;letter-spacing:0.2px">74.976</div>
<div class="t c14" style="left:228px;top:25px;letter-spacing:0.2px">20004207</div>
<div class="t c14" style="left:335px;top:25px;letter-spacing:0.2px">20004207</div>
<div class="t c14" style="left:2px;top:46px;letter-spacing:0.2px">3</div>
<div class="t c14" style="left:37px;top:46px;letter-spacing:0.2px">156104</div>
<div class="t c14" style="left:100px;top:46px;letter-spacing:0.2px">167.876</div>
<div class="t c14" style="left:167px;top:46px;letter-spacing:0.2px">68.445</div>
<div class="t c14" style="left:228px;top:46px;letter-spacing:0.2px">26206144.000</div>
<div class="t c14" style="left:335px;top:46px;letter-spacing:0.2px">26206144.000</div>
</div>
<div class="a" style="left:711px;top:168px;width:16px;height:512px;background:#f0f0f0"></div>
<div class="a" style="left:712px;top:184px;width:15px;height:478px;background:#cdcdcd"></div>
<svg class="a" style="left:711px;top:168px" width="16" height="16"><path d="M4.5 10.5L8 7L11.5 10.5" fill="none" stroke="#555" stroke-width="2.4"/></svg>
<svg class="a" style="left:711px;top:662px" width="16" height="17"><path d="M4.5 7L8 10.5L11.5 7" fill="none" stroke="#555" stroke-width="2.4"/></svg>
<div class="a" style="left:333px;top:679px;width:395px;height:17px;background:#f0f0f0"></div>
<div class="a" style="left:350px;top:680px;width:310px;height:15px;background:#cdcdcd"></div>
<div class="a" style="left:660px;top:679px;width:51px;height:16px;background:#c6c6c6"></div>
<svg class="a" style="left:334px;top:680px" width="16" height="15"><path d="M10 4L6.5 7.5L10 11" fill="none" stroke="#555" stroke-width="2.4"/></svg>
<svg class="a" style="left:711px;top:680px" width="16" height="15"><path d="M6.5 4L10 7.5L6.5 11" fill="none" stroke="#555" stroke-width="2.4"/></svg>
<div class="a" style="left:753px;top:1px;width:608px;height:727px;background:#fff"></div>
<svg width="10" height="16" viewBox="0 0 10 16" style="position:absolute;left:764px;top:7px"><g fill="#d89a10"><rect x="4.6" y="0" width="1.9" height="8.2"/><path d="M4.8 4.8 C1.2 6 0.8 10.6 3.6 12 L4.4 11 C2.4 10 2.6 7 4.8 6.2Z"/><rect x="3.4" y="9.6" width="4.6" height="1.5"/><rect x="3" y="11" width="1.6" height="3"/><path d="M0.3 15.2 L9.8 15.2 L8.6 13.6 L1.5 13.6Z"/></g><rect x="4.8" y="1.5" width="1.5" height="1.5" fill="#e8d020"/></svg>
<div class="t ttl" style="left:782px;top:10px">ROI Manager</div>
<svg class="a" style="left:1333px;top:10px" width="11" height="11"><path d="M0.5 0.5L10 10M10 0.5L0.5 10" stroke="#808080" stroke-width="1.05"/></svg><div class="a" style="left:1287px;top:10px;width:10px;height:10px;border:1px solid #808080"></div><div class="a" style="left:1242px;top:15px;width:10px;height:1px;background:#808080"></div>
<div class="a" style="left:753px;top:31px;width:527px;height:695px;border:1px solid #7a8a99;background:#fff"></div>
<div class="a" style="left:754px;top:32px;width:510px;height:17px;background:#b8cfe5"></div>
<div class="t" style="left:755px;top:35px;font-size:13px;font-weight:bold;color:#222">1176-1536</div>
<div class="a" style="left:1264px;top:32px;width:1px;height:693px;background:#7a8a99"></div>
<div class="a" style="left:1265px;top:32px;width:14px;height:693px;background:#eeeeee;border-left:1px solid #c4d6ea;border-right:1px solid #f6f6f6"></div>
<div class="a" style="left:1265px;top:32px;width:14px;height:16px;background:#fff;border-bottom:1px solid #7a8a99"></div>
<div class="a" style="left:1265px;top:709px;width:14px;height:16px;background:#eeeeee;border-top:1px solid #7a8a99"></div>
<svg class="a" style="left:1265px;top:32px" width="14" height="16"><path d="M3 11L7 6L11 11Z" fill="#222"/></svg>
<svg class="a" style="left:1265px;top:710px" width="14" height="16"><path d="M3 5L7 10L11 5Z" fill="#222"/></svg>
<div class="rb" style="top:32px"></div>
<div class="rbt" style="top:58px">Add [t]</div>
<div class="rb" style="top:95px"></div>
<div class="rbt" style="top:121px">Update</div>
<div class="rb" style="top:158px"></div>
<div class="rbt" style="top:184px">Delete</div>
<div class="rb" style="top:221px"></div>
<div class="rbt" style="top:247px">Rename...</div>
<div class="rb" style="top:284px"></div>
<div class="rbt" style="top:310px">Measure</div>
<div class="rb" style="top:347px"></div>
<div class="rbt" style="top:373px">Deselect</div>
<div class="rb" style="top:410px"></div>
<div class="rbt" style="top:436px">Properties...</div>
<div class="rb" style="top:473px"></div>
<div class="rbt" style="top:499px">Flatten [F]</div>
<div class="rb" style="top:536px"></div>
<div class="rbt" style="top:562px">More &raquo;</div>
<div class="a" style="left:1281px;top:624px;width:12px;height:12px;background:#fff;border-top:2px solid #707070;border-left:2px solid #707070;border-right:1px solid #e0e0e0;border-bottom:1px solid #e0e0e0"></div>
<div class="t" style="left:1297px;top:625px;font-size:12.5px;color:#000">Show All</div>
<div class="a" style="left:1281px;top:687px;width:12px;height:12px;background:#fff;border-top:2px solid #707070;border-left:2px solid #707070;border-right:1px solid #e0e0e0;border-bottom:1px solid #e0e0e0"></div>
<div class="t" style="left:1297px;top:688px;font-size:12.5px;color:#000">Labels</div>
<div class="a" style="left:0;top:728px;width:1366px;height:40px;background:#050303"></div>
<div class="a" style="left:48px;top:728px;width:344px;height:40px;background:#333333"></div>
<svg class="a" style="left:15px;top:738px" width="18" height="20"><path d="M1 3.5L7 2.8V9H1Z M8 2.6L17 1.8V9H8Z M1 10H7V17L1 16.2Z M8 10H17V18.2L8 17.3Z" fill="#fff"/></svg>
<div class="a" style="left:57px;top:737px;width:22px;height:22px;border-radius:50%;border:2.6px solid #fafafa;box-shadow:0 0 1.5px rgba(255,255,255,0.7),inset 0 0 1.5px rgba(255,255,255,0.7)"></div>
<div class="t" style="left:88px;top:742px;font-size:14.8px;color:#a4a4a4">Ask me anything</div>
<svg class="a" style="left:364px;top:739px" width="15" height="18"><rect x="3.5" y="0.5" width="7" height="11" rx="1" fill="none" stroke="#9a9a9a"/><path d="M1 8V10C1 13 3.5 14.5 7 14.5C10.5 14.5 13 13 13 10V8M7 14.5V17M4 17H10" fill="none" stroke="#9a9a9a"/></svg>
<svg class="a" style="left:405px;top:740px" width="22" height="16"><rect x="4.5" y="0.5" width="12" height="14" fill="none" stroke="#fff" stroke-width="1.3"/><path d="M2.5 2.5H0.8V12.5H2.5M18.5 2.5H20.3V12.5H18.5" fill="none" stroke="#fff" stroke-width="1.3"/></svg>
<svg class="a" style="left:454px;top:736px" width="24" height="24" viewBox="0 0 24 24"><defs><radialGradient id="ffb" cx="0.55" cy="0.3" r="0.7"><stop offset="0" stop-color="#50b8f0"/><stop offset="0.6" stop-color="#1a6ac0"/><stop offset="1" stop-color="#0a2a80"/></radialGradient><linearGradient id="ffo" x1="0" y1="0" x2="0" y2="1"><stop offset="0" stop-color="#f07020"/><stop offset="1" stop-color="#e04818"/></linearGradient><linearGradient id="ffy" x1="0" y1="0" x2="0" y2="1"><stop offset="0" stop-color="#ffe060"/><stop offset="1" stop-color="#f8a020"/></linearGradient></defs><circle cx="13" cy="11.5" r="11" fill="url(#ffy)"/><circle cx="12.6" cy="10.6" r="9.5" fill="url(#ffb)"/><path d="M3 3C2 5 1.5 7 1.8 10C2 17 7 22.5 13 22.5C18 22.5 21.5 19.5 22.5 16C20 18.5 16 19.5 12.5 18C9 16.5 8.5 13 10.5 12C12 11.3 13.5 12 14 11C12.5 10 11 9 10.5 7C10 5.5 11 4.5 12 4.5C10 3.8 8 4.5 7 5.5C6 4.5 4.5 4 3 3Z" fill="url(#ffo)"/></svg>
<svg class="a" style="left:504px;top:739px" width="22" height="18"><path d="M0 0H9L10.5 1.5H21.5V17H0Z" fill="#e8b830"/><rect x="0" y="3" width="21.5" height="14" fill="#f8dc80"/><rect x="1.5" y="0.8" width="6" height="1.2" fill="#fff0c0"/><path d="M4 9.5H17.8V18H14V13H8V18H4Z" fill="#1ab0f0"/></svg>
<div class="a" style="left:540px;top:728px;width:44px;height:40px;background:#333333"></div>
<div class="a" style="left:584px;top:728px;width:4px;height:40px;background:#1e1e1e"></div>
<svg width="10" height="16" viewBox="0 0 10 16" style="position:absolute;left:559px;top:740px"><g fill="#d89a10"><rect x="4.6" y="0" width="1.9" height="8.2"/><path d="M4.8 4.8 C1.2 6 0.8 10.6 3.6 12 L4.4 11 C2.4 10 2.6 7 4.8 6.2Z"/><rect x="3.4" y="9.6" width="4.6" height="1.5"/><rect x="3" y="11" width="1.6" height="3"/><path d="M0.3 15.2 L9.8 15.2 L8.6 13.6 L1.5 13.6Z"/></g><rect x="4.8" y="1.5" width="1.5" height="1.5" fill="#e8d020"/></svg>
<svg class="a" style="left:601px;top:737px" width="24" height="22"><rect x="10" y="2.5" width="13.5" height="17" fill="#fff" stroke="#2b579a"/><path d="M12 6H22M12 9H22M12 12H22M12 15H22" stroke="#2b579a"/><path d="M0 2.5L13 0V22L0 19.5Z" fill="#2b579a"/><text x="1.5" y="15" font-family="Liberation Sans" font-weight="bold" font-size="10" fill="#fff">W</text></svg>
<div class="a" style="left:446px;top:766px;width:31px;height:2px;background:#76b9ed"></div>
<div class="a" style="left:477px;top:766px;width:9px;height:2px;background:#4a7aa8"></div>
<div class="a" style="left:495px;top:766px;width:31px;height:2px;background:#76b9ed"></div>
<div class="a" style="left:526px;top:766px;width:9px;height:2px;background:#4a7aa8"></div>
<div class="a" style="left:540px;top:766px;width:44px;height:2px;background:#76b9ed"></div>
<div class="a" style="left:584px;top:766px;width:4px;height:2px;background:#4a7aa8"></div>
<div class="a" style="left:593px;top:766px;width:40px;height:2px;background:#76b9ed"></div>
<svg class="a" style="left:1176px;top:743px" width="14" height="9"><path d="M1 8L7 1.5L13 8" fill="none" stroke="#fff" stroke-width="1.3"/></svg>
<svg class="a" style="left:1198px;top:741px" width="18" height="13"><path d="M2 1V4M5 1V4M0.5 4H6.5V6.5L3.5 8.5V12" fill="none" stroke="#fff" stroke-width="1.1"/><rect x="6.5" y="4.5" width="9" height="7" fill="none" stroke="#fff" stroke-width="1.1"/><rect x="8" y="6" width="3" height="4" fill="#fff"/><rect x="15.5" y="6.5" width="1.5" height="3" fill="#fff"/></svg>
<svg class="a" style="left:1225px;top:742px" width="15" height="14"><path d="M1 13A12 12 0 0 1 13 1M3.5 13A9.5 9.5 0 0 1 13 3.5M6 13A7 7 0 0 1 13 6" fill="none" stroke="#fff" stroke-width="1.1"/><rect x="9" y="9" width="5" height="5" fill="#fff"/></svg>
<svg class="a" style="left:1246px;top:741px" width="18" height="14"><path d="M1 4.5H4L8 1V13L4 9.5H1Z" fill="none" stroke="#fff" stroke-width="1.1"/><path d="M10.5 4.5Q12 7 10.5 9.5M12.8 2.8Q15.5 7 12.8 11.2M15 1Q18.5 7 15 13" fill="none" stroke="#fff" stroke-width="1.1"/></svg>
<svg class="a" style="left:1271px;top:740px" width="17" height="17"><path d="M0 0H16V12H9.5L8 14L6.5 12H0Z" fill="#fff"/><path d="M3 3H13M3 6H13M3 9H10" stroke="#000" stroke-width="1.2"/></svg>
<div class="t" style="left:1304px;top:733px;font-size:12px;color:#fff">9:38 PM</div>
<div class="t" style="left:1300px;top:750px;font-size:12px;color:#fff">11/3/2015</div>
<div class="a" style="left:1361px;top:728px;width:1px;height:40px;background:#505050"></div>
</body></html>
